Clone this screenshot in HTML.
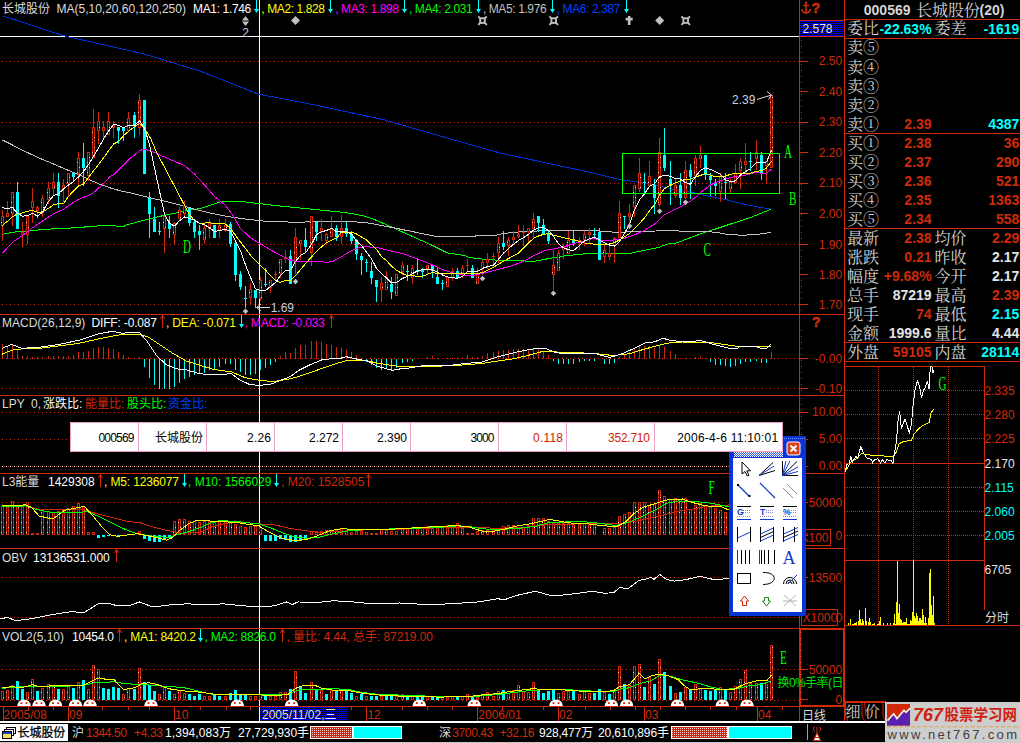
<!DOCTYPE html>
<html lang="zh"><head><meta charset="utf-8"><title>长城股份 000569</title>
<style>html,body{margin:0;padding:0;background:#000;}body{width:1020px;height:743px;overflow:hidden;}svg{display:block;}text{white-space:pre;}</style>
</head><body>
<svg width="1020" height="743" viewBox="0 0 1020 743">
<rect x="0" y="0" width="1020" height="743" fill="#000"/>
<g shape-rendering="crispEdges">
<line x1="2" y1="61.5" x2="799" y2="61.5" stroke="#d02a0a" stroke-width="1" stroke-dasharray="1 3"/>
<line x1="2" y1="122.5" x2="799" y2="122.5" stroke="#d02a0a" stroke-width="1" stroke-dasharray="1 3"/>
<line x1="2" y1="183.5" x2="799" y2="183.5" stroke="#d02a0a" stroke-width="1" stroke-dasharray="1 3"/>
<line x1="2" y1="244.5" x2="799" y2="244.5" stroke="#d02a0a" stroke-width="1" stroke-dasharray="1 3"/>
<line x1="2" y1="304.5" x2="799" y2="304.5" stroke="#d02a0a" stroke-width="1" stroke-dasharray="1 3"/>
<line x1="2" y1="358.5" x2="799" y2="358.5" stroke="#d02a0a" stroke-width="1" stroke-dasharray="1 3"/>
<line x1="2" y1="388.5" x2="799" y2="388.5" stroke="#d02a0a" stroke-width="1" stroke-dasharray="1 3"/>
<line x1="2" y1="412.5" x2="799" y2="412.5" stroke="#d02a0a" stroke-width="1" stroke-dasharray="1 3"/>
<line x1="2" y1="439.5" x2="799" y2="439.5" stroke="#d02a0a" stroke-width="1" stroke-dasharray="1 3"/>
<line x1="2" y1="466.5" x2="799" y2="466.5" stroke="#ffffff" stroke-width="1" stroke-dasharray="1 3"/>
<line x1="4" y1="466.5" x2="799" y2="466.5" stroke="#d02a0a" stroke-width="1" stroke-dasharray="1 3"/>
<line x1="2" y1="502.5" x2="799" y2="502.5" stroke="#d02a0a" stroke-width="1" stroke-dasharray="1 3"/>
<line x1="2" y1="577.5" x2="799" y2="577.5" stroke="#d02a0a" stroke-width="1" stroke-dasharray="1 3"/>
<line x1="2" y1="617.5" x2="799" y2="617.5" stroke="#d02a0a" stroke-width="1" stroke-dasharray="1 3"/>
<line x1="2" y1="669.5" x2="799" y2="669.5" stroke="#d02a0a" stroke-width="1" stroke-dasharray="1 3"/>
<line x1="2" y1="700.5" x2="799" y2="700.5" stroke="#d02a0a" stroke-width="1" stroke-dasharray="1 3"/>
<rect x="259" y="0" width="1" height="721" fill="#fff"/>
<rect x="0" y="36" width="799" height="1" fill="#fff" />
</g>
<g shape-rendering="crispEdges" stroke-linejoin="round">
<polyline points="2.6,15.8 64.0,35.8 143.0,53.7 200.0,71.0 258.0,94.0 314.7,104.9 383.3,119.6 440.0,136.0 500.0,153.0 551.0,164.0 590.0,172.3 606.0,176.3 622.3,180.0 643.8,182.8 660.0,186.4 676.0,189.8 692.3,192.5 704.4,195.2 726.0,199.6 741.5,203.7 757.0,206.8 770.6,209.2" fill="none" stroke="#0030d8" stroke-width="1" />
<polyline points="2.0,234.5 13.5,232.1 27.0,231.2 40.4,229.7 56.5,228.7 75.4,227.8 91.5,226.4 102.3,225.6 115.7,225.6 117.0,226.4 123.8,226.4 127.2,224.4 130.0,224.0 150.2,218.6 164.6,215.3 184.5,211.2 200.0,208.5 210.8,205.2 221.5,201.5 241.7,201.5 259.0,203.6 280.0,206.0 300.0,208.0 320.0,210.0 340.0,212.0 350.0,213.3 363.5,215.8 377.0,220.5 390.4,226.5 403.8,232.6 417.3,238.6 430.8,244.7 447.0,252.8 464.4,255.5 470.0,257.6 483.5,259.2 503.6,260.6 534.6,261.2 545.4,259.2 564.2,255.9 577.7,254.5 590.4,253.4 629.7,253.4 642.2,250.8 657.7,247.7 668.0,244.0 676.4,243.0 680.0,241.8 684.2,240.0 697.7,234.9 707.0,231.8 720.0,227.5 751.8,217.0 770.6,209.4" fill="none" stroke="#00ff00" stroke-width="1" />
<polyline points="2.6,140.0 22.2,150.0 37.7,157.4 53.8,164.1 67.3,169.9 79.4,174.9 87.5,178.9 101.0,184.7 111.7,188.4 121.0,191.0 130.0,192.8 150.2,197.8 170.4,202.5 190.6,208.0 210.8,213.3 232.3,217.3 245.2,219.0 265.4,221.3 300.4,222.4 311.0,221.5 350.0,221.4 370.2,223.2 390.4,227.2 410.6,231.2 436.0,236.4 475.2,236.6 475.8,235.7 497.0,235.0 503.6,233.4 523.8,231.6 544.0,230.7 580.0,230.4 596.6,230.4 598.7,231.0 611.0,231.4 613.2,232.4 655.6,231.0 657.7,230.4 677.4,230.4 680.0,231.4 707.0,231.4 717.6,232.6 728.2,234.5 743.5,235.3 753.0,234.5 763.5,233.8 770.6,232.1" fill="none" stroke="#c0c0c0" stroke-width="1" />
</g>
<g shape-rendering="crispEdges">
<rect x="2" y="210" width="1" height="31" fill="#d02a0a"/>
<rect x="1" y="216" width="3" height="10" fill="#d02a0a"/>
<rect x="2" y="217" width="1" height="8" fill="#000"/>
<rect x="1" y="222" width="1" height="1" fill="#e6d6ee"/>
<rect x="7" y="201" width="1" height="16" fill="#d02a0a"/>
<rect x="6" y="213" width="3" height="4" fill="#d02a0a"/>
<rect x="7" y="214" width="1" height="2" fill="#000"/>
<rect x="12" y="192" width="1" height="34" fill="#d02a0a"/>
<rect x="11" y="192" width="3" height="22" fill="#d02a0a"/>
<rect x="12" y="193" width="1" height="20" fill="#000"/>
<rect x="13" y="197" width="1" height="1" fill="#e6d6ee"/><rect x="11" y="202" width="1" height="1" fill="#e6d6ee"/><rect x="13" y="207" width="1" height="1" fill="#e6d6ee"/><rect x="11" y="212" width="1" height="1" fill="#e6d6ee"/>
<rect x="17" y="182" width="1" height="47" fill="#00ffff"/>
<rect x="16" y="192" width="3" height="37" fill="#00ffff"/>
<rect x="22" y="222" width="1" height="25" fill="#d02a0a"/>
<rect x="21" y="232" width="3" height="3" fill="#d02a0a"/>
<rect x="22" y="233" width="1" height="1" fill="#000"/>
<rect x="27" y="215" width="1" height="29" fill="#d02a0a"/>
<rect x="26" y="216" width="3" height="19" fill="#d02a0a"/>
<rect x="27" y="217" width="1" height="17" fill="#000"/>
<rect x="26" y="222" width="1" height="1" fill="#e6d6ee"/><rect x="28" y="227" width="1" height="1" fill="#e6d6ee"/><rect x="26" y="232" width="1" height="1" fill="#e6d6ee"/>
<rect x="32" y="188" width="1" height="35" fill="#d02a0a"/>
<rect x="31" y="201" width="3" height="7" fill="#d02a0a"/>
<rect x="32" y="202" width="1" height="5" fill="#000"/>
<rect x="37" y="206" width="1" height="13" fill="#d02a0a"/>
<rect x="36" y="207" width="3" height="4" fill="#d02a0a"/>
<rect x="37" y="208" width="1" height="2" fill="#000"/>
<rect x="42" y="195" width="1" height="22" fill="#d02a0a"/>
<rect x="41" y="198" width="3" height="15" fill="#d02a0a"/>
<rect x="42" y="199" width="1" height="13" fill="#000"/>
<rect x="41" y="202" width="1" height="1" fill="#e6d6ee"/><rect x="43" y="207" width="1" height="1" fill="#e6d6ee"/>
<rect x="48" y="182" width="1" height="22" fill="#d02a0a"/>
<rect x="47" y="188" width="3" height="12" fill="#d02a0a"/>
<rect x="48" y="189" width="1" height="10" fill="#000"/>
<rect x="47" y="192" width="1" height="1" fill="#e6d6ee"/><rect x="49" y="197" width="1" height="1" fill="#e6d6ee"/>
<rect x="53" y="173" width="1" height="22" fill="#d02a0a"/>
<rect x="52" y="182" width="3" height="7" fill="#d02a0a"/>
<rect x="53" y="183" width="1" height="5" fill="#000"/>
<rect x="54" y="187" width="1" height="1" fill="#e6d6ee"/>
<rect x="58" y="173" width="1" height="35" fill="#00ffff"/>
<rect x="57" y="182" width="3" height="14" fill="#00ffff"/>
<rect x="63" y="179" width="1" height="23" fill="#d02a0a"/>
<rect x="62" y="185" width="3" height="4" fill="#d02a0a"/>
<rect x="63" y="186" width="1" height="2" fill="#000"/>
<rect x="64" y="187" width="1" height="1" fill="#e6d6ee"/>
<rect x="68" y="173" width="1" height="23" fill="#d02a0a"/>
<rect x="67" y="173" width="3" height="11" fill="#d02a0a"/>
<rect x="68" y="174" width="1" height="9" fill="#000"/>
<rect x="69" y="177" width="1" height="1" fill="#e6d6ee"/><rect x="67" y="182" width="1" height="1" fill="#e6d6ee"/>
<rect x="73" y="172" width="1" height="10" fill="#00ffff"/>
<rect x="72" y="173" width="3" height="4" fill="#00ffff"/>
<rect x="78" y="152" width="1" height="33" fill="#d02a0a"/>
<rect x="77" y="158" width="3" height="16" fill="#d02a0a"/>
<rect x="78" y="159" width="1" height="14" fill="#000"/>
<rect x="77" y="162" width="1" height="1" fill="#e6d6ee"/><rect x="79" y="167" width="1" height="1" fill="#e6d6ee"/><rect x="77" y="172" width="1" height="1" fill="#e6d6ee"/>
<rect x="83" y="143" width="1" height="43" fill="#00ffff"/>
<rect x="82" y="158" width="3" height="10" fill="#00ffff"/>
<rect x="88" y="152" width="1" height="29" fill="#d02a0a"/>
<rect x="87" y="152" width="3" height="24" fill="#d02a0a"/>
<rect x="88" y="153" width="1" height="22" fill="#000"/>
<rect x="89" y="157" width="1" height="1" fill="#e6d6ee"/><rect x="87" y="162" width="1" height="1" fill="#e6d6ee"/><rect x="89" y="167" width="1" height="1" fill="#e6d6ee"/><rect x="87" y="172" width="1" height="1" fill="#e6d6ee"/>
<rect x="93" y="109" width="1" height="49" fill="#d02a0a"/>
<rect x="92" y="127" width="3" height="31" fill="#d02a0a"/>
<rect x="93" y="128" width="1" height="29" fill="#000"/>
<rect x="92" y="132" width="1" height="1" fill="#e6d6ee"/><rect x="94" y="137" width="1" height="1" fill="#e6d6ee"/><rect x="92" y="142" width="1" height="1" fill="#e6d6ee"/><rect x="94" y="147" width="1" height="1" fill="#e6d6ee"/><rect x="92" y="152" width="1" height="1" fill="#e6d6ee"/>
<rect x="98" y="112" width="1" height="32" fill="#d02a0a"/>
<rect x="97" y="121" width="3" height="10" fill="#d02a0a"/>
<rect x="98" y="122" width="1" height="8" fill="#000"/>
<rect x="99" y="127" width="1" height="1" fill="#e6d6ee"/>
<rect x="103" y="121" width="1" height="18" fill="#d02a0a"/>
<rect x="102" y="127" width="3" height="4" fill="#d02a0a"/>
<rect x="103" y="128" width="1" height="2" fill="#000"/>
<rect x="108" y="112" width="1" height="23" fill="#d02a0a"/>
<rect x="107" y="121" width="3" height="14" fill="#d02a0a"/>
<rect x="108" y="122" width="1" height="12" fill="#000"/>
<rect x="109" y="127" width="1" height="1" fill="#e6d6ee"/><rect x="107" y="132" width="1" height="1" fill="#e6d6ee"/>
<rect x="113" y="121" width="1" height="17" fill="#d02a0a"/>
<rect x="112" y="125" width="3" height="3" fill="#d02a0a"/>
<rect x="113" y="126" width="1" height="1" fill="#000"/>
<rect x="118" y="127" width="1" height="17" fill="#00ffff"/>
<rect x="117" y="127" width="3" height="4" fill="#00ffff"/>
<rect x="123" y="127" width="1" height="14" fill="#00ffff"/>
<rect x="122" y="128" width="3" height="3" fill="#00ffff"/>
<rect x="128" y="112" width="1" height="19" fill="#d02a0a"/>
<rect x="127" y="118" width="3" height="13" fill="#d02a0a"/>
<rect x="128" y="119" width="1" height="11" fill="#000"/>
<rect x="127" y="122" width="1" height="1" fill="#e6d6ee"/><rect x="129" y="127" width="1" height="1" fill="#e6d6ee"/>
<rect x="134" y="112" width="1" height="26" fill="#00ffff"/>
<rect x="133" y="115" width="3" height="10" fill="#00ffff"/>
<rect x="139" y="94" width="1" height="41" fill="#d02a0a"/>
<rect x="138" y="100" width="3" height="28" fill="#d02a0a"/>
<rect x="139" y="101" width="1" height="26" fill="#000"/>
<rect x="138" y="102" width="1" height="1" fill="#e6d6ee"/><rect x="140" y="107" width="1" height="1" fill="#e6d6ee"/><rect x="138" y="112" width="1" height="1" fill="#e6d6ee"/><rect x="140" y="117" width="1" height="1" fill="#e6d6ee"/><rect x="138" y="122" width="1" height="1" fill="#e6d6ee"/>
<rect x="144" y="100" width="1" height="74" fill="#00ffff"/>
<rect x="143" y="100" width="3" height="74" fill="#00ffff"/>
<rect x="149" y="192" width="1" height="46" fill="#00ffff"/>
<rect x="148" y="198" width="3" height="16" fill="#00ffff"/>
<rect x="154" y="207" width="1" height="25" fill="#00ffff"/>
<rect x="153" y="219" width="3" height="13" fill="#00ffff"/>
<rect x="159" y="222" width="1" height="13" fill="#00ffff"/>
<rect x="158" y="231" width="3" height="1" fill="#00ffff"/>
<rect x="164" y="216" width="1" height="37" fill="#d02a0a"/>
<rect x="163" y="216" width="3" height="13" fill="#d02a0a"/>
<rect x="164" y="217" width="1" height="11" fill="#000"/>
<rect x="163" y="222" width="1" height="1" fill="#e6d6ee"/><rect x="165" y="227" width="1" height="1" fill="#e6d6ee"/>
<rect x="169" y="216" width="1" height="22" fill="#00ffff"/>
<rect x="168" y="223" width="3" height="6" fill="#00ffff"/>
<rect x="174" y="222" width="1" height="22" fill="#d02a0a"/>
<rect x="173" y="223" width="3" height="12" fill="#d02a0a"/>
<rect x="174" y="224" width="1" height="10" fill="#000"/>
<rect x="175" y="227" width="1" height="1" fill="#e6d6ee"/><rect x="173" y="232" width="1" height="1" fill="#e6d6ee"/>
<rect x="179" y="207" width="1" height="12" fill="#d02a0a"/>
<rect x="178" y="210" width="3" height="9" fill="#d02a0a"/>
<rect x="179" y="211" width="1" height="7" fill="#000"/>
<rect x="178" y="212" width="1" height="1" fill="#e6d6ee"/><rect x="180" y="217" width="1" height="1" fill="#e6d6ee"/>
<rect x="184" y="201" width="1" height="16" fill="#d02a0a"/>
<rect x="183" y="206" width="3" height="8" fill="#d02a0a"/>
<rect x="184" y="207" width="1" height="6" fill="#000"/>
<rect x="183" y="212" width="1" height="1" fill="#e6d6ee"/>
<rect x="189" y="208" width="1" height="18" fill="#00ffff"/>
<rect x="188" y="208" width="3" height="15" fill="#00ffff"/>
<rect x="194" y="219" width="1" height="19" fill="#00ffff"/>
<rect x="193" y="222" width="3" height="10" fill="#00ffff"/>
<rect x="199" y="225" width="1" height="25" fill="#00ffff"/>
<rect x="198" y="231" width="3" height="4" fill="#00ffff"/>
<rect x="204" y="223" width="1" height="21" fill="#d02a0a"/>
<rect x="203" y="228" width="3" height="12" fill="#d02a0a"/>
<rect x="204" y="229" width="1" height="10" fill="#000"/>
<rect x="203" y="232" width="1" height="1" fill="#e6d6ee"/><rect x="205" y="237" width="1" height="1" fill="#e6d6ee"/>
<rect x="209" y="219" width="1" height="19" fill="#d02a0a"/>
<rect x="208" y="223" width="3" height="6" fill="#d02a0a"/>
<rect x="209" y="224" width="1" height="4" fill="#000"/>
<rect x="210" y="227" width="1" height="1" fill="#e6d6ee"/>
<rect x="214" y="225" width="1" height="13" fill="#00ffff"/>
<rect x="213" y="225" width="3" height="13" fill="#00ffff"/>
<rect x="219" y="219" width="1" height="19" fill="#d02a0a"/>
<rect x="218" y="225" width="3" height="6" fill="#d02a0a"/>
<rect x="219" y="226" width="1" height="4" fill="#000"/>
<rect x="220" y="227" width="1" height="1" fill="#e6d6ee"/>
<rect x="225" y="219" width="1" height="13" fill="#d02a0a"/>
<rect x="224" y="225" width="3" height="6" fill="#d02a0a"/>
<rect x="225" y="226" width="1" height="4" fill="#000"/>
<rect x="226" y="227" width="1" height="1" fill="#e6d6ee"/>
<rect x="230" y="222" width="1" height="25" fill="#00ffff"/>
<rect x="229" y="224" width="3" height="20" fill="#00ffff"/>
<rect x="235" y="242" width="1" height="39" fill="#00ffff"/>
<rect x="234" y="243" width="3" height="32" fill="#00ffff"/>
<rect x="240" y="271" width="1" height="19" fill="#00ffff"/>
<rect x="239" y="274" width="3" height="13" fill="#00ffff"/>
<rect x="245" y="286" width="1" height="22" fill="#00ffff"/>
<rect x="244" y="298" width="3" height="1" fill="#00ffff"/>
<rect x="250" y="283" width="1" height="21" fill="#d02a0a"/>
<rect x="249" y="289" width="3" height="9" fill="#d02a0a"/>
<rect x="250" y="290" width="1" height="7" fill="#000"/>
<rect x="249" y="292" width="1" height="1" fill="#e6d6ee"/>
<rect x="255" y="290" width="1" height="18" fill="#00ffff"/>
<rect x="254" y="290" width="3" height="8" fill="#00ffff"/>
<rect x="260" y="277" width="1" height="24" fill="#d02a0a"/>
<rect x="259" y="280" width="3" height="19" fill="#d02a0a"/>
<rect x="260" y="281" width="1" height="17" fill="#000"/>
<rect x="259" y="282" width="1" height="1" fill="#e6d6ee"/><rect x="261" y="287" width="1" height="1" fill="#e6d6ee"/><rect x="259" y="292" width="1" height="1" fill="#e6d6ee"/><rect x="261" y="297" width="1" height="1" fill="#e6d6ee"/>
<rect x="265" y="268" width="1" height="19" fill="#00ffff"/>
<rect x="264" y="284" width="3" height="1" fill="#00ffff"/>
<rect x="270" y="280" width="1" height="13" fill="#d02a0a"/>
<rect x="269" y="280" width="3" height="8" fill="#d02a0a"/>
<rect x="270" y="281" width="1" height="6" fill="#000"/>
<rect x="269" y="282" width="1" height="1" fill="#e6d6ee"/>
<rect x="275" y="271" width="1" height="10" fill="#d02a0a"/>
<rect x="274" y="274" width="3" height="1" fill="#d02a0a"/>
<rect x="280" y="259" width="1" height="19" fill="#d02a0a"/>
<rect x="279" y="259" width="3" height="15" fill="#d02a0a"/>
<rect x="280" y="260" width="1" height="13" fill="#000"/>
<rect x="279" y="262" width="1" height="1" fill="#e6d6ee"/><rect x="281" y="267" width="1" height="1" fill="#e6d6ee"/><rect x="279" y="272" width="1" height="1" fill="#e6d6ee"/>
<rect x="285" y="250" width="1" height="13" fill="#d02a0a"/>
<rect x="284" y="257" width="3" height="2" fill="#d02a0a"/>
<rect x="290" y="250" width="1" height="34" fill="#00ffff"/>
<rect x="289" y="256" width="3" height="28" fill="#00ffff"/>
<rect x="295" y="228" width="1" height="46" fill="#d02a0a"/>
<rect x="294" y="237" width="3" height="24" fill="#d02a0a"/>
<rect x="295" y="238" width="1" height="22" fill="#000"/>
<rect x="294" y="242" width="1" height="1" fill="#e6d6ee"/><rect x="296" y="247" width="1" height="1" fill="#e6d6ee"/><rect x="294" y="252" width="1" height="1" fill="#e6d6ee"/><rect x="296" y="257" width="1" height="1" fill="#e6d6ee"/>
<rect x="300" y="240" width="1" height="20" fill="#d02a0a"/>
<rect x="299" y="240" width="3" height="4" fill="#d02a0a"/>
<rect x="300" y="241" width="1" height="2" fill="#000"/>
<rect x="299" y="242" width="1" height="1" fill="#e6d6ee"/>
<rect x="305" y="228" width="1" height="25" fill="#00ffff"/>
<rect x="304" y="240" width="3" height="7" fill="#00ffff"/>
<rect x="311" y="216" width="1" height="50" fill="#d02a0a"/>
<rect x="310" y="216" width="3" height="37" fill="#d02a0a"/>
<rect x="311" y="217" width="1" height="35" fill="#000"/>
<rect x="310" y="222" width="1" height="1" fill="#e6d6ee"/><rect x="312" y="227" width="1" height="1" fill="#e6d6ee"/><rect x="310" y="232" width="1" height="1" fill="#e6d6ee"/><rect x="312" y="237" width="1" height="1" fill="#e6d6ee"/><rect x="310" y="242" width="1" height="1" fill="#e6d6ee"/><rect x="312" y="247" width="1" height="1" fill="#e6d6ee"/>
<rect x="316" y="222" width="1" height="19" fill="#00ffff"/>
<rect x="315" y="222" width="3" height="10" fill="#00ffff"/>
<rect x="321" y="219" width="1" height="22" fill="#d02a0a"/>
<rect x="320" y="228" width="3" height="4" fill="#d02a0a"/>
<rect x="321" y="229" width="1" height="2" fill="#000"/>
<rect x="326" y="233" width="1" height="11" fill="#d02a0a"/>
<rect x="325" y="234" width="3" height="7" fill="#d02a0a"/>
<rect x="326" y="235" width="1" height="5" fill="#000"/>
<rect x="327" y="237" width="1" height="1" fill="#e6d6ee"/>
<rect x="331" y="216" width="1" height="21" fill="#d02a0a"/>
<rect x="330" y="228" width="3" height="9" fill="#d02a0a"/>
<rect x="331" y="229" width="1" height="7" fill="#000"/>
<rect x="330" y="232" width="1" height="1" fill="#e6d6ee"/>
<rect x="336" y="225" width="1" height="16" fill="#00ffff"/>
<rect x="335" y="228" width="3" height="9" fill="#00ffff"/>
<rect x="341" y="215" width="1" height="29" fill="#d02a0a"/>
<rect x="340" y="228" width="3" height="9" fill="#d02a0a"/>
<rect x="341" y="229" width="1" height="7" fill="#000"/>
<rect x="340" y="232" width="1" height="1" fill="#e6d6ee"/>
<rect x="346" y="222" width="1" height="15" fill="#00ffff"/>
<rect x="345" y="228" width="3" height="6" fill="#00ffff"/>
<rect x="351" y="231" width="1" height="13" fill="#00ffff"/>
<rect x="350" y="234" width="3" height="7" fill="#00ffff"/>
<rect x="356" y="239" width="1" height="21" fill="#00ffff"/>
<rect x="355" y="240" width="3" height="14" fill="#00ffff"/>
<rect x="361" y="253" width="1" height="22" fill="#00ffff"/>
<rect x="360" y="256" width="3" height="4" fill="#00ffff"/>
<rect x="366" y="259" width="1" height="13" fill="#00ffff"/>
<rect x="365" y="262" width="3" height="1" fill="#00ffff"/>
<rect x="371" y="262" width="1" height="22" fill="#00ffff"/>
<rect x="370" y="271" width="3" height="7" fill="#00ffff"/>
<rect x="376" y="280" width="1" height="22" fill="#00ffff"/>
<rect x="375" y="280" width="3" height="7" fill="#00ffff"/>
<rect x="381" y="277" width="1" height="25" fill="#d02a0a"/>
<rect x="380" y="283" width="3" height="7" fill="#d02a0a"/>
<rect x="381" y="284" width="1" height="5" fill="#000"/>
<rect x="382" y="287" width="1" height="1" fill="#e6d6ee"/>
<rect x="386" y="271" width="1" height="19" fill="#d02a0a"/>
<rect x="385" y="277" width="3" height="13" fill="#d02a0a"/>
<rect x="386" y="278" width="1" height="11" fill="#000"/>
<rect x="385" y="282" width="1" height="1" fill="#e6d6ee"/><rect x="387" y="287" width="1" height="1" fill="#e6d6ee"/>
<rect x="391" y="277" width="1" height="22" fill="#00ffff"/>
<rect x="390" y="284" width="3" height="8" fill="#00ffff"/>
<rect x="396" y="274" width="1" height="22" fill="#d02a0a"/>
<rect x="395" y="274" width="3" height="22" fill="#d02a0a"/>
<rect x="396" y="275" width="1" height="20" fill="#000"/>
<rect x="397" y="277" width="1" height="1" fill="#e6d6ee"/><rect x="395" y="282" width="1" height="1" fill="#e6d6ee"/><rect x="397" y="287" width="1" height="1" fill="#e6d6ee"/><rect x="395" y="292" width="1" height="1" fill="#e6d6ee"/>
<rect x="402" y="262" width="1" height="13" fill="#d02a0a"/>
<rect x="401" y="265" width="3" height="7" fill="#d02a0a"/>
<rect x="402" y="266" width="1" height="5" fill="#000"/>
<rect x="403" y="267" width="1" height="1" fill="#e6d6ee"/>
<rect x="407" y="265" width="1" height="16" fill="#00ffff"/>
<rect x="406" y="271" width="3" height="1" fill="#00ffff"/>
<rect x="412" y="265" width="1" height="19" fill="#d02a0a"/>
<rect x="411" y="268" width="3" height="10" fill="#d02a0a"/>
<rect x="412" y="269" width="1" height="8" fill="#000"/>
<rect x="411" y="272" width="1" height="1" fill="#e6d6ee"/>
<rect x="417" y="259" width="1" height="16" fill="#00ffff"/>
<rect x="416" y="270" width="3" height="2" fill="#00ffff"/>
<rect x="422" y="268" width="1" height="10" fill="#00ffff"/>
<rect x="421" y="270" width="3" height="2" fill="#00ffff"/>
<rect x="427" y="265" width="1" height="10" fill="#d02a0a"/>
<rect x="426" y="265" width="3" height="4" fill="#d02a0a"/>
<rect x="427" y="266" width="1" height="2" fill="#000"/>
<rect x="428" y="267" width="1" height="1" fill="#e6d6ee"/>
<rect x="432" y="265" width="1" height="13" fill="#00ffff"/>
<rect x="431" y="265" width="3" height="6" fill="#00ffff"/>
<rect x="437" y="268" width="1" height="16" fill="#00ffff"/>
<rect x="436" y="277" width="3" height="7" fill="#00ffff"/>
<rect x="442" y="280" width="1" height="10" fill="#00ffff"/>
<rect x="441" y="283" width="3" height="1" fill="#00ffff"/>
<rect x="447" y="277" width="1" height="10" fill="#d02a0a"/>
<rect x="446" y="277" width="3" height="10" fill="#d02a0a"/>
<rect x="447" y="278" width="1" height="8" fill="#000"/>
<rect x="446" y="282" width="1" height="1" fill="#e6d6ee"/>
<rect x="452" y="268" width="1" height="13" fill="#d02a0a"/>
<rect x="451" y="271" width="3" height="7" fill="#d02a0a"/>
<rect x="452" y="272" width="1" height="5" fill="#000"/>
<rect x="457" y="268" width="1" height="10" fill="#00ffff"/>
<rect x="456" y="271" width="3" height="7" fill="#00ffff"/>
<rect x="462" y="265" width="1" height="13" fill="#d02a0a"/>
<rect x="461" y="268" width="3" height="6" fill="#d02a0a"/>
<rect x="462" y="269" width="1" height="4" fill="#000"/>
<rect x="461" y="272" width="1" height="1" fill="#e6d6ee"/>
<rect x="467" y="259" width="1" height="12" fill="#d02a0a"/>
<rect x="466" y="265" width="3" height="1" fill="#d02a0a"/>
<rect x="472" y="265" width="1" height="13" fill="#00ffff"/>
<rect x="471" y="268" width="3" height="10" fill="#00ffff"/>
<rect x="477" y="268" width="1" height="16" fill="#d02a0a"/>
<rect x="476" y="274" width="3" height="10" fill="#d02a0a"/>
<rect x="477" y="275" width="1" height="8" fill="#000"/>
<rect x="478" y="277" width="1" height="1" fill="#e6d6ee"/><rect x="476" y="282" width="1" height="1" fill="#e6d6ee"/>
<rect x="482" y="260" width="1" height="15" fill="#d02a0a"/>
<rect x="481" y="262" width="3" height="7" fill="#d02a0a"/>
<rect x="482" y="263" width="1" height="5" fill="#000"/>
<rect x="483" y="267" width="1" height="1" fill="#e6d6ee"/>
<rect x="487" y="253" width="1" height="16" fill="#d02a0a"/>
<rect x="486" y="259" width="3" height="4" fill="#d02a0a"/>
<rect x="487" y="260" width="1" height="2" fill="#000"/>
<rect x="493" y="253" width="1" height="12" fill="#d02a0a"/>
<rect x="492" y="256" width="3" height="1" fill="#d02a0a"/>
<rect x="498" y="237" width="1" height="26" fill="#d02a0a"/>
<rect x="497" y="243" width="3" height="10" fill="#d02a0a"/>
<rect x="498" y="244" width="1" height="8" fill="#000"/>
<rect x="499" y="247" width="1" height="1" fill="#e6d6ee"/>
<rect x="503" y="231" width="1" height="19" fill="#00ffff"/>
<rect x="502" y="243" width="3" height="4" fill="#00ffff"/>
<rect x="508" y="237" width="1" height="19" fill="#d02a0a"/>
<rect x="507" y="240" width="3" height="6" fill="#d02a0a"/>
<rect x="508" y="241" width="1" height="4" fill="#000"/>
<rect x="507" y="242" width="1" height="1" fill="#e6d6ee"/>
<rect x="513" y="231" width="1" height="13" fill="#d02a0a"/>
<rect x="512" y="237" width="3" height="3" fill="#d02a0a"/>
<rect x="513" y="238" width="1" height="1" fill="#000"/>
<rect x="518" y="225" width="1" height="13" fill="#d02a0a"/>
<rect x="517" y="234" width="3" height="3" fill="#d02a0a"/>
<rect x="518" y="235" width="1" height="1" fill="#000"/>
<rect x="523" y="225" width="1" height="21" fill="#d02a0a"/>
<rect x="522" y="232" width="3" height="1" fill="#d02a0a"/>
<rect x="528" y="228" width="1" height="16" fill="#d02a0a"/>
<rect x="527" y="228" width="3" height="4" fill="#d02a0a"/>
<rect x="528" y="229" width="1" height="2" fill="#000"/>
<rect x="533" y="213" width="1" height="25" fill="#d02a0a"/>
<rect x="532" y="219" width="3" height="10" fill="#d02a0a"/>
<rect x="533" y="220" width="1" height="8" fill="#000"/>
<rect x="532" y="222" width="1" height="1" fill="#e6d6ee"/><rect x="534" y="227" width="1" height="1" fill="#e6d6ee"/>
<rect x="538" y="216" width="1" height="16" fill="#00ffff"/>
<rect x="537" y="216" width="3" height="7" fill="#00ffff"/>
<rect x="543" y="219" width="1" height="15" fill="#00ffff"/>
<rect x="542" y="225" width="3" height="9" fill="#00ffff"/>
<rect x="548" y="231" width="1" height="13" fill="#00ffff"/>
<rect x="547" y="234" width="3" height="7" fill="#00ffff"/>
<rect x="553" y="250" width="1" height="40" fill="#d02a0a"/>
<rect x="552" y="265" width="3" height="10" fill="#d02a0a"/>
<rect x="553" y="266" width="1" height="8" fill="#000"/>
<rect x="554" y="267" width="1" height="1" fill="#e6d6ee"/><rect x="552" y="272" width="1" height="1" fill="#e6d6ee"/>
<rect x="558" y="250" width="1" height="21" fill="#d02a0a"/>
<rect x="557" y="253" width="3" height="18" fill="#d02a0a"/>
<rect x="558" y="254" width="1" height="16" fill="#000"/>
<rect x="559" y="257" width="1" height="1" fill="#e6d6ee"/><rect x="557" y="262" width="1" height="1" fill="#e6d6ee"/><rect x="559" y="267" width="1" height="1" fill="#e6d6ee"/>
<rect x="563" y="243" width="1" height="16" fill="#d02a0a"/>
<rect x="562" y="247" width="3" height="3" fill="#d02a0a"/>
<rect x="563" y="248" width="1" height="1" fill="#000"/>
<rect x="568" y="231" width="1" height="23" fill="#d02a0a"/>
<rect x="567" y="240" width="3" height="14" fill="#d02a0a"/>
<rect x="568" y="241" width="1" height="12" fill="#000"/>
<rect x="567" y="242" width="1" height="1" fill="#e6d6ee"/><rect x="569" y="247" width="1" height="1" fill="#e6d6ee"/><rect x="567" y="252" width="1" height="1" fill="#e6d6ee"/>
<rect x="573" y="231" width="1" height="15" fill="#00ffff"/>
<rect x="572" y="240" width="3" height="4" fill="#00ffff"/>
<rect x="579" y="237" width="1" height="13" fill="#d02a0a"/>
<rect x="578" y="240" width="3" height="3" fill="#d02a0a"/>
<rect x="579" y="241" width="1" height="1" fill="#000"/>
<rect x="584" y="231" width="1" height="15" fill="#d02a0a"/>
<rect x="583" y="234" width="3" height="6" fill="#d02a0a"/>
<rect x="584" y="235" width="1" height="4" fill="#000"/>
<rect x="585" y="237" width="1" height="1" fill="#e6d6ee"/>
<rect x="589" y="228" width="1" height="16" fill="#d02a0a"/>
<rect x="588" y="232" width="3" height="3" fill="#d02a0a"/>
<rect x="589" y="233" width="1" height="1" fill="#000"/>
<rect x="594" y="228" width="1" height="10" fill="#00ffff"/>
<rect x="593" y="234" width="3" height="1" fill="#00ffff"/>
<rect x="599" y="228" width="1" height="32" fill="#00ffff"/>
<rect x="598" y="232" width="3" height="28" fill="#00ffff"/>
<rect x="604" y="244" width="1" height="19" fill="#d02a0a"/>
<rect x="603" y="250" width="3" height="7" fill="#d02a0a"/>
<rect x="604" y="251" width="1" height="5" fill="#000"/>
<rect x="603" y="252" width="1" height="1" fill="#e6d6ee"/>
<rect x="609" y="246" width="1" height="14" fill="#d02a0a"/>
<rect x="608" y="253" width="3" height="4" fill="#d02a0a"/>
<rect x="609" y="254" width="1" height="2" fill="#000"/>
<rect x="614" y="237" width="1" height="26" fill="#d02a0a"/>
<rect x="613" y="238" width="3" height="8" fill="#d02a0a"/>
<rect x="614" y="239" width="1" height="6" fill="#000"/>
<rect x="613" y="242" width="1" height="1" fill="#e6d6ee"/>
<rect x="619" y="201" width="1" height="37" fill="#d02a0a"/>
<rect x="618" y="213" width="3" height="25" fill="#d02a0a"/>
<rect x="619" y="214" width="1" height="23" fill="#000"/>
<rect x="620" y="217" width="1" height="1" fill="#e6d6ee"/><rect x="618" y="222" width="1" height="1" fill="#e6d6ee"/><rect x="620" y="227" width="1" height="1" fill="#e6d6ee"/><rect x="618" y="232" width="1" height="1" fill="#e6d6ee"/>
<rect x="624" y="216" width="1" height="13" fill="#00ffff"/>
<rect x="623" y="216" width="3" height="1" fill="#00ffff"/>
<rect x="629" y="204" width="1" height="19" fill="#d02a0a"/>
<rect x="628" y="213" width="3" height="4" fill="#d02a0a"/>
<rect x="629" y="214" width="1" height="2" fill="#000"/>
<rect x="634" y="185" width="1" height="32" fill="#d02a0a"/>
<rect x="633" y="185" width="3" height="22" fill="#d02a0a"/>
<rect x="634" y="186" width="1" height="20" fill="#000"/>
<rect x="635" y="187" width="1" height="1" fill="#e6d6ee"/><rect x="633" y="192" width="1" height="1" fill="#e6d6ee"/><rect x="635" y="197" width="1" height="1" fill="#e6d6ee"/><rect x="633" y="202" width="1" height="1" fill="#e6d6ee"/>
<rect x="639" y="158" width="1" height="34" fill="#d02a0a"/>
<rect x="638" y="173" width="3" height="16" fill="#d02a0a"/>
<rect x="639" y="174" width="1" height="14" fill="#000"/>
<rect x="640" y="177" width="1" height="1" fill="#e6d6ee"/><rect x="638" y="182" width="1" height="1" fill="#e6d6ee"/><rect x="640" y="187" width="1" height="1" fill="#e6d6ee"/>
<rect x="644" y="173" width="1" height="22" fill="#00ffff"/>
<rect x="643" y="182" width="3" height="1" fill="#00ffff"/>
<rect x="649" y="161" width="1" height="25" fill="#d02a0a"/>
<rect x="648" y="176" width="3" height="10" fill="#d02a0a"/>
<rect x="649" y="177" width="1" height="8" fill="#000"/>
<rect x="648" y="182" width="1" height="1" fill="#e6d6ee"/>
<rect x="654" y="179" width="1" height="35" fill="#00ffff"/>
<rect x="653" y="185" width="3" height="13" fill="#00ffff"/>
<rect x="659" y="138" width="1" height="69" fill="#d02a0a"/>
<rect x="658" y="152" width="3" height="53" fill="#d02a0a"/>
<rect x="659" y="153" width="1" height="51" fill="#000"/>
<rect x="660" y="157" width="1" height="1" fill="#e6d6ee"/><rect x="658" y="162" width="1" height="1" fill="#e6d6ee"/><rect x="660" y="167" width="1" height="1" fill="#e6d6ee"/><rect x="658" y="172" width="1" height="1" fill="#e6d6ee"/><rect x="660" y="177" width="1" height="1" fill="#e6d6ee"/><rect x="658" y="182" width="1" height="1" fill="#e6d6ee"/><rect x="660" y="187" width="1" height="1" fill="#e6d6ee"/><rect x="658" y="192" width="1" height="1" fill="#e6d6ee"/><rect x="660" y="197" width="1" height="1" fill="#e6d6ee"/><rect x="658" y="202" width="1" height="1" fill="#e6d6ee"/>
<rect x="664" y="128" width="1" height="43" fill="#00ffff"/>
<rect x="663" y="155" width="3" height="13" fill="#00ffff"/>
<rect x="670" y="161" width="1" height="44" fill="#00ffff"/>
<rect x="669" y="179" width="3" height="7" fill="#00ffff"/>
<rect x="675" y="179" width="1" height="19" fill="#d02a0a"/>
<rect x="674" y="185" width="3" height="11" fill="#d02a0a"/>
<rect x="675" y="186" width="1" height="9" fill="#000"/>
<rect x="676" y="187" width="1" height="1" fill="#e6d6ee"/><rect x="674" y="192" width="1" height="1" fill="#e6d6ee"/>
<rect x="680" y="173" width="1" height="32" fill="#00ffff"/>
<rect x="679" y="185" width="3" height="13" fill="#00ffff"/>
<rect x="685" y="161" width="1" height="38" fill="#d02a0a"/>
<rect x="684" y="170" width="3" height="28" fill="#d02a0a"/>
<rect x="685" y="171" width="1" height="26" fill="#000"/>
<rect x="684" y="172" width="1" height="1" fill="#e6d6ee"/><rect x="686" y="177" width="1" height="1" fill="#e6d6ee"/><rect x="684" y="182" width="1" height="1" fill="#e6d6ee"/><rect x="686" y="187" width="1" height="1" fill="#e6d6ee"/><rect x="684" y="192" width="1" height="1" fill="#e6d6ee"/>
<rect x="690" y="164" width="1" height="35" fill="#00ffff"/>
<rect x="689" y="170" width="3" height="7" fill="#00ffff"/>
<rect x="695" y="155" width="1" height="31" fill="#d02a0a"/>
<rect x="694" y="158" width="3" height="18" fill="#d02a0a"/>
<rect x="695" y="159" width="1" height="16" fill="#000"/>
<rect x="694" y="162" width="1" height="1" fill="#e6d6ee"/><rect x="696" y="167" width="1" height="1" fill="#e6d6ee"/><rect x="694" y="172" width="1" height="1" fill="#e6d6ee"/>
<rect x="700" y="146" width="1" height="22" fill="#d02a0a"/>
<rect x="699" y="155" width="3" height="4" fill="#d02a0a"/>
<rect x="700" y="156" width="1" height="2" fill="#000"/>
<rect x="701" y="157" width="1" height="1" fill="#e6d6ee"/>
<rect x="705" y="155" width="1" height="25" fill="#00ffff"/>
<rect x="704" y="155" width="3" height="20" fill="#00ffff"/>
<rect x="710" y="173" width="1" height="23" fill="#00ffff"/>
<rect x="709" y="176" width="3" height="4" fill="#00ffff"/>
<rect x="715" y="179" width="1" height="17" fill="#00ffff"/>
<rect x="714" y="182" width="3" height="4" fill="#00ffff"/>
<rect x="720" y="173" width="1" height="29" fill="#d02a0a"/>
<rect x="719" y="176" width="3" height="16" fill="#d02a0a"/>
<rect x="720" y="177" width="1" height="14" fill="#000"/>
<rect x="719" y="182" width="1" height="1" fill="#e6d6ee"/><rect x="721" y="187" width="1" height="1" fill="#e6d6ee"/>
<rect x="725" y="173" width="1" height="26" fill="#00ffff"/>
<rect x="724" y="182" width="3" height="1" fill="#00ffff"/>
<rect x="730" y="179" width="1" height="14" fill="#d02a0a"/>
<rect x="729" y="182" width="3" height="7" fill="#d02a0a"/>
<rect x="730" y="183" width="1" height="5" fill="#000"/>
<rect x="731" y="187" width="1" height="1" fill="#e6d6ee"/>
<rect x="735" y="164" width="1" height="20" fill="#d02a0a"/>
<rect x="734" y="173" width="3" height="10" fill="#d02a0a"/>
<rect x="735" y="174" width="1" height="8" fill="#000"/>
<rect x="736" y="177" width="1" height="1" fill="#e6d6ee"/>
<rect x="740" y="158" width="1" height="31" fill="#d02a0a"/>
<rect x="739" y="161" width="3" height="10" fill="#d02a0a"/>
<rect x="740" y="162" width="1" height="8" fill="#000"/>
<rect x="741" y="167" width="1" height="1" fill="#e6d6ee"/>
<rect x="745" y="143" width="1" height="30" fill="#d02a0a"/>
<rect x="744" y="161" width="3" height="4" fill="#d02a0a"/>
<rect x="745" y="162" width="1" height="2" fill="#000"/>
<rect x="750" y="152" width="1" height="19" fill="#00ffff"/>
<rect x="749" y="161" width="3" height="1" fill="#00ffff"/>
<rect x="756" y="140" width="1" height="30" fill="#d02a0a"/>
<rect x="755" y="152" width="3" height="7" fill="#d02a0a"/>
<rect x="756" y="153" width="1" height="5" fill="#000"/>
<rect x="757" y="157" width="1" height="1" fill="#e6d6ee"/>
<rect x="761" y="152" width="1" height="28" fill="#00ffff"/>
<rect x="760" y="155" width="3" height="18" fill="#00ffff"/>
<rect x="766" y="161" width="1" height="22" fill="#d02a0a"/>
<rect x="765" y="161" width="3" height="5" fill="#d02a0a"/>
<rect x="766" y="162" width="1" height="3" fill="#000"/>
<rect x="771" y="95" width="1" height="73" fill="#d02a0a"/>
<rect x="770" y="95" width="3" height="73" fill="#d02a0a"/>
<rect x="771" y="96" width="1" height="71" fill="#000"/>
<rect x="772" y="97" width="1" height="1" fill="#e6d6ee"/><rect x="770" y="102" width="1" height="1" fill="#e6d6ee"/><rect x="772" y="107" width="1" height="1" fill="#e6d6ee"/><rect x="770" y="112" width="1" height="1" fill="#e6d6ee"/><rect x="772" y="117" width="1" height="1" fill="#e6d6ee"/><rect x="770" y="122" width="1" height="1" fill="#e6d6ee"/><rect x="772" y="127" width="1" height="1" fill="#e6d6ee"/><rect x="770" y="132" width="1" height="1" fill="#e6d6ee"/><rect x="772" y="137" width="1" height="1" fill="#e6d6ee"/><rect x="770" y="142" width="1" height="1" fill="#e6d6ee"/><rect x="772" y="147" width="1" height="1" fill="#e6d6ee"/><rect x="770" y="152" width="1" height="1" fill="#e6d6ee"/><rect x="772" y="157" width="1" height="1" fill="#e6d6ee"/><rect x="770" y="162" width="1" height="1" fill="#e6d6ee"/>
</g>
<g shape-rendering="crispEdges" stroke-linejoin="round">
<polyline points="2.6,252.9 5.4,250.0 13.5,241.5 22.5,235.5 32.6,227.8 42.5,221.0 53.4,213.9 63.5,209.2 70.0,204.5 78.5,199.5 86.1,196.4 93.4,192.8 102.3,184.7 110.4,176.2 114.4,174.2 121.0,167.5 130.0,158.3 134.6,155.0 139.6,150.5 144.4,149.3 150.8,151.0 157.5,153.6 161.0,155.4 174.5,161.4 184.5,165.5 194.6,174.2 204.6,185.0 214.5,196.4 225.3,205.2 232.3,214.6 240.5,228.5 250.6,237.9 259.7,243.5 270.8,250.0 280.5,255.4 290.5,260.0 295.5,261.4 305.6,262.0 319.2,261.4 327.3,262.4 332.7,261.4 341.6,256.7 350.0,251.4 358.0,248.0 364.8,246.7 377.0,247.4 390.4,250.8 403.8,254.0 417.3,258.8 430.8,264.2 444.2,270.3 457.7,274.3 470.0,276.0 482.5,273.4 493.5,270.7 503.5,268.0 513.3,265.3 523.6,261.2 533.5,255.9 543.5,251.1 548.5,249.4 553.4,249.0 563.5,247.0 573.5,243.7 584.4,241.0 589.5,239.4 594.5,238.3 599.5,240.0 609.5,240.4 619.6,239.4 624.6,238.3 635.0,234.7 644.5,230.2 654.6,224.1 664.6,214.7 675.6,209.3 685.6,203.9 690.5,201.2 695.5,197.2 700.6,192.5 705.5,188.9 710.6,185.0 715.6,182.4 720.4,180.9 725.4,179.4 730.4,177.3 735.4,176.8 740.4,175.8 745.4,175.2 750.5,173.7 756.5,172.1 761.5,173.4 766.5,173.4 771.5,169.0" fill="none" stroke="#ff00ff" stroke-width="1" />
<polyline points="2.0,225.6 7.4,221.3 12.4,216.9 17.5,213.9 22.5,213.0 27.6,211.2 32.6,210.3 37.4,212.2 42.5,211.9 48.2,208.5 53.4,204.9 58.4,203.6 63.5,203.6 68.5,196.4 73.5,191.0 78.5,186.0 83.4,184.3 88.4,177.6 93.5,171.0 103.6,157.7 113.6,144.0 118.5,141.5 123.6,135.5 128.5,131.4 134.6,126.7 139.6,123.4 144.4,128.0 150.8,138.8 156.0,151.0 164.6,167.5 174.5,186.3 184.5,205.2 189.5,214.6 194.6,220.7 199.6,223.4 209.4,222.7 214.5,223.8 225.3,224.0 230.4,228.5 240.5,242.0 250.6,255.4 259.7,264.8 265.6,270.2 275.7,281.0 280.5,282.3 285.6,280.5 290.5,280.5 295.5,275.6 305.6,263.5 316.5,251.3 326.5,242.6 336.6,237.9 341.6,232.5 351.5,232.2 356.5,234.0 366.4,240.0 376.5,249.4 381.5,256.8 386.3,260.2 391.5,266.2 396.6,270.3 402.5,273.6 407.6,275.7 412.4,275.7 417.6,276.3 422.5,276.3 427.5,274.3 432.5,272.3 437.5,273.6 447.6,273.6 457.4,273.6 472.5,274.0 482.5,272.7 493.5,267.3 503.5,261.2 513.3,255.9 518.5,253.2 528.5,243.0 533.5,238.4 538.5,236.0 543.5,234.3 548.5,233.6 553.4,235.0 563.5,237.7 573.5,239.7 584.4,243.0 589.5,243.5 599.5,245.0 609.5,244.0 614.5,242.5 619.6,240.0 624.6,236.8 629.6,233.5 634.5,228.8 639.5,223.4 644.5,218.0 649.5,210.7 654.6,204.6 659.6,195.2 664.6,188.5 670.5,185.0 675.6,182.8 680.4,181.0 685.6,179.3 690.5,179.3 695.5,177.0 700.6,175.3 705.5,173.6 710.6,175.3 715.6,176.6 720.4,176.3 725.4,176.3 730.4,174.2 735.4,173.7 740.4,173.4 745.4,173.4 750.5,173.2 756.5,171.1 761.5,170.9 766.5,168.0 771.5,161.2" fill="none" stroke="#ffff00" stroke-width="1" />
<polyline points="2.0,207.6 7.4,208.5 12.4,207.6 17.5,213.3 22.5,216.2 27.6,215.7 32.6,213.3 37.4,216.2 42.5,212.2 48.2,201.8 53.4,195.8 58.4,193.7 63.5,189.0 68.5,185.0 73.5,181.6 78.5,176.9 83.4,171.5 88.4,164.8 93.5,156.3 98.5,148.0 103.6,138.8 108.6,131.0 113.6,124.3 118.5,125.4 123.6,127.8 128.5,125.1 134.6,125.4 139.6,121.0 144.4,128.0 149.4,144.2 157.0,179.6 164.6,214.6 169.6,223.4 174.5,226.0 179.5,220.7 184.5,217.0 189.5,218.6 194.6,220.0 199.6,223.4 204.6,224.7 209.4,228.0 214.5,231.4 219.5,230.5 225.3,229.4 230.4,231.0 235.5,240.6 240.5,250.7 245.5,264.8 250.6,277.6 255.6,289.0 260.7,290.6 265.6,290.4 270.8,286.3 275.7,282.3 280.5,275.6 285.6,270.2 290.5,270.0 295.5,261.4 300.6,255.4 305.6,252.7 311.4,244.6 316.5,234.5 321.5,231.8 326.5,230.5 331.6,228.2 336.6,231.8 341.6,231.4 346.5,231.8 351.5,233.8 356.5,241.3 361.4,245.4 366.4,252.0 371.5,258.8 376.5,268.3 381.5,273.6 386.3,277.7 391.5,283.0 396.6,282.4 402.5,278.4 407.6,276.3 412.4,273.6 417.6,271.0 422.5,269.6 427.5,269.6 432.5,270.0 437.5,272.3 442.5,275.0 447.6,277.0 452.6,277.7 457.4,278.4 462.5,276.3 467.5,271.6 472.5,271.4 477.5,271.4 482.5,268.6 487.5,266.6 493.5,265.3 498.5,259.2 503.5,253.2 508.5,248.5 513.3,244.4 518.5,240.4 523.6,237.7 528.5,234.3 533.5,230.3 538.5,227.6 543.5,227.6 548.5,230.3 553.4,236.3 558.4,243.7 563.5,247.8 568.5,249.8 573.5,250.5 579.4,245.8 584.4,241.0 589.5,238.9 594.5,237.3 599.5,240.0 604.6,243.0 609.5,245.0 614.5,246.1 619.6,241.5 624.6,233.2 629.6,224.1 634.5,210.0 639.5,199.9 644.5,193.8 649.5,186.4 654.6,183.7 659.6,176.6 664.6,175.3 670.5,176.3 675.6,178.8 680.4,179.0 685.6,182.4 690.5,184.4 695.5,176.3 700.6,170.3 705.5,167.6 710.6,169.6 715.6,171.6 720.4,174.2 725.4,179.9 730.4,181.5 735.4,180.9 740.4,175.2 745.4,171.6 750.5,168.5 756.5,162.3 761.5,162.3 766.5,162.0 769.4,155.5 771.5,150.4" fill="none" stroke="#fff" stroke-width="1" />
<rect x="622.5" y="153.5" width="157" height="40" fill="none" stroke="#00ff00" stroke-width="1"/>
</g>
<path d="M242.7 311.2L245.5 308.4L248.3 311.2L245.5 314.0Z" fill="#c0c0c0"/>
<path d="M292.7 281.6L295.5 278.8L298.3 281.6L295.5 284.40000000000003Z" fill="#c0c0c0"/>
<path d="M479.7 278.5L482.5 275.7L485.3 278.5L482.5 281.3Z" fill="#c0c0c0"/>
<path d="M550.6 293.3L553.4 290.5L556.1999999999999 293.3L553.4 296.1Z" fill="#c0c0c0"/>
<path d="M626.8000000000001 226.1L629.6 223.29999999999998L632.4 226.1L629.6 228.9Z" fill="#c0c0c0"/>
<path d="M656.8000000000001 211.3L659.6 208.5L662.4 211.3L659.6 214.10000000000002Z" fill="#c0c0c0"/>
<path d="M682.8000000000001 202.3L685.6 199.5L688.4 202.3L685.6 205.10000000000002Z" fill="#c0c0c0"/>
<path d="M245.5 16L249 20.5H242ZM245.5 26L249 21.5H242Z" fill="#c0c0c0"/>
<text x="242.3" y="36.5" fill="#c8d0e8" font-size="12" font-family='"Liberation Sans","Noto Sans CJK SC",sans-serif' text-anchor="start" font-weight="normal" >2</text>
<path d="M291.0 20.6L295.5 16.1L300.0 20.6L295.5 25.1Z" fill="#c0c0c0"/>
<g stroke="#c0c0c0" stroke-width="1.9" fill="none"><rect x="480.2" y="18.3" width="4.6" height="4.6"/><path d="M478.2 16.3l2 2M486.8 16.3l-2 2M478.2 24.900000000000002l2 -2M486.8 24.900000000000002l-2 -2"/></g>
<g stroke="#c0c0c0" stroke-width="1.9" fill="none"><rect x="551.4000000000001" y="18.3" width="4.6" height="4.6"/><path d="M549.4000000000001 16.3l2 2M558.0 16.3l-2 2M549.4000000000001 24.900000000000002l2 -2M558.0 24.900000000000002l-2 -2"/></g>
<path d="M629.2 16.1V25.1M625.7 19.1H632.7" stroke="#c0c0c0" stroke-width="2.6" fill="none"/>
<path d="M655.2 20.6L659.7 16.1L664.2 20.6L659.7 25.1Z" fill="#c0c0c0"/>
<g stroke="#c0c0c0" stroke-width="1.9" fill="none"><rect x="683.4000000000001" y="18.3" width="4.6" height="4.6"/><path d="M681.4000000000001 16.3l2 2M690.0 16.3l-2 2M681.4000000000001 24.900000000000002l2 -2M690.0 24.900000000000002l-2 -2"/></g>
<text x="270.7" y="312" fill="#c8d0e8" font-size="12" font-family='"Liberation Sans","Noto Sans CJK SC",sans-serif' text-anchor="start" font-weight="normal" >1.69</text>
<path d="M270 307.5H257M261 304L256.5 307.5L261 311" stroke="#d8d8d8" stroke-width="1" fill="none"/>
<text x="732" y="104" fill="#c8d0e8" font-size="12" font-family='"Liberation Sans","Noto Sans CJK SC",sans-serif' text-anchor="start" font-weight="normal" >2.39</text>
<path d="M757 99.5L771.5 95M767 91.5L771.5 95L768.5 99.5" stroke="#d8d8d8" stroke-width="1" fill="none"/>
<text transform="translate(784,158) scale(0.58,1)" fill="#00ff00" font-size="19" font-family='"Liberation Serif",serif'>A</text>
<text transform="translate(789,205) scale(0.58,1)" fill="#00ff00" font-size="19" font-family='"Liberation Serif",serif'>B</text>
<text transform="translate(703.5,256) scale(0.58,1)" fill="#00ff00" font-size="19" font-family='"Liberation Serif",serif'>C</text>
<text transform="translate(183,253) scale(0.58,1)" fill="#00ff00" font-size="19" font-family='"Liberation Serif",serif'>D</text>
<text transform="translate(780,664.2) scale(0.58,1)" fill="#00ff00" font-size="19" font-family='"Liberation Serif",serif'>E</text>
<text transform="translate(708.5,493.5) scale(0.58,1)" fill="#00ff00" font-size="19" font-family='"Liberation Serif",serif'>F</text>
<text transform="translate(938.5,389.8) scale(0.58,1)" fill="#00ff00" font-size="19" font-family='"Liberation Serif",serif'>G</text>
<g shape-rendering="crispEdges">
<rect x="2" y="344" width="1" height="15" fill="#d02a0a"/>
<rect x="7" y="347" width="1" height="12" fill="#d02a0a"/>
<rect x="12" y="345" width="1" height="14" fill="#d02a0a"/>
<rect x="17" y="350" width="1" height="9" fill="#d02a0a"/>
<rect x="22" y="356" width="1" height="3" fill="#d02a0a"/>
<rect x="27" y="356" width="1" height="3" fill="#d02a0a"/>
<rect x="32" y="357" width="1" height="2" fill="#d02a0a"/>
<rect x="37" y="357" width="1" height="2" fill="#d02a0a"/>
<rect x="42" y="357" width="1" height="2" fill="#d02a0a"/>
<rect x="48" y="356" width="1" height="3" fill="#d02a0a"/>
<rect x="53" y="356" width="1" height="3" fill="#d02a0a"/>
<rect x="58" y="356" width="1" height="3" fill="#d02a0a"/>
<rect x="63" y="356" width="1" height="3" fill="#d02a0a"/>
<rect x="68" y="356" width="1" height="3" fill="#d02a0a"/>
<rect x="73" y="355" width="1" height="4" fill="#d02a0a"/>
<rect x="78" y="354" width="1" height="5" fill="#d02a0a"/>
<rect x="78" y="352" width="1" height="7" fill="#d02a0a"/>
<rect x="83" y="352" width="1" height="7" fill="#d02a0a"/>
<rect x="88" y="351" width="1" height="8" fill="#d02a0a"/>
<rect x="93" y="348" width="1" height="11" fill="#d02a0a"/>
<rect x="98" y="347" width="1" height="12" fill="#d02a0a"/>
<rect x="103" y="347" width="1" height="12" fill="#d02a0a"/>
<rect x="108" y="348" width="1" height="11" fill="#d02a0a"/>
<rect x="113" y="349" width="1" height="10" fill="#d02a0a"/>
<rect x="118" y="352" width="1" height="7" fill="#d02a0a"/>
<rect x="123" y="355" width="1" height="4" fill="#d02a0a"/>
<rect x="128" y="357" width="1" height="2" fill="#d02a0a"/>
<rect x="134" y="358" width="1" height="1" fill="#d02a0a"/>
<rect x="139" y="358" width="1" height="1" fill="#d02a0a"/>
<rect x="139" y="357" width="1" height="2" fill="#d02a0a"/>
<rect x="144" y="359" width="1" height="8" fill="#00ffff"/>
<rect x="149" y="359" width="1" height="19" fill="#00ffff"/>
<rect x="154" y="359" width="1" height="26" fill="#00ffff"/>
<rect x="159" y="359" width="1" height="30" fill="#00ffff"/>
<rect x="164" y="359" width="1" height="30" fill="#00ffff"/>
<rect x="169" y="359" width="1" height="30" fill="#00ffff"/>
<rect x="174" y="359" width="1" height="28" fill="#00ffff"/>
<rect x="179" y="359" width="1" height="24" fill="#00ffff"/>
<rect x="184" y="359" width="1" height="20" fill="#00ffff"/>
<rect x="189" y="359" width="1" height="18" fill="#00ffff"/>
<rect x="194" y="359" width="1" height="16" fill="#00ffff"/>
<rect x="199" y="359" width="1" height="14" fill="#00ffff"/>
<rect x="204" y="359" width="1" height="14" fill="#00ffff"/>
<rect x="209" y="359" width="1" height="11" fill="#00ffff"/>
<rect x="214" y="359" width="1" height="10" fill="#00ffff"/>
<rect x="219" y="359" width="1" height="8" fill="#00ffff"/>
<rect x="225" y="359" width="1" height="5" fill="#00ffff"/>
<rect x="230" y="359" width="1" height="5" fill="#00ffff"/>
<rect x="235" y="359" width="1" height="11" fill="#00ffff"/>
<rect x="240" y="359" width="1" height="13" fill="#00ffff"/>
<rect x="245" y="359" width="1" height="16" fill="#00ffff"/>
<rect x="250" y="359" width="1" height="16" fill="#00ffff"/>
<rect x="255" y="359" width="1" height="15" fill="#00ffff"/>
<rect x="260" y="359" width="1" height="11" fill="#00ffff"/>
<rect x="265" y="359" width="1" height="9" fill="#00ffff"/>
<rect x="270" y="359" width="1" height="6" fill="#00ffff"/>
<rect x="275" y="359" width="1" height="3" fill="#00ffff"/>
<rect x="280" y="356" width="1" height="3" fill="#d02a0a"/>
<rect x="285" y="352" width="1" height="7" fill="#d02a0a"/>
<rect x="290" y="353" width="1" height="6" fill="#d02a0a"/>
<rect x="295" y="348" width="1" height="11" fill="#d02a0a"/>
<rect x="300" y="345" width="1" height="14" fill="#d02a0a"/>
<rect x="305" y="345" width="1" height="14" fill="#d02a0a"/>
<rect x="311" y="341" width="1" height="18" fill="#d02a0a"/>
<rect x="316" y="341" width="1" height="18" fill="#d02a0a"/>
<rect x="321" y="342" width="1" height="17" fill="#d02a0a"/>
<rect x="326" y="344" width="1" height="15" fill="#d02a0a"/>
<rect x="331" y="345" width="1" height="14" fill="#d02a0a"/>
<rect x="336" y="347" width="1" height="12" fill="#d02a0a"/>
<rect x="341" y="348" width="1" height="11" fill="#d02a0a"/>
<rect x="346" y="350" width="1" height="9" fill="#d02a0a"/>
<rect x="351" y="352" width="1" height="7" fill="#d02a0a"/>
<rect x="356" y="355" width="1" height="4" fill="#d02a0a"/>
<rect x="361" y="358" width="1" height="1" fill="#d02a0a"/>
<rect x="366" y="359" width="1" height="3" fill="#00ffff"/>
<rect x="371" y="359" width="1" height="6" fill="#00ffff"/>
<rect x="376" y="359" width="1" height="9" fill="#00ffff"/>
<rect x="381" y="359" width="1" height="11" fill="#00ffff"/>
<rect x="386" y="359" width="1" height="10" fill="#00ffff"/>
<rect x="391" y="359" width="1" height="11" fill="#00ffff"/>
<rect x="396" y="359" width="1" height="9" fill="#00ffff"/>
<rect x="402" y="359" width="1" height="4" fill="#00ffff"/>
<rect x="407" y="359" width="1" height="3" fill="#00ffff"/>
<rect x="412" y="359" width="1" height="2" fill="#00ffff"/>
<rect x="422" y="358" width="1" height="1" fill="#d02a0a"/>
<rect x="427" y="357" width="1" height="2" fill="#d02a0a"/>
<rect x="432" y="356" width="1" height="3" fill="#d02a0a"/>
<rect x="437" y="358" width="1" height="1" fill="#d02a0a"/>
<rect x="442" y="358" width="1" height="1" fill="#d02a0a"/>
<rect x="447" y="358" width="1" height="1" fill="#d02a0a"/>
<rect x="452" y="358" width="1" height="1" fill="#d02a0a"/>
<rect x="457" y="358" width="1" height="1" fill="#d02a0a"/>
<rect x="462" y="357" width="1" height="2" fill="#d02a0a"/>
<rect x="467" y="355" width="1" height="4" fill="#d02a0a"/>
<rect x="472" y="357" width="1" height="2" fill="#d02a0a"/>
<rect x="477" y="357" width="1" height="2" fill="#d02a0a"/>
<rect x="482" y="356" width="1" height="3" fill="#d02a0a"/>
<rect x="487" y="353" width="1" height="6" fill="#d02a0a"/>
<rect x="493" y="352" width="1" height="7" fill="#d02a0a"/>
<rect x="498" y="351" width="1" height="8" fill="#d02a0a"/>
<rect x="503" y="350" width="1" height="9" fill="#d02a0a"/>
<rect x="508" y="350" width="1" height="9" fill="#d02a0a"/>
<rect x="513" y="349" width="1" height="10" fill="#d02a0a"/>
<rect x="518" y="349" width="1" height="10" fill="#d02a0a"/>
<rect x="523" y="349" width="1" height="10" fill="#d02a0a"/>
<rect x="528" y="349" width="1" height="10" fill="#d02a0a"/>
<rect x="533" y="349" width="1" height="10" fill="#d02a0a"/>
<rect x="538" y="350" width="1" height="9" fill="#d02a0a"/>
<rect x="543" y="352" width="1" height="7" fill="#d02a0a"/>
<rect x="548" y="355" width="1" height="4" fill="#d02a0a"/>
<rect x="553" y="359" width="1" height="2" fill="#00ffff"/>
<rect x="558" y="359" width="1" height="5" fill="#00ffff"/>
<rect x="563" y="359" width="1" height="5" fill="#00ffff"/>
<rect x="568" y="359" width="1" height="5" fill="#00ffff"/>
<rect x="573" y="359" width="1" height="5" fill="#00ffff"/>
<rect x="579" y="359" width="1" height="3" fill="#00ffff"/>
<rect x="584" y="359" width="1" height="2" fill="#00ffff"/>
<rect x="589" y="359" width="1" height="2" fill="#00ffff"/>
<rect x="594" y="359" width="1" height="2" fill="#00ffff"/>
<rect x="604" y="359" width="1" height="5" fill="#00ffff"/>
<rect x="609" y="359" width="1" height="5" fill="#00ffff"/>
<rect x="614" y="359" width="1" height="4" fill="#00ffff"/>
<rect x="619" y="357" width="1" height="2" fill="#d02a0a"/>
<rect x="624" y="354" width="1" height="5" fill="#d02a0a"/>
<rect x="629" y="352" width="1" height="7" fill="#d02a0a"/>
<rect x="634" y="349" width="1" height="10" fill="#d02a0a"/>
<rect x="639" y="346" width="1" height="13" fill="#d02a0a"/>
<rect x="644" y="346" width="1" height="13" fill="#d02a0a"/>
<rect x="649" y="346" width="1" height="13" fill="#d02a0a"/>
<rect x="654" y="348" width="1" height="11" fill="#d02a0a"/>
<rect x="659" y="345" width="1" height="14" fill="#d02a0a"/>
<rect x="664" y="347" width="1" height="12" fill="#d02a0a"/>
<rect x="670" y="351" width="1" height="8" fill="#d02a0a"/>
<rect x="675" y="354" width="1" height="5" fill="#d02a0a"/>
<rect x="680" y="358" width="1" height="1" fill="#d02a0a"/>
<rect x="685" y="358" width="1" height="1" fill="#d02a0a"/>
<rect x="690" y="358" width="1" height="1" fill="#d02a0a"/>
<rect x="695" y="357" width="1" height="2" fill="#d02a0a"/>
<rect x="700" y="356" width="1" height="3" fill="#d02a0a"/>
<rect x="705" y="358" width="1" height="1" fill="#d02a0a"/>
<rect x="710" y="359" width="1" height="3" fill="#00ffff"/>
<rect x="715" y="359" width="1" height="6" fill="#00ffff"/>
<rect x="720" y="359" width="1" height="6" fill="#00ffff"/>
<rect x="725" y="359" width="1" height="7" fill="#00ffff"/>
<rect x="730" y="359" width="1" height="8" fill="#00ffff"/>
<rect x="735" y="359" width="1" height="7" fill="#00ffff"/>
<rect x="740" y="359" width="1" height="5" fill="#00ffff"/>
<rect x="745" y="359" width="1" height="3" fill="#00ffff"/>
<rect x="750" y="359" width="1" height="3" fill="#00ffff"/>
<rect x="756" y="359" width="1" height="2" fill="#00ffff"/>
<rect x="761" y="359" width="1" height="4" fill="#00ffff"/>
<rect x="766" y="359" width="1" height="4" fill="#00ffff"/>
<rect x="771" y="352" width="1" height="7" fill="#d02a0a"/>
<polyline points="2.0,354.2 11.8,350.2 21.6,348.9 39.2,348.3 58.8,345.9 78.4,343.4 98.0,339.1 117.6,335.1 139.2,334.0 149.0,337.5 160.8,345.3 172.5,353.2 186.3,361.0 200.0,365.3 213.7,369.5 231.4,371.8 245.1,377.7 258.8,380.2 272.5,381.6 286.3,379.6 298.0,376.7 309.8,372.8 321.6,368.5 333.3,364.5 345.1,361.0 356.9,360.0 366.7,360.6 376.5,363.0 388.2,364.9 400.0,366.5 419.6,366.9 458.8,365.3 482.4,363.4 498.0,361.0 511.8,359.1 525.5,356.1 541.2,351.8 552.9,351.8 570.6,352.8 596.1,353.2 600.0,354.2 613.7,355.5 629.4,353.8 645.1,348.9 658.8,345.3 668.6,343.0 682.4,342.0 709.8,342.4 727.5,344.9 741.2,346.9 764.7,346.9 770.6,346.3" fill="none" stroke="#ffff00" stroke-width="1" />
<polyline points="2.0,348.3 11.8,344.4 21.6,348.3 39.2,347.3 58.8,344.4 78.4,340.4 98.0,334.0 112.7,331.2 121.6,333.2 139.2,332.2 147.1,341.4 156.9,356.1 166.7,364.9 176.5,368.9 186.3,369.8 200.0,373.8 213.7,374.7 231.4,373.8 239.2,379.6 249.0,384.2 258.8,385.5 270.6,384.2 282.4,379.6 290.2,376.7 298.0,370.8 309.8,364.9 321.6,360.0 333.3,358.5 341.2,358.1 346.1,356.7 356.9,359.1 366.7,361.0 376.5,365.9 388.2,369.3 392.2,370.4 400.0,368.9 409.8,367.9 425.5,365.3 451.0,365.3 464.7,363.6 482.4,362.0 498.0,356.7 511.8,353.2 525.5,350.2 537.3,348.3 545.1,348.3 554.9,352.2 562.7,353.6 596.1,353.6 600.0,355.1 609.8,357.5 623.5,353.2 635.3,347.9 645.1,343.0 654.9,341.8 662.7,338.1 668.6,340.0 678.4,341.4 694.1,341.4 700.0,340.4 713.7,344.4 729.4,348.3 737.3,348.3 739.2,346.9 756.9,346.9 760.8,348.3 766.7,348.3 770.6,344.4" fill="none" stroke="#fff" stroke-width="1" />
</g>
<g shape-rendering="crispEdges">
<rect x="1" y="506" width="3" height="29" fill="#d02a0a"/>
<rect x="2" y="507" width="1" height="27" fill="#000"/>
<rect x="1" y="512" width="1" height="1" fill="#e6d6ee"/><rect x="3" y="517" width="1" height="1" fill="#e6d6ee"/><rect x="1" y="522" width="1" height="1" fill="#e6d6ee"/><rect x="3" y="527" width="1" height="1" fill="#e6d6ee"/><rect x="1" y="532" width="1" height="1" fill="#e6d6ee"/>
<rect x="6" y="507" width="3" height="28" fill="#d02a0a"/>
<rect x="7" y="508" width="1" height="26" fill="#000"/>
<rect x="6" y="512" width="1" height="1" fill="#e6d6ee"/><rect x="8" y="517" width="1" height="1" fill="#e6d6ee"/><rect x="6" y="522" width="1" height="1" fill="#e6d6ee"/><rect x="8" y="527" width="1" height="1" fill="#e6d6ee"/><rect x="6" y="532" width="1" height="1" fill="#e6d6ee"/>
<rect x="11" y="501" width="3" height="34" fill="#d02a0a"/>
<rect x="12" y="502" width="1" height="32" fill="#000"/>
<rect x="13" y="507" width="1" height="1" fill="#e6d6ee"/><rect x="11" y="512" width="1" height="1" fill="#e6d6ee"/><rect x="13" y="517" width="1" height="1" fill="#e6d6ee"/><rect x="11" y="522" width="1" height="1" fill="#e6d6ee"/><rect x="13" y="527" width="1" height="1" fill="#e6d6ee"/><rect x="11" y="532" width="1" height="1" fill="#e6d6ee"/>
<rect x="16" y="505" width="3" height="30" fill="#d02a0a"/>
<rect x="17" y="506" width="1" height="28" fill="#000"/>
<rect x="18" y="507" width="1" height="1" fill="#e6d6ee"/><rect x="16" y="512" width="1" height="1" fill="#e6d6ee"/><rect x="18" y="517" width="1" height="1" fill="#e6d6ee"/><rect x="16" y="522" width="1" height="1" fill="#e6d6ee"/><rect x="18" y="527" width="1" height="1" fill="#e6d6ee"/><rect x="16" y="532" width="1" height="1" fill="#e6d6ee"/>
<rect x="21" y="506" width="3" height="29" fill="#d02a0a"/>
<rect x="22" y="507" width="1" height="27" fill="#000"/>
<rect x="21" y="512" width="1" height="1" fill="#e6d6ee"/><rect x="23" y="517" width="1" height="1" fill="#e6d6ee"/><rect x="21" y="522" width="1" height="1" fill="#e6d6ee"/><rect x="23" y="527" width="1" height="1" fill="#e6d6ee"/><rect x="21" y="532" width="1" height="1" fill="#e6d6ee"/>
<rect x="26" y="502" width="3" height="33" fill="#d02a0a"/>
<rect x="27" y="503" width="1" height="31" fill="#000"/>
<rect x="28" y="507" width="1" height="1" fill="#e6d6ee"/><rect x="26" y="512" width="1" height="1" fill="#e6d6ee"/><rect x="28" y="517" width="1" height="1" fill="#e6d6ee"/><rect x="26" y="522" width="1" height="1" fill="#e6d6ee"/><rect x="28" y="527" width="1" height="1" fill="#e6d6ee"/><rect x="26" y="532" width="1" height="1" fill="#e6d6ee"/>
<rect x="31" y="533" width="3" height="2" fill="#d02a0a"/>
<rect x="36" y="533" width="3" height="2" fill="#d02a0a"/>
<rect x="41" y="510" width="3" height="25" fill="#d02a0a"/>
<rect x="42" y="511" width="1" height="23" fill="#000"/>
<rect x="41" y="512" width="1" height="1" fill="#e6d6ee"/><rect x="43" y="517" width="1" height="1" fill="#e6d6ee"/><rect x="41" y="522" width="1" height="1" fill="#e6d6ee"/><rect x="43" y="527" width="1" height="1" fill="#e6d6ee"/><rect x="41" y="532" width="1" height="1" fill="#e6d6ee"/>
<rect x="47" y="511" width="3" height="24" fill="#d02a0a"/>
<rect x="48" y="512" width="1" height="22" fill="#000"/>
<rect x="49" y="517" width="1" height="1" fill="#e6d6ee"/><rect x="47" y="522" width="1" height="1" fill="#e6d6ee"/><rect x="49" y="527" width="1" height="1" fill="#e6d6ee"/><rect x="47" y="532" width="1" height="1" fill="#e6d6ee"/>
<rect x="52" y="512" width="3" height="23" fill="#d02a0a"/>
<rect x="53" y="513" width="1" height="21" fill="#000"/>
<rect x="54" y="517" width="1" height="1" fill="#e6d6ee"/><rect x="52" y="522" width="1" height="1" fill="#e6d6ee"/><rect x="54" y="527" width="1" height="1" fill="#e6d6ee"/><rect x="52" y="532" width="1" height="1" fill="#e6d6ee"/>
<rect x="57" y="511" width="3" height="24" fill="#d02a0a"/>
<rect x="58" y="512" width="1" height="22" fill="#000"/>
<rect x="59" y="517" width="1" height="1" fill="#e6d6ee"/><rect x="57" y="522" width="1" height="1" fill="#e6d6ee"/><rect x="59" y="527" width="1" height="1" fill="#e6d6ee"/><rect x="57" y="532" width="1" height="1" fill="#e6d6ee"/>
<rect x="62" y="510" width="3" height="25" fill="#d02a0a"/>
<rect x="63" y="511" width="1" height="23" fill="#000"/>
<rect x="62" y="512" width="1" height="1" fill="#e6d6ee"/><rect x="64" y="517" width="1" height="1" fill="#e6d6ee"/><rect x="62" y="522" width="1" height="1" fill="#e6d6ee"/><rect x="64" y="527" width="1" height="1" fill="#e6d6ee"/><rect x="62" y="532" width="1" height="1" fill="#e6d6ee"/>
<rect x="67" y="508" width="3" height="27" fill="#d02a0a"/>
<rect x="68" y="509" width="1" height="25" fill="#000"/>
<rect x="67" y="512" width="1" height="1" fill="#e6d6ee"/><rect x="69" y="517" width="1" height="1" fill="#e6d6ee"/><rect x="67" y="522" width="1" height="1" fill="#e6d6ee"/><rect x="69" y="527" width="1" height="1" fill="#e6d6ee"/><rect x="67" y="532" width="1" height="1" fill="#e6d6ee"/>
<rect x="72" y="508" width="3" height="27" fill="#d02a0a"/>
<rect x="73" y="509" width="1" height="25" fill="#000"/>
<rect x="72" y="512" width="1" height="1" fill="#e6d6ee"/><rect x="74" y="517" width="1" height="1" fill="#e6d6ee"/><rect x="72" y="522" width="1" height="1" fill="#e6d6ee"/><rect x="74" y="527" width="1" height="1" fill="#e6d6ee"/><rect x="72" y="532" width="1" height="1" fill="#e6d6ee"/>
<rect x="72" y="506" width="3" height="29" fill="#d02a0a"/>
<rect x="73" y="507" width="1" height="27" fill="#000"/>
<rect x="72" y="512" width="1" height="1" fill="#e6d6ee"/><rect x="74" y="517" width="1" height="1" fill="#e6d6ee"/><rect x="72" y="522" width="1" height="1" fill="#e6d6ee"/><rect x="74" y="527" width="1" height="1" fill="#e6d6ee"/><rect x="72" y="532" width="1" height="1" fill="#e6d6ee"/>
<rect x="77" y="503" width="3" height="32" fill="#d02a0a"/>
<rect x="78" y="504" width="1" height="30" fill="#000"/>
<rect x="79" y="507" width="1" height="1" fill="#e6d6ee"/><rect x="77" y="512" width="1" height="1" fill="#e6d6ee"/><rect x="79" y="517" width="1" height="1" fill="#e6d6ee"/><rect x="77" y="522" width="1" height="1" fill="#e6d6ee"/><rect x="79" y="527" width="1" height="1" fill="#e6d6ee"/><rect x="77" y="532" width="1" height="1" fill="#e6d6ee"/>
<rect x="82" y="506" width="3" height="29" fill="#d02a0a"/>
<rect x="83" y="507" width="1" height="27" fill="#000"/>
<rect x="82" y="512" width="1" height="1" fill="#e6d6ee"/><rect x="84" y="517" width="1" height="1" fill="#e6d6ee"/><rect x="82" y="522" width="1" height="1" fill="#e6d6ee"/><rect x="84" y="527" width="1" height="1" fill="#e6d6ee"/><rect x="82" y="532" width="1" height="1" fill="#e6d6ee"/>
<rect x="87" y="532" width="3" height="3" fill="#d02a0a"/>
<rect x="88" y="533" width="1" height="1" fill="#000"/>
<rect x="92" y="532" width="3" height="3" fill="#d02a0a"/>
<rect x="93" y="533" width="1" height="1" fill="#000"/>
<rect x="97" y="535" width="3" height="3" fill="#00ffff"/>
<rect x="102" y="535" width="3" height="2" fill="#00ffff"/>
<rect x="107" y="535" width="3" height="1" fill="#00ffff"/>
<rect x="112" y="535" width="3" height="1" fill="#00ffff"/>
<rect x="117" y="535" width="3" height="1" fill="#00ffff"/>
<rect x="122" y="535" width="3" height="0" fill="#00ffff"/>
<rect x="127" y="535" width="3" height="0" fill="#00ffff"/>
<rect x="133" y="535" width="3" height="0" fill="#00ffff"/>
<rect x="138" y="531" width="3" height="4" fill="#d02a0a"/>
<rect x="139" y="532" width="1" height="2" fill="#000"/>
<rect x="143" y="535" width="3" height="4" fill="#00ffff"/>
<rect x="148" y="535" width="3" height="6" fill="#00ffff"/>
<rect x="153" y="535" width="3" height="7" fill="#00ffff"/>
<rect x="158" y="535" width="3" height="7" fill="#00ffff"/>
<rect x="163" y="535" width="3" height="5" fill="#00ffff"/>
<rect x="168" y="535" width="3" height="3" fill="#00ffff"/>
<rect x="173" y="521" width="3" height="14" fill="#d02a0a"/>
<rect x="174" y="522" width="1" height="12" fill="#000"/>
<rect x="175" y="527" width="1" height="1" fill="#e6d6ee"/><rect x="173" y="532" width="1" height="1" fill="#e6d6ee"/>
<rect x="178" y="519" width="3" height="16" fill="#d02a0a"/>
<rect x="179" y="520" width="1" height="14" fill="#000"/>
<rect x="178" y="522" width="1" height="1" fill="#e6d6ee"/><rect x="180" y="527" width="1" height="1" fill="#e6d6ee"/><rect x="178" y="532" width="1" height="1" fill="#e6d6ee"/>
<rect x="183" y="519" width="3" height="16" fill="#d02a0a"/>
<rect x="184" y="520" width="1" height="14" fill="#000"/>
<rect x="183" y="522" width="1" height="1" fill="#e6d6ee"/><rect x="185" y="527" width="1" height="1" fill="#e6d6ee"/><rect x="183" y="532" width="1" height="1" fill="#e6d6ee"/>
<rect x="188" y="521" width="3" height="14" fill="#d02a0a"/>
<rect x="189" y="522" width="1" height="12" fill="#000"/>
<rect x="190" y="527" width="1" height="1" fill="#e6d6ee"/><rect x="188" y="532" width="1" height="1" fill="#e6d6ee"/>
<rect x="193" y="521" width="3" height="14" fill="#d02a0a"/>
<rect x="194" y="522" width="1" height="12" fill="#000"/>
<rect x="195" y="527" width="1" height="1" fill="#e6d6ee"/><rect x="193" y="532" width="1" height="1" fill="#e6d6ee"/>
<rect x="198" y="522" width="3" height="13" fill="#d02a0a"/>
<rect x="199" y="523" width="1" height="11" fill="#000"/>
<rect x="200" y="527" width="1" height="1" fill="#e6d6ee"/><rect x="198" y="532" width="1" height="1" fill="#e6d6ee"/>
<rect x="203" y="521" width="3" height="14" fill="#d02a0a"/>
<rect x="204" y="522" width="1" height="12" fill="#000"/>
<rect x="205" y="527" width="1" height="1" fill="#e6d6ee"/><rect x="203" y="532" width="1" height="1" fill="#e6d6ee"/>
<rect x="208" y="521" width="3" height="14" fill="#d02a0a"/>
<rect x="209" y="522" width="1" height="12" fill="#000"/>
<rect x="210" y="527" width="1" height="1" fill="#e6d6ee"/><rect x="208" y="532" width="1" height="1" fill="#e6d6ee"/>
<rect x="213" y="521" width="3" height="14" fill="#d02a0a"/>
<rect x="214" y="522" width="1" height="12" fill="#000"/>
<rect x="215" y="527" width="1" height="1" fill="#e6d6ee"/><rect x="213" y="532" width="1" height="1" fill="#e6d6ee"/>
<rect x="218" y="521" width="3" height="14" fill="#d02a0a"/>
<rect x="219" y="522" width="1" height="12" fill="#000"/>
<rect x="220" y="527" width="1" height="1" fill="#e6d6ee"/><rect x="218" y="532" width="1" height="1" fill="#e6d6ee"/>
<rect x="224" y="521" width="3" height="14" fill="#d02a0a"/>
<rect x="225" y="522" width="1" height="12" fill="#000"/>
<rect x="226" y="527" width="1" height="1" fill="#e6d6ee"/><rect x="224" y="532" width="1" height="1" fill="#e6d6ee"/>
<rect x="229" y="523" width="3" height="12" fill="#d02a0a"/>
<rect x="230" y="524" width="1" height="10" fill="#000"/>
<rect x="231" y="527" width="1" height="1" fill="#e6d6ee"/><rect x="229" y="532" width="1" height="1" fill="#e6d6ee"/>
<rect x="234" y="524" width="3" height="11" fill="#d02a0a"/>
<rect x="235" y="525" width="1" height="9" fill="#000"/>
<rect x="236" y="527" width="1" height="1" fill="#e6d6ee"/><rect x="234" y="532" width="1" height="1" fill="#e6d6ee"/>
<rect x="239" y="526" width="3" height="9" fill="#d02a0a"/>
<rect x="240" y="527" width="1" height="7" fill="#000"/>
<rect x="239" y="532" width="1" height="1" fill="#e6d6ee"/>
<rect x="244" y="527" width="3" height="8" fill="#d02a0a"/>
<rect x="245" y="528" width="1" height="6" fill="#000"/>
<rect x="244" y="532" width="1" height="1" fill="#e6d6ee"/>
<rect x="249" y="526" width="3" height="9" fill="#d02a0a"/>
<rect x="250" y="527" width="1" height="7" fill="#000"/>
<rect x="249" y="532" width="1" height="1" fill="#e6d6ee"/>
<rect x="254" y="526" width="3" height="9" fill="#d02a0a"/>
<rect x="255" y="527" width="1" height="7" fill="#000"/>
<rect x="254" y="532" width="1" height="1" fill="#e6d6ee"/>
<rect x="259" y="527" width="3" height="8" fill="#d02a0a"/>
<rect x="260" y="528" width="1" height="6" fill="#000"/>
<rect x="259" y="532" width="1" height="1" fill="#e6d6ee"/>
<rect x="264" y="535" width="3" height="6" fill="#00ffff"/>
<rect x="269" y="535" width="3" height="6" fill="#00ffff"/>
<rect x="274" y="535" width="3" height="6" fill="#00ffff"/>
<rect x="279" y="535" width="3" height="4" fill="#00ffff"/>
<rect x="284" y="535" width="3" height="5" fill="#00ffff"/>
<rect x="289" y="535" width="3" height="7" fill="#00ffff"/>
<rect x="294" y="535" width="3" height="7" fill="#00ffff"/>
<rect x="299" y="535" width="3" height="6" fill="#00ffff"/>
<rect x="304" y="535" width="3" height="5" fill="#00ffff"/>
<rect x="310" y="531" width="3" height="4" fill="#d02a0a"/>
<rect x="311" y="532" width="1" height="2" fill="#000"/>
<rect x="315" y="532" width="3" height="3" fill="#d02a0a"/>
<rect x="316" y="533" width="1" height="1" fill="#000"/>
<rect x="320" y="531" width="3" height="4" fill="#d02a0a"/>
<rect x="321" y="532" width="1" height="2" fill="#000"/>
<rect x="325" y="530" width="3" height="5" fill="#d02a0a"/>
<rect x="326" y="531" width="1" height="3" fill="#000"/>
<rect x="325" y="532" width="1" height="1" fill="#e6d6ee"/>
<rect x="330" y="530" width="3" height="5" fill="#d02a0a"/>
<rect x="331" y="531" width="1" height="3" fill="#000"/>
<rect x="330" y="532" width="1" height="1" fill="#e6d6ee"/>
<rect x="335" y="530" width="3" height="5" fill="#d02a0a"/>
<rect x="336" y="531" width="1" height="3" fill="#000"/>
<rect x="335" y="532" width="1" height="1" fill="#e6d6ee"/>
<rect x="340" y="528" width="3" height="7" fill="#d02a0a"/>
<rect x="341" y="529" width="1" height="5" fill="#000"/>
<rect x="340" y="532" width="1" height="1" fill="#e6d6ee"/>
<rect x="345" y="531" width="3" height="4" fill="#d02a0a"/>
<rect x="346" y="532" width="1" height="2" fill="#000"/>
<rect x="350" y="532" width="3" height="3" fill="#d02a0a"/>
<rect x="351" y="533" width="1" height="1" fill="#000"/>
<rect x="355" y="531" width="3" height="4" fill="#d02a0a"/>
<rect x="356" y="532" width="1" height="2" fill="#000"/>
<rect x="360" y="531" width="3" height="4" fill="#d02a0a"/>
<rect x="361" y="532" width="1" height="2" fill="#000"/>
<rect x="365" y="532" width="3" height="3" fill="#d02a0a"/>
<rect x="366" y="533" width="1" height="1" fill="#000"/>
<rect x="370" y="533" width="3" height="2" fill="#d02a0a"/>
<rect x="375" y="533" width="3" height="2" fill="#d02a0a"/>
<rect x="380" y="529" width="3" height="6" fill="#d02a0a"/>
<rect x="381" y="530" width="1" height="4" fill="#000"/>
<rect x="380" y="532" width="1" height="1" fill="#e6d6ee"/>
<rect x="385" y="530" width="3" height="5" fill="#d02a0a"/>
<rect x="386" y="531" width="1" height="3" fill="#000"/>
<rect x="385" y="532" width="1" height="1" fill="#e6d6ee"/>
<rect x="390" y="531" width="3" height="4" fill="#d02a0a"/>
<rect x="391" y="532" width="1" height="2" fill="#000"/>
<rect x="395" y="531" width="3" height="4" fill="#d02a0a"/>
<rect x="396" y="532" width="1" height="2" fill="#000"/>
<rect x="401" y="528" width="3" height="7" fill="#d02a0a"/>
<rect x="402" y="529" width="1" height="5" fill="#000"/>
<rect x="401" y="532" width="1" height="1" fill="#e6d6ee"/>
<rect x="406" y="528" width="3" height="7" fill="#d02a0a"/>
<rect x="407" y="529" width="1" height="5" fill="#000"/>
<rect x="406" y="532" width="1" height="1" fill="#e6d6ee"/>
<rect x="411" y="527" width="3" height="8" fill="#d02a0a"/>
<rect x="412" y="528" width="1" height="6" fill="#000"/>
<rect x="411" y="532" width="1" height="1" fill="#e6d6ee"/>
<rect x="416" y="527" width="3" height="8" fill="#d02a0a"/>
<rect x="417" y="528" width="1" height="6" fill="#000"/>
<rect x="416" y="532" width="1" height="1" fill="#e6d6ee"/>
<rect x="421" y="527" width="3" height="8" fill="#d02a0a"/>
<rect x="422" y="528" width="1" height="6" fill="#000"/>
<rect x="421" y="532" width="1" height="1" fill="#e6d6ee"/>
<rect x="426" y="526" width="3" height="9" fill="#d02a0a"/>
<rect x="427" y="527" width="1" height="7" fill="#000"/>
<rect x="426" y="532" width="1" height="1" fill="#e6d6ee"/>
<rect x="431" y="526" width="3" height="9" fill="#d02a0a"/>
<rect x="432" y="527" width="1" height="7" fill="#000"/>
<rect x="431" y="532" width="1" height="1" fill="#e6d6ee"/>
<rect x="436" y="526" width="3" height="9" fill="#d02a0a"/>
<rect x="437" y="527" width="1" height="7" fill="#000"/>
<rect x="436" y="532" width="1" height="1" fill="#e6d6ee"/>
<rect x="441" y="526" width="3" height="9" fill="#d02a0a"/>
<rect x="442" y="527" width="1" height="7" fill="#000"/>
<rect x="441" y="532" width="1" height="1" fill="#e6d6ee"/>
<rect x="446" y="525" width="3" height="10" fill="#d02a0a"/>
<rect x="447" y="526" width="1" height="8" fill="#000"/>
<rect x="448" y="527" width="1" height="1" fill="#e6d6ee"/><rect x="446" y="532" width="1" height="1" fill="#e6d6ee"/>
<rect x="451" y="525" width="3" height="10" fill="#d02a0a"/>
<rect x="452" y="526" width="1" height="8" fill="#000"/>
<rect x="453" y="527" width="1" height="1" fill="#e6d6ee"/><rect x="451" y="532" width="1" height="1" fill="#e6d6ee"/>
<rect x="456" y="523" width="3" height="12" fill="#d02a0a"/>
<rect x="457" y="524" width="1" height="10" fill="#000"/>
<rect x="458" y="527" width="1" height="1" fill="#e6d6ee"/><rect x="456" y="532" width="1" height="1" fill="#e6d6ee"/>
<rect x="461" y="528" width="3" height="7" fill="#d02a0a"/>
<rect x="462" y="529" width="1" height="5" fill="#000"/>
<rect x="461" y="532" width="1" height="1" fill="#e6d6ee"/>
<rect x="466" y="533" width="3" height="2" fill="#d02a0a"/>
<rect x="471" y="533" width="3" height="2" fill="#d02a0a"/>
<rect x="476" y="531" width="3" height="4" fill="#d02a0a"/>
<rect x="477" y="532" width="1" height="2" fill="#000"/>
<rect x="481" y="530" width="3" height="5" fill="#d02a0a"/>
<rect x="482" y="531" width="1" height="3" fill="#000"/>
<rect x="481" y="532" width="1" height="1" fill="#e6d6ee"/>
<rect x="486" y="530" width="3" height="5" fill="#d02a0a"/>
<rect x="487" y="531" width="1" height="3" fill="#000"/>
<rect x="486" y="532" width="1" height="1" fill="#e6d6ee"/>
<rect x="492" y="530" width="3" height="5" fill="#d02a0a"/>
<rect x="493" y="531" width="1" height="3" fill="#000"/>
<rect x="492" y="532" width="1" height="1" fill="#e6d6ee"/>
<rect x="497" y="528" width="3" height="7" fill="#d02a0a"/>
<rect x="498" y="529" width="1" height="5" fill="#000"/>
<rect x="497" y="532" width="1" height="1" fill="#e6d6ee"/>
<rect x="502" y="526" width="3" height="9" fill="#d02a0a"/>
<rect x="503" y="527" width="1" height="7" fill="#000"/>
<rect x="502" y="532" width="1" height="1" fill="#e6d6ee"/>
<rect x="507" y="525" width="3" height="10" fill="#d02a0a"/>
<rect x="508" y="526" width="1" height="8" fill="#000"/>
<rect x="509" y="527" width="1" height="1" fill="#e6d6ee"/><rect x="507" y="532" width="1" height="1" fill="#e6d6ee"/>
<rect x="512" y="525" width="3" height="10" fill="#d02a0a"/>
<rect x="513" y="526" width="1" height="8" fill="#000"/>
<rect x="514" y="527" width="1" height="1" fill="#e6d6ee"/><rect x="512" y="532" width="1" height="1" fill="#e6d6ee"/>
<rect x="517" y="527" width="3" height="8" fill="#d02a0a"/>
<rect x="518" y="528" width="1" height="6" fill="#000"/>
<rect x="517" y="532" width="1" height="1" fill="#e6d6ee"/>
<rect x="522" y="527" width="3" height="8" fill="#d02a0a"/>
<rect x="523" y="528" width="1" height="6" fill="#000"/>
<rect x="522" y="532" width="1" height="1" fill="#e6d6ee"/>
<rect x="527" y="525" width="3" height="10" fill="#d02a0a"/>
<rect x="528" y="526" width="1" height="8" fill="#000"/>
<rect x="529" y="527" width="1" height="1" fill="#e6d6ee"/><rect x="527" y="532" width="1" height="1" fill="#e6d6ee"/>
<rect x="532" y="518" width="3" height="17" fill="#d02a0a"/>
<rect x="533" y="519" width="1" height="15" fill="#000"/>
<rect x="532" y="522" width="1" height="1" fill="#e6d6ee"/><rect x="534" y="527" width="1" height="1" fill="#e6d6ee"/><rect x="532" y="532" width="1" height="1" fill="#e6d6ee"/>
<rect x="537" y="518" width="3" height="17" fill="#d02a0a"/>
<rect x="538" y="519" width="1" height="15" fill="#000"/>
<rect x="537" y="522" width="1" height="1" fill="#e6d6ee"/><rect x="539" y="527" width="1" height="1" fill="#e6d6ee"/><rect x="537" y="532" width="1" height="1" fill="#e6d6ee"/>
<rect x="542" y="518" width="3" height="17" fill="#d02a0a"/>
<rect x="543" y="519" width="1" height="15" fill="#000"/>
<rect x="542" y="522" width="1" height="1" fill="#e6d6ee"/><rect x="544" y="527" width="1" height="1" fill="#e6d6ee"/><rect x="542" y="532" width="1" height="1" fill="#e6d6ee"/>
<rect x="547" y="521" width="3" height="14" fill="#d02a0a"/>
<rect x="548" y="522" width="1" height="12" fill="#000"/>
<rect x="549" y="527" width="1" height="1" fill="#e6d6ee"/><rect x="547" y="532" width="1" height="1" fill="#e6d6ee"/>
<rect x="552" y="523" width="3" height="12" fill="#d02a0a"/>
<rect x="553" y="524" width="1" height="10" fill="#000"/>
<rect x="554" y="527" width="1" height="1" fill="#e6d6ee"/><rect x="552" y="532" width="1" height="1" fill="#e6d6ee"/>
<rect x="557" y="523" width="3" height="12" fill="#d02a0a"/>
<rect x="558" y="524" width="1" height="10" fill="#000"/>
<rect x="559" y="527" width="1" height="1" fill="#e6d6ee"/><rect x="557" y="532" width="1" height="1" fill="#e6d6ee"/>
<rect x="562" y="523" width="3" height="12" fill="#d02a0a"/>
<rect x="563" y="524" width="1" height="10" fill="#000"/>
<rect x="564" y="527" width="1" height="1" fill="#e6d6ee"/><rect x="562" y="532" width="1" height="1" fill="#e6d6ee"/>
<rect x="567" y="523" width="3" height="12" fill="#d02a0a"/>
<rect x="568" y="524" width="1" height="10" fill="#000"/>
<rect x="569" y="527" width="1" height="1" fill="#e6d6ee"/><rect x="567" y="532" width="1" height="1" fill="#e6d6ee"/>
<rect x="572" y="524" width="3" height="11" fill="#d02a0a"/>
<rect x="573" y="525" width="1" height="9" fill="#000"/>
<rect x="574" y="527" width="1" height="1" fill="#e6d6ee"/><rect x="572" y="532" width="1" height="1" fill="#e6d6ee"/>
<rect x="578" y="524" width="3" height="11" fill="#d02a0a"/>
<rect x="579" y="525" width="1" height="9" fill="#000"/>
<rect x="580" y="527" width="1" height="1" fill="#e6d6ee"/><rect x="578" y="532" width="1" height="1" fill="#e6d6ee"/>
<rect x="583" y="523" width="3" height="12" fill="#d02a0a"/>
<rect x="584" y="524" width="1" height="10" fill="#000"/>
<rect x="585" y="527" width="1" height="1" fill="#e6d6ee"/><rect x="583" y="532" width="1" height="1" fill="#e6d6ee"/>
<rect x="588" y="524" width="3" height="11" fill="#d02a0a"/>
<rect x="589" y="525" width="1" height="9" fill="#000"/>
<rect x="590" y="527" width="1" height="1" fill="#e6d6ee"/><rect x="588" y="532" width="1" height="1" fill="#e6d6ee"/>
<rect x="593" y="524" width="3" height="11" fill="#d02a0a"/>
<rect x="594" y="525" width="1" height="9" fill="#000"/>
<rect x="595" y="527" width="1" height="1" fill="#e6d6ee"/><rect x="593" y="532" width="1" height="1" fill="#e6d6ee"/>
<rect x="603" y="528" width="3" height="7" fill="#d02a0a"/>
<rect x="604" y="529" width="1" height="5" fill="#000"/>
<rect x="603" y="532" width="1" height="1" fill="#e6d6ee"/>
<rect x="608" y="528" width="3" height="7" fill="#d02a0a"/>
<rect x="609" y="529" width="1" height="5" fill="#000"/>
<rect x="608" y="532" width="1" height="1" fill="#e6d6ee"/>
<rect x="613" y="527" width="3" height="8" fill="#d02a0a"/>
<rect x="614" y="528" width="1" height="6" fill="#000"/>
<rect x="613" y="532" width="1" height="1" fill="#e6d6ee"/>
<rect x="618" y="516" width="3" height="19" fill="#d02a0a"/>
<rect x="619" y="517" width="1" height="17" fill="#000"/>
<rect x="618" y="522" width="1" height="1" fill="#e6d6ee"/><rect x="620" y="527" width="1" height="1" fill="#e6d6ee"/><rect x="618" y="532" width="1" height="1" fill="#e6d6ee"/>
<rect x="623" y="514" width="3" height="21" fill="#d02a0a"/>
<rect x="624" y="515" width="1" height="19" fill="#000"/>
<rect x="625" y="517" width="1" height="1" fill="#e6d6ee"/><rect x="623" y="522" width="1" height="1" fill="#e6d6ee"/><rect x="625" y="527" width="1" height="1" fill="#e6d6ee"/><rect x="623" y="532" width="1" height="1" fill="#e6d6ee"/>
<rect x="628" y="512" width="3" height="23" fill="#d02a0a"/>
<rect x="629" y="513" width="1" height="21" fill="#000"/>
<rect x="630" y="517" width="1" height="1" fill="#e6d6ee"/><rect x="628" y="522" width="1" height="1" fill="#e6d6ee"/><rect x="630" y="527" width="1" height="1" fill="#e6d6ee"/><rect x="628" y="532" width="1" height="1" fill="#e6d6ee"/>
<rect x="633" y="502" width="3" height="33" fill="#d02a0a"/>
<rect x="634" y="503" width="1" height="31" fill="#000"/>
<rect x="635" y="507" width="1" height="1" fill="#e6d6ee"/><rect x="633" y="512" width="1" height="1" fill="#e6d6ee"/><rect x="635" y="517" width="1" height="1" fill="#e6d6ee"/><rect x="633" y="522" width="1" height="1" fill="#e6d6ee"/><rect x="635" y="527" width="1" height="1" fill="#e6d6ee"/><rect x="633" y="532" width="1" height="1" fill="#e6d6ee"/>
<rect x="638" y="502" width="3" height="33" fill="#d02a0a"/>
<rect x="639" y="503" width="1" height="31" fill="#000"/>
<rect x="640" y="507" width="1" height="1" fill="#e6d6ee"/><rect x="638" y="512" width="1" height="1" fill="#e6d6ee"/><rect x="640" y="517" width="1" height="1" fill="#e6d6ee"/><rect x="638" y="522" width="1" height="1" fill="#e6d6ee"/><rect x="640" y="527" width="1" height="1" fill="#e6d6ee"/><rect x="638" y="532" width="1" height="1" fill="#e6d6ee"/>
<rect x="643" y="502" width="3" height="33" fill="#d02a0a"/>
<rect x="644" y="503" width="1" height="31" fill="#000"/>
<rect x="645" y="507" width="1" height="1" fill="#e6d6ee"/><rect x="643" y="512" width="1" height="1" fill="#e6d6ee"/><rect x="645" y="517" width="1" height="1" fill="#e6d6ee"/><rect x="643" y="522" width="1" height="1" fill="#e6d6ee"/><rect x="645" y="527" width="1" height="1" fill="#e6d6ee"/><rect x="643" y="532" width="1" height="1" fill="#e6d6ee"/>
<rect x="648" y="505" width="3" height="30" fill="#d02a0a"/>
<rect x="649" y="506" width="1" height="28" fill="#000"/>
<rect x="650" y="507" width="1" height="1" fill="#e6d6ee"/><rect x="648" y="512" width="1" height="1" fill="#e6d6ee"/><rect x="650" y="517" width="1" height="1" fill="#e6d6ee"/><rect x="648" y="522" width="1" height="1" fill="#e6d6ee"/><rect x="650" y="527" width="1" height="1" fill="#e6d6ee"/><rect x="648" y="532" width="1" height="1" fill="#e6d6ee"/>
<rect x="653" y="504" width="3" height="31" fill="#d02a0a"/>
<rect x="654" y="505" width="1" height="29" fill="#000"/>
<rect x="655" y="507" width="1" height="1" fill="#e6d6ee"/><rect x="653" y="512" width="1" height="1" fill="#e6d6ee"/><rect x="655" y="517" width="1" height="1" fill="#e6d6ee"/><rect x="653" y="522" width="1" height="1" fill="#e6d6ee"/><rect x="655" y="527" width="1" height="1" fill="#e6d6ee"/><rect x="653" y="532" width="1" height="1" fill="#e6d6ee"/>
<rect x="658" y="490" width="3" height="45" fill="#d02a0a"/>
<rect x="659" y="491" width="1" height="43" fill="#000"/>
<rect x="658" y="492" width="1" height="1" fill="#e6d6ee"/><rect x="660" y="497" width="1" height="1" fill="#e6d6ee"/><rect x="658" y="502" width="1" height="1" fill="#e6d6ee"/><rect x="660" y="507" width="1" height="1" fill="#e6d6ee"/><rect x="658" y="512" width="1" height="1" fill="#e6d6ee"/><rect x="660" y="517" width="1" height="1" fill="#e6d6ee"/><rect x="658" y="522" width="1" height="1" fill="#e6d6ee"/><rect x="660" y="527" width="1" height="1" fill="#e6d6ee"/><rect x="658" y="532" width="1" height="1" fill="#e6d6ee"/>
<rect x="663" y="496" width="3" height="39" fill="#d02a0a"/>
<rect x="664" y="497" width="1" height="37" fill="#000"/>
<rect x="663" y="502" width="1" height="1" fill="#e6d6ee"/><rect x="665" y="507" width="1" height="1" fill="#e6d6ee"/><rect x="663" y="512" width="1" height="1" fill="#e6d6ee"/><rect x="665" y="517" width="1" height="1" fill="#e6d6ee"/><rect x="663" y="522" width="1" height="1" fill="#e6d6ee"/><rect x="665" y="527" width="1" height="1" fill="#e6d6ee"/><rect x="663" y="532" width="1" height="1" fill="#e6d6ee"/>
<rect x="669" y="499" width="3" height="36" fill="#d02a0a"/>
<rect x="670" y="500" width="1" height="34" fill="#000"/>
<rect x="669" y="502" width="1" height="1" fill="#e6d6ee"/><rect x="671" y="507" width="1" height="1" fill="#e6d6ee"/><rect x="669" y="512" width="1" height="1" fill="#e6d6ee"/><rect x="671" y="517" width="1" height="1" fill="#e6d6ee"/><rect x="669" y="522" width="1" height="1" fill="#e6d6ee"/><rect x="671" y="527" width="1" height="1" fill="#e6d6ee"/><rect x="669" y="532" width="1" height="1" fill="#e6d6ee"/>
<rect x="674" y="498" width="3" height="37" fill="#d02a0a"/>
<rect x="675" y="499" width="1" height="35" fill="#000"/>
<rect x="674" y="502" width="1" height="1" fill="#e6d6ee"/><rect x="676" y="507" width="1" height="1" fill="#e6d6ee"/><rect x="674" y="512" width="1" height="1" fill="#e6d6ee"/><rect x="676" y="517" width="1" height="1" fill="#e6d6ee"/><rect x="674" y="522" width="1" height="1" fill="#e6d6ee"/><rect x="676" y="527" width="1" height="1" fill="#e6d6ee"/><rect x="674" y="532" width="1" height="1" fill="#e6d6ee"/>
<rect x="679" y="499" width="3" height="36" fill="#d02a0a"/>
<rect x="680" y="500" width="1" height="34" fill="#000"/>
<rect x="679" y="502" width="1" height="1" fill="#e6d6ee"/><rect x="681" y="507" width="1" height="1" fill="#e6d6ee"/><rect x="679" y="512" width="1" height="1" fill="#e6d6ee"/><rect x="681" y="517" width="1" height="1" fill="#e6d6ee"/><rect x="679" y="522" width="1" height="1" fill="#e6d6ee"/><rect x="681" y="527" width="1" height="1" fill="#e6d6ee"/><rect x="679" y="532" width="1" height="1" fill="#e6d6ee"/>
<rect x="684" y="498" width="3" height="37" fill="#d02a0a"/>
<rect x="685" y="499" width="1" height="35" fill="#000"/>
<rect x="684" y="502" width="1" height="1" fill="#e6d6ee"/><rect x="686" y="507" width="1" height="1" fill="#e6d6ee"/><rect x="684" y="512" width="1" height="1" fill="#e6d6ee"/><rect x="686" y="517" width="1" height="1" fill="#e6d6ee"/><rect x="684" y="522" width="1" height="1" fill="#e6d6ee"/><rect x="686" y="527" width="1" height="1" fill="#e6d6ee"/><rect x="684" y="532" width="1" height="1" fill="#e6d6ee"/>
<rect x="689" y="509" width="3" height="26" fill="#d02a0a"/>
<rect x="690" y="510" width="1" height="24" fill="#000"/>
<rect x="689" y="512" width="1" height="1" fill="#e6d6ee"/><rect x="691" y="517" width="1" height="1" fill="#e6d6ee"/><rect x="689" y="522" width="1" height="1" fill="#e6d6ee"/><rect x="691" y="527" width="1" height="1" fill="#e6d6ee"/><rect x="689" y="532" width="1" height="1" fill="#e6d6ee"/>
<rect x="694" y="505" width="3" height="30" fill="#d02a0a"/>
<rect x="695" y="506" width="1" height="28" fill="#000"/>
<rect x="696" y="507" width="1" height="1" fill="#e6d6ee"/><rect x="694" y="512" width="1" height="1" fill="#e6d6ee"/><rect x="696" y="517" width="1" height="1" fill="#e6d6ee"/><rect x="694" y="522" width="1" height="1" fill="#e6d6ee"/><rect x="696" y="527" width="1" height="1" fill="#e6d6ee"/><rect x="694" y="532" width="1" height="1" fill="#e6d6ee"/>
<rect x="699" y="503" width="3" height="32" fill="#d02a0a"/>
<rect x="700" y="504" width="1" height="30" fill="#000"/>
<rect x="701" y="507" width="1" height="1" fill="#e6d6ee"/><rect x="699" y="512" width="1" height="1" fill="#e6d6ee"/><rect x="701" y="517" width="1" height="1" fill="#e6d6ee"/><rect x="699" y="522" width="1" height="1" fill="#e6d6ee"/><rect x="701" y="527" width="1" height="1" fill="#e6d6ee"/><rect x="699" y="532" width="1" height="1" fill="#e6d6ee"/>
<rect x="704" y="506" width="3" height="29" fill="#d02a0a"/>
<rect x="705" y="507" width="1" height="27" fill="#000"/>
<rect x="704" y="512" width="1" height="1" fill="#e6d6ee"/><rect x="706" y="517" width="1" height="1" fill="#e6d6ee"/><rect x="704" y="522" width="1" height="1" fill="#e6d6ee"/><rect x="706" y="527" width="1" height="1" fill="#e6d6ee"/><rect x="704" y="532" width="1" height="1" fill="#e6d6ee"/>
<rect x="709" y="507" width="3" height="28" fill="#d02a0a"/>
<rect x="710" y="508" width="1" height="26" fill="#000"/>
<rect x="709" y="512" width="1" height="1" fill="#e6d6ee"/><rect x="711" y="517" width="1" height="1" fill="#e6d6ee"/><rect x="709" y="522" width="1" height="1" fill="#e6d6ee"/><rect x="711" y="527" width="1" height="1" fill="#e6d6ee"/><rect x="709" y="532" width="1" height="1" fill="#e6d6ee"/>
<rect x="714" y="508" width="3" height="27" fill="#d02a0a"/>
<rect x="715" y="509" width="1" height="25" fill="#000"/>
<rect x="714" y="512" width="1" height="1" fill="#e6d6ee"/><rect x="716" y="517" width="1" height="1" fill="#e6d6ee"/><rect x="714" y="522" width="1" height="1" fill="#e6d6ee"/><rect x="716" y="527" width="1" height="1" fill="#e6d6ee"/><rect x="714" y="532" width="1" height="1" fill="#e6d6ee"/>
<rect x="719" y="510" width="3" height="25" fill="#d02a0a"/>
<rect x="720" y="511" width="1" height="23" fill="#000"/>
<rect x="719" y="512" width="1" height="1" fill="#e6d6ee"/><rect x="721" y="517" width="1" height="1" fill="#e6d6ee"/><rect x="719" y="522" width="1" height="1" fill="#e6d6ee"/><rect x="721" y="527" width="1" height="1" fill="#e6d6ee"/><rect x="719" y="532" width="1" height="1" fill="#e6d6ee"/>
<rect x="724" y="512" width="3" height="23" fill="#d02a0a"/>
<rect x="725" y="513" width="1" height="21" fill="#000"/>
<rect x="726" y="517" width="1" height="1" fill="#e6d6ee"/><rect x="724" y="522" width="1" height="1" fill="#e6d6ee"/><rect x="726" y="527" width="1" height="1" fill="#e6d6ee"/><rect x="724" y="532" width="1" height="1" fill="#e6d6ee"/>
<polyline points="2.0,506.3 25.5,505.9 39.2,509.2 82.4,509.2 98.0,514.1 113.7,518.0 127.5,521.4 141.2,522.9 152.9,526.9 168.6,530.8 180.4,533.1 200.0,532.7 211.8,526.9 223.5,523.9 235.3,521.6 258.8,523.9 274.5,524.9 290.2,528.4 305.9,530.8 321.6,532.4 341.2,531.2 366.7,529.8 400.0,529.2 439.2,527.8 468.6,527.5 498.0,528.2 525.5,527.3 545.1,524.9 576.5,523.9 600.0,523.9 619.6,523.9 639.2,520.6 658.8,516.1 678.4,511.2 692.2,509.2 705.9,506.3 729.4,504.9" fill="none" stroke="#d02a0a" stroke-width="1" />
<polyline points="2.0,506.9 25.5,505.9 39.2,510.2 51.0,512.2 82.4,512.2 86.3,511.2 98.0,516.1 109.8,522.0 121.6,527.8 133.3,532.7 149.0,535.7 168.6,537.6 176.5,534.7 188.2,531.8 200.0,527.8 209.8,523.3 219.6,520.6 235.3,521.4 258.8,523.9 270.6,527.8 282.4,532.7 294.1,536.7 305.9,538.2 317.6,537.6 333.3,533.7 349.0,530.8 368.6,529.4 400.0,528.8 439.2,527.3 456.9,525.9 468.6,526.5 482.4,528.8 498.0,529.8 513.7,528.4 525.5,527.8 537.3,525.9 549.0,522.5 564.7,522.0 580.4,521.4 600.0,523.3 615.7,525.5 629.4,522.0 643.1,516.1 656.9,509.2 666.7,503.3 678.4,501.0 690.2,501.4 705.9,502.4 721.6,505.3 729.4,506.9" fill="none" stroke="#00ff00" stroke-width="1" />
<polyline points="2.0,505.9 25.5,504.9 31.4,507.3 39.2,516.1 52.9,519.0 64.7,510.2 84.3,506.3 92.2,515.1 102.0,526.9 109.8,534.7 117.6,536.3 137.3,533.7 152.9,536.7 166.7,540.2 172.5,537.6 180.4,529.8 188.2,523.9 196.1,520.6 200.0,520.6 219.6,521.4 239.2,522.9 258.8,525.9 268.6,531.8 282.4,538.6 294.1,540.6 305.9,539.6 317.6,535.7 329.4,530.8 341.2,528.8 356.9,529.4 376.5,529.8 400.0,528.8 419.6,527.5 439.2,526.5 456.9,525.5 468.6,526.9 482.4,531.2 494.1,531.2 505.9,528.8 517.6,525.9 529.4,523.9 541.2,521.4 549.0,519.4 556.9,520.6 568.6,522.9 584.3,523.5 600.0,525.3 615.7,526.9 625.5,522.0 633.3,514.1 643.1,507.3 658.8,502.4 668.6,499.4 682.4,499.0 692.2,502.4 705.9,505.9 721.6,506.9 729.4,510.2" fill="none" stroke="#ffff00" stroke-width="1" />
</g>
<g shape-rendering="crispEdges">
<polyline points="0.0,618.7 7.8,617.5 15.7,620.7 31.4,618.7 51.0,614.8 70.6,611.7 84.3,612.5 98.0,603.8 109.8,603.8 117.6,605.8 129.4,605.8 139.2,601.9 152.9,607.0 172.5,604.6 188.2,603.8 203.9,605.0 223.5,603.8 243.1,605.8 258.8,607.0 274.5,605.8 286.3,601.9 292.2,604.6 298.0,601.9 313.7,603.0 333.3,600.7 352.9,601.9 372.5,603.8 400.0,603.0 427.5,604.6 451.0,603.8 478.4,601.9 498.0,598.7 503.9,599.9 517.6,595.2 535.3,591.3 552.9,596.0 572.5,594.0 592.2,591.3 603.9,593.2 613.7,592.8 619.6,587.4 627.5,588.9 639.2,580.3 645.1,579.5 651.0,577.2 654.1,579.5 659.6,574.4 666.7,579.5 674.5,581.1 686.3,579.5 700.0,576.4 713.7,579.5 729.4,578.7" fill="none" stroke="#fff" stroke-width="1" />
</g>
<g shape-rendering="crispEdges">
<rect x="1" y="691" width="3" height="9" fill="#d02a0a"/>
<rect x="2" y="692" width="1" height="7" fill="#000"/>
<rect x="3" y="697" width="1" height="1" fill="#e6d6ee"/>
<rect x="6" y="690" width="3" height="10" fill="#d02a0a"/>
<rect x="7" y="691" width="1" height="8" fill="#000"/>
<rect x="6" y="692" width="1" height="1" fill="#e6d6ee"/><rect x="8" y="697" width="1" height="1" fill="#e6d6ee"/>
<rect x="11" y="685" width="3" height="15" fill="#d02a0a"/>
<rect x="12" y="686" width="1" height="13" fill="#000"/>
<rect x="13" y="687" width="1" height="1" fill="#e6d6ee"/><rect x="11" y="692" width="1" height="1" fill="#e6d6ee"/><rect x="13" y="697" width="1" height="1" fill="#e6d6ee"/>
<rect x="16" y="681" width="3" height="19" fill="#00ffff"/>
<rect x="21" y="689" width="3" height="11" fill="#00ffff"/>
<rect x="26" y="692" width="3" height="8" fill="#d02a0a"/>
<rect x="27" y="693" width="1" height="6" fill="#000"/>
<rect x="28" y="697" width="1" height="1" fill="#e6d6ee"/>
<rect x="31" y="679" width="3" height="21" fill="#d02a0a"/>
<rect x="32" y="680" width="1" height="19" fill="#000"/>
<rect x="31" y="682" width="1" height="1" fill="#e6d6ee"/><rect x="33" y="687" width="1" height="1" fill="#e6d6ee"/><rect x="31" y="692" width="1" height="1" fill="#e6d6ee"/><rect x="33" y="697" width="1" height="1" fill="#e6d6ee"/>
<rect x="36" y="691" width="3" height="9" fill="#00ffff"/>
<rect x="41" y="688" width="3" height="12" fill="#d02a0a"/>
<rect x="42" y="689" width="1" height="10" fill="#000"/>
<rect x="41" y="692" width="1" height="1" fill="#e6d6ee"/><rect x="43" y="697" width="1" height="1" fill="#e6d6ee"/>
<rect x="47" y="684" width="3" height="16" fill="#d02a0a"/>
<rect x="48" y="685" width="1" height="14" fill="#000"/>
<rect x="49" y="687" width="1" height="1" fill="#e6d6ee"/><rect x="47" y="692" width="1" height="1" fill="#e6d6ee"/><rect x="49" y="697" width="1" height="1" fill="#e6d6ee"/>
<rect x="52" y="685" width="3" height="15" fill="#d02a0a"/>
<rect x="53" y="686" width="1" height="13" fill="#000"/>
<rect x="54" y="687" width="1" height="1" fill="#e6d6ee"/><rect x="52" y="692" width="1" height="1" fill="#e6d6ee"/><rect x="54" y="697" width="1" height="1" fill="#e6d6ee"/>
<rect x="57" y="689" width="3" height="11" fill="#00ffff"/>
<rect x="62" y="689" width="3" height="11" fill="#d02a0a"/>
<rect x="63" y="690" width="1" height="9" fill="#000"/>
<rect x="62" y="692" width="1" height="1" fill="#e6d6ee"/><rect x="64" y="697" width="1" height="1" fill="#e6d6ee"/>
<rect x="67" y="686" width="3" height="14" fill="#d02a0a"/>
<rect x="68" y="687" width="1" height="12" fill="#000"/>
<rect x="67" y="692" width="1" height="1" fill="#e6d6ee"/><rect x="69" y="697" width="1" height="1" fill="#e6d6ee"/>
<rect x="72" y="688" width="3" height="12" fill="#00ffff"/>
<rect x="77" y="682" width="3" height="18" fill="#d02a0a"/>
<rect x="78" y="683" width="1" height="16" fill="#000"/>
<rect x="79" y="687" width="1" height="1" fill="#e6d6ee"/><rect x="77" y="692" width="1" height="1" fill="#e6d6ee"/><rect x="79" y="697" width="1" height="1" fill="#e6d6ee"/>
<rect x="82" y="680" width="3" height="20" fill="#00ffff"/>
<rect x="87" y="689" width="3" height="11" fill="#d02a0a"/>
<rect x="88" y="690" width="1" height="9" fill="#000"/>
<rect x="87" y="692" width="1" height="1" fill="#e6d6ee"/><rect x="89" y="697" width="1" height="1" fill="#e6d6ee"/>
<rect x="92" y="665" width="3" height="35" fill="#d02a0a"/>
<rect x="93" y="666" width="1" height="33" fill="#000"/>
<rect x="94" y="667" width="1" height="1" fill="#e6d6ee"/><rect x="92" y="672" width="1" height="1" fill="#e6d6ee"/><rect x="94" y="677" width="1" height="1" fill="#e6d6ee"/><rect x="92" y="682" width="1" height="1" fill="#e6d6ee"/><rect x="94" y="687" width="1" height="1" fill="#e6d6ee"/><rect x="92" y="692" width="1" height="1" fill="#e6d6ee"/><rect x="94" y="697" width="1" height="1" fill="#e6d6ee"/>
<rect x="97" y="669" width="3" height="31" fill="#d02a0a"/>
<rect x="98" y="670" width="1" height="29" fill="#000"/>
<rect x="97" y="672" width="1" height="1" fill="#e6d6ee"/><rect x="99" y="677" width="1" height="1" fill="#e6d6ee"/><rect x="97" y="682" width="1" height="1" fill="#e6d6ee"/><rect x="99" y="687" width="1" height="1" fill="#e6d6ee"/><rect x="97" y="692" width="1" height="1" fill="#e6d6ee"/><rect x="99" y="697" width="1" height="1" fill="#e6d6ee"/>
<rect x="102" y="688" width="3" height="12" fill="#00ffff"/>
<rect x="107" y="689" width="3" height="11" fill="#00ffff"/>
<rect x="112" y="687" width="3" height="13" fill="#00ffff"/>
<rect x="117" y="688" width="3" height="12" fill="#00ffff"/>
<rect x="122" y="694" width="3" height="6" fill="#d02a0a"/>
<rect x="123" y="695" width="1" height="4" fill="#000"/>
<rect x="124" y="697" width="1" height="1" fill="#e6d6ee"/>
<rect x="127" y="688" width="3" height="12" fill="#d02a0a"/>
<rect x="128" y="689" width="1" height="10" fill="#000"/>
<rect x="127" y="692" width="1" height="1" fill="#e6d6ee"/><rect x="129" y="697" width="1" height="1" fill="#e6d6ee"/>
<rect x="133" y="689" width="3" height="11" fill="#00ffff"/>
<rect x="138" y="668" width="3" height="32" fill="#d02a0a"/>
<rect x="139" y="669" width="1" height="30" fill="#000"/>
<rect x="138" y="672" width="1" height="1" fill="#e6d6ee"/><rect x="140" y="677" width="1" height="1" fill="#e6d6ee"/><rect x="138" y="682" width="1" height="1" fill="#e6d6ee"/><rect x="140" y="687" width="1" height="1" fill="#e6d6ee"/><rect x="138" y="692" width="1" height="1" fill="#e6d6ee"/><rect x="140" y="697" width="1" height="1" fill="#e6d6ee"/>
<rect x="143" y="682" width="3" height="18" fill="#00ffff"/>
<rect x="148" y="685" width="3" height="15" fill="#00ffff"/>
<rect x="153" y="691" width="3" height="9" fill="#00ffff"/>
<rect x="158" y="694" width="3" height="6" fill="#d02a0a"/>
<rect x="159" y="695" width="1" height="4" fill="#000"/>
<rect x="160" y="697" width="1" height="1" fill="#e6d6ee"/>
<rect x="163" y="686" width="3" height="14" fill="#d02a0a"/>
<rect x="164" y="687" width="1" height="12" fill="#000"/>
<rect x="163" y="692" width="1" height="1" fill="#e6d6ee"/><rect x="165" y="697" width="1" height="1" fill="#e6d6ee"/>
<rect x="168" y="691" width="3" height="9" fill="#00ffff"/>
<rect x="173" y="694" width="3" height="6" fill="#d02a0a"/>
<rect x="174" y="695" width="1" height="4" fill="#000"/>
<rect x="175" y="697" width="1" height="1" fill="#e6d6ee"/>
<rect x="178" y="690" width="3" height="10" fill="#d02a0a"/>
<rect x="179" y="691" width="1" height="8" fill="#000"/>
<rect x="178" y="692" width="1" height="1" fill="#e6d6ee"/><rect x="180" y="697" width="1" height="1" fill="#e6d6ee"/>
<rect x="183" y="693" width="3" height="7" fill="#d02a0a"/>
<rect x="184" y="694" width="1" height="5" fill="#000"/>
<rect x="185" y="697" width="1" height="1" fill="#e6d6ee"/>
<rect x="188" y="694" width="3" height="6" fill="#00ffff"/>
<rect x="193" y="696" width="3" height="4" fill="#00ffff"/>
<rect x="198" y="694" width="3" height="6" fill="#00ffff"/>
<rect x="203" y="696" width="3" height="4" fill="#d02a0a"/>
<rect x="204" y="697" width="1" height="2" fill="#000"/>
<rect x="208" y="696" width="3" height="4" fill="#d02a0a"/>
<rect x="209" y="697" width="1" height="2" fill="#000"/>
<rect x="213" y="694" width="3" height="6" fill="#00ffff"/>
<rect x="218" y="696" width="3" height="4" fill="#00ffff"/>
<rect x="224" y="696" width="3" height="4" fill="#d02a0a"/>
<rect x="225" y="697" width="1" height="2" fill="#000"/>
<rect x="229" y="693" width="3" height="7" fill="#00ffff"/>
<rect x="234" y="690" width="3" height="10" fill="#00ffff"/>
<rect x="239" y="694" width="3" height="6" fill="#00ffff"/>
<rect x="244" y="694" width="3" height="6" fill="#00ffff"/>
<rect x="249" y="696" width="3" height="4" fill="#d02a0a"/>
<rect x="250" y="697" width="1" height="2" fill="#000"/>
<rect x="254" y="696" width="3" height="4" fill="#d02a0a"/>
<rect x="255" y="697" width="1" height="2" fill="#000"/>
<rect x="259" y="694" width="3" height="6" fill="#d02a0a"/>
<rect x="260" y="695" width="1" height="4" fill="#000"/>
<rect x="261" y="697" width="1" height="1" fill="#e6d6ee"/>
<rect x="264" y="694" width="3" height="6" fill="#00ffff"/>
<rect x="269" y="696" width="3" height="4" fill="#d02a0a"/>
<rect x="270" y="697" width="1" height="2" fill="#000"/>
<rect x="274" y="696" width="3" height="4" fill="#d02a0a"/>
<rect x="275" y="697" width="1" height="2" fill="#000"/>
<rect x="279" y="692" width="3" height="8" fill="#d02a0a"/>
<rect x="280" y="693" width="1" height="6" fill="#000"/>
<rect x="281" y="697" width="1" height="1" fill="#e6d6ee"/>
<rect x="284" y="692" width="3" height="8" fill="#d02a0a"/>
<rect x="285" y="693" width="1" height="6" fill="#000"/>
<rect x="286" y="697" width="1" height="1" fill="#e6d6ee"/>
<rect x="289" y="689" width="3" height="11" fill="#00ffff"/>
<rect x="294" y="671" width="3" height="29" fill="#d02a0a"/>
<rect x="295" y="672" width="1" height="27" fill="#000"/>
<rect x="296" y="677" width="1" height="1" fill="#e6d6ee"/><rect x="294" y="682" width="1" height="1" fill="#e6d6ee"/><rect x="296" y="687" width="1" height="1" fill="#e6d6ee"/><rect x="294" y="692" width="1" height="1" fill="#e6d6ee"/><rect x="296" y="697" width="1" height="1" fill="#e6d6ee"/>
<rect x="299" y="687" width="3" height="13" fill="#00ffff"/>
<rect x="304" y="693" width="3" height="7" fill="#00ffff"/>
<rect x="310" y="682" width="3" height="18" fill="#d02a0a"/>
<rect x="311" y="683" width="1" height="16" fill="#000"/>
<rect x="312" y="687" width="1" height="1" fill="#e6d6ee"/><rect x="310" y="692" width="1" height="1" fill="#e6d6ee"/><rect x="312" y="697" width="1" height="1" fill="#e6d6ee"/>
<rect x="315" y="690" width="3" height="10" fill="#00ffff"/>
<rect x="320" y="690" width="3" height="10" fill="#d02a0a"/>
<rect x="321" y="691" width="1" height="8" fill="#000"/>
<rect x="320" y="692" width="1" height="1" fill="#e6d6ee"/><rect x="322" y="697" width="1" height="1" fill="#e6d6ee"/>
<rect x="325" y="694" width="3" height="6" fill="#00ffff"/>
<rect x="330" y="690" width="3" height="10" fill="#d02a0a"/>
<rect x="331" y="691" width="1" height="8" fill="#000"/>
<rect x="330" y="692" width="1" height="1" fill="#e6d6ee"/><rect x="332" y="697" width="1" height="1" fill="#e6d6ee"/>
<rect x="335" y="691" width="3" height="9" fill="#00ffff"/>
<rect x="340" y="690" width="3" height="10" fill="#d02a0a"/>
<rect x="341" y="691" width="1" height="8" fill="#000"/>
<rect x="340" y="692" width="1" height="1" fill="#e6d6ee"/><rect x="342" y="697" width="1" height="1" fill="#e6d6ee"/>
<rect x="345" y="691" width="3" height="9" fill="#00ffff"/>
<rect x="350" y="693" width="3" height="7" fill="#00ffff"/>
<rect x="355" y="696" width="3" height="4" fill="#d02a0a"/>
<rect x="356" y="697" width="1" height="2" fill="#000"/>
<rect x="360" y="694" width="3" height="6" fill="#00ffff"/>
<rect x="365" y="696" width="3" height="4" fill="#d02a0a"/>
<rect x="366" y="697" width="1" height="2" fill="#000"/>
<rect x="370" y="696" width="3" height="4" fill="#00ffff"/>
<rect x="375" y="696" width="3" height="4" fill="#00ffff"/>
<rect x="380" y="696" width="3" height="4" fill="#d02a0a"/>
<rect x="381" y="697" width="1" height="2" fill="#000"/>
<rect x="385" y="696" width="3" height="4" fill="#00ffff"/>
<rect x="390" y="696" width="3" height="4" fill="#00ffff"/>
<rect x="395" y="696" width="3" height="4" fill="#d02a0a"/>
<rect x="396" y="697" width="1" height="2" fill="#000"/>
<rect x="401" y="694" width="3" height="6" fill="#d02a0a"/>
<rect x="402" y="695" width="1" height="4" fill="#000"/>
<rect x="403" y="697" width="1" height="1" fill="#e6d6ee"/>
<rect x="406" y="696" width="3" height="4" fill="#00ffff"/>
<rect x="411" y="696" width="3" height="4" fill="#d02a0a"/>
<rect x="412" y="697" width="1" height="2" fill="#000"/>
<rect x="416" y="696" width="3" height="4" fill="#00ffff"/>
<rect x="421" y="696" width="3" height="4" fill="#00ffff"/>
<rect x="426" y="696" width="3" height="4" fill="#d02a0a"/>
<rect x="427" y="697" width="1" height="2" fill="#000"/>
<rect x="431" y="697" width="3" height="3" fill="#00ffff"/>
<rect x="436" y="696" width="3" height="4" fill="#00ffff"/>
<rect x="441" y="697" width="3" height="3" fill="#d02a0a"/>
<rect x="442" y="698" width="1" height="1" fill="#000"/>
<rect x="446" y="697" width="3" height="3" fill="#d02a0a"/>
<rect x="447" y="698" width="1" height="1" fill="#000"/>
<rect x="451" y="696" width="3" height="4" fill="#d02a0a"/>
<rect x="452" y="697" width="1" height="2" fill="#000"/>
<rect x="456" y="696" width="3" height="4" fill="#00ffff"/>
<rect x="461" y="696" width="3" height="4" fill="#d02a0a"/>
<rect x="462" y="697" width="1" height="2" fill="#000"/>
<rect x="466" y="694" width="3" height="6" fill="#d02a0a"/>
<rect x="467" y="695" width="1" height="4" fill="#000"/>
<rect x="468" y="697" width="1" height="1" fill="#e6d6ee"/>
<rect x="471" y="696" width="3" height="4" fill="#00ffff"/>
<rect x="476" y="697" width="3" height="3" fill="#d02a0a"/>
<rect x="477" y="698" width="1" height="1" fill="#000"/>
<rect x="481" y="695" width="3" height="5" fill="#d02a0a"/>
<rect x="482" y="696" width="1" height="3" fill="#000"/>
<rect x="483" y="697" width="1" height="1" fill="#e6d6ee"/>
<rect x="486" y="692" width="3" height="8" fill="#d02a0a"/>
<rect x="487" y="693" width="1" height="6" fill="#000"/>
<rect x="488" y="697" width="1" height="1" fill="#e6d6ee"/>
<rect x="492" y="696" width="3" height="4" fill="#d02a0a"/>
<rect x="493" y="697" width="1" height="2" fill="#000"/>
<rect x="497" y="691" width="3" height="9" fill="#d02a0a"/>
<rect x="498" y="692" width="1" height="7" fill="#000"/>
<rect x="499" y="697" width="1" height="1" fill="#e6d6ee"/>
<rect x="502" y="690" width="3" height="10" fill="#00ffff"/>
<rect x="507" y="693" width="3" height="7" fill="#d02a0a"/>
<rect x="508" y="694" width="1" height="5" fill="#000"/>
<rect x="509" y="697" width="1" height="1" fill="#e6d6ee"/>
<rect x="512" y="690" width="3" height="10" fill="#d02a0a"/>
<rect x="513" y="691" width="1" height="8" fill="#000"/>
<rect x="512" y="692" width="1" height="1" fill="#e6d6ee"/><rect x="514" y="697" width="1" height="1" fill="#e6d6ee"/>
<rect x="517" y="685" width="3" height="15" fill="#d02a0a"/>
<rect x="518" y="686" width="1" height="13" fill="#000"/>
<rect x="519" y="687" width="1" height="1" fill="#e6d6ee"/><rect x="517" y="692" width="1" height="1" fill="#e6d6ee"/><rect x="519" y="697" width="1" height="1" fill="#e6d6ee"/>
<rect x="522" y="691" width="3" height="9" fill="#d02a0a"/>
<rect x="523" y="692" width="1" height="7" fill="#000"/>
<rect x="524" y="697" width="1" height="1" fill="#e6d6ee"/>
<rect x="527" y="692" width="3" height="8" fill="#d02a0a"/>
<rect x="528" y="693" width="1" height="6" fill="#000"/>
<rect x="529" y="697" width="1" height="1" fill="#e6d6ee"/>
<rect x="532" y="682" width="3" height="18" fill="#d02a0a"/>
<rect x="533" y="683" width="1" height="16" fill="#000"/>
<rect x="534" y="687" width="1" height="1" fill="#e6d6ee"/><rect x="532" y="692" width="1" height="1" fill="#e6d6ee"/><rect x="534" y="697" width="1" height="1" fill="#e6d6ee"/>
<rect x="537" y="689" width="3" height="11" fill="#00ffff"/>
<rect x="542" y="693" width="3" height="7" fill="#00ffff"/>
<rect x="547" y="691" width="3" height="9" fill="#00ffff"/>
<rect x="552" y="689" width="3" height="11" fill="#00ffff"/>
<rect x="557" y="693" width="3" height="7" fill="#d02a0a"/>
<rect x="558" y="694" width="1" height="5" fill="#000"/>
<rect x="559" y="697" width="1" height="1" fill="#e6d6ee"/>
<rect x="562" y="691" width="3" height="9" fill="#d02a0a"/>
<rect x="563" y="692" width="1" height="7" fill="#000"/>
<rect x="564" y="697" width="1" height="1" fill="#e6d6ee"/>
<rect x="567" y="691" width="3" height="9" fill="#d02a0a"/>
<rect x="568" y="692" width="1" height="7" fill="#000"/>
<rect x="569" y="697" width="1" height="1" fill="#e6d6ee"/>
<rect x="572" y="691" width="3" height="9" fill="#00ffff"/>
<rect x="578" y="694" width="3" height="6" fill="#d02a0a"/>
<rect x="579" y="695" width="1" height="4" fill="#000"/>
<rect x="580" y="697" width="1" height="1" fill="#e6d6ee"/>
<rect x="583" y="691" width="3" height="9" fill="#d02a0a"/>
<rect x="584" y="692" width="1" height="7" fill="#000"/>
<rect x="585" y="697" width="1" height="1" fill="#e6d6ee"/>
<rect x="588" y="693" width="3" height="7" fill="#d02a0a"/>
<rect x="589" y="694" width="1" height="5" fill="#000"/>
<rect x="590" y="697" width="1" height="1" fill="#e6d6ee"/>
<rect x="593" y="693" width="3" height="7" fill="#00ffff"/>
<rect x="598" y="689" width="3" height="11" fill="#00ffff"/>
<rect x="603" y="692" width="3" height="8" fill="#d02a0a"/>
<rect x="604" y="693" width="1" height="6" fill="#000"/>
<rect x="605" y="697" width="1" height="1" fill="#e6d6ee"/>
<rect x="608" y="694" width="3" height="6" fill="#00ffff"/>
<rect x="613" y="690" width="3" height="10" fill="#d02a0a"/>
<rect x="614" y="691" width="1" height="8" fill="#000"/>
<rect x="613" y="692" width="1" height="1" fill="#e6d6ee"/><rect x="615" y="697" width="1" height="1" fill="#e6d6ee"/>
<rect x="618" y="666" width="3" height="34" fill="#d02a0a"/>
<rect x="619" y="667" width="1" height="32" fill="#000"/>
<rect x="618" y="672" width="1" height="1" fill="#e6d6ee"/><rect x="620" y="677" width="1" height="1" fill="#e6d6ee"/><rect x="618" y="682" width="1" height="1" fill="#e6d6ee"/><rect x="620" y="687" width="1" height="1" fill="#e6d6ee"/><rect x="618" y="692" width="1" height="1" fill="#e6d6ee"/><rect x="620" y="697" width="1" height="1" fill="#e6d6ee"/>
<rect x="623" y="684" width="3" height="16" fill="#00ffff"/>
<rect x="628" y="685" width="3" height="15" fill="#d02a0a"/>
<rect x="629" y="686" width="1" height="13" fill="#000"/>
<rect x="630" y="687" width="1" height="1" fill="#e6d6ee"/><rect x="628" y="692" width="1" height="1" fill="#e6d6ee"/><rect x="630" y="697" width="1" height="1" fill="#e6d6ee"/>
<rect x="633" y="666" width="3" height="34" fill="#d02a0a"/>
<rect x="634" y="667" width="1" height="32" fill="#000"/>
<rect x="633" y="672" width="1" height="1" fill="#e6d6ee"/><rect x="635" y="677" width="1" height="1" fill="#e6d6ee"/><rect x="633" y="682" width="1" height="1" fill="#e6d6ee"/><rect x="635" y="687" width="1" height="1" fill="#e6d6ee"/><rect x="633" y="692" width="1" height="1" fill="#e6d6ee"/><rect x="635" y="697" width="1" height="1" fill="#e6d6ee"/>
<rect x="638" y="664" width="3" height="36" fill="#d02a0a"/>
<rect x="639" y="665" width="1" height="34" fill="#000"/>
<rect x="640" y="667" width="1" height="1" fill="#e6d6ee"/><rect x="638" y="672" width="1" height="1" fill="#e6d6ee"/><rect x="640" y="677" width="1" height="1" fill="#e6d6ee"/><rect x="638" y="682" width="1" height="1" fill="#e6d6ee"/><rect x="640" y="687" width="1" height="1" fill="#e6d6ee"/><rect x="638" y="692" width="1" height="1" fill="#e6d6ee"/><rect x="640" y="697" width="1" height="1" fill="#e6d6ee"/>
<rect x="643" y="687" width="3" height="13" fill="#00ffff"/>
<rect x="648" y="677" width="3" height="23" fill="#d02a0a"/>
<rect x="649" y="678" width="1" height="21" fill="#000"/>
<rect x="648" y="682" width="1" height="1" fill="#e6d6ee"/><rect x="650" y="687" width="1" height="1" fill="#e6d6ee"/><rect x="648" y="692" width="1" height="1" fill="#e6d6ee"/><rect x="650" y="697" width="1" height="1" fill="#e6d6ee"/>
<rect x="653" y="684" width="3" height="16" fill="#00ffff"/>
<rect x="658" y="659" width="3" height="41" fill="#d02a0a"/>
<rect x="659" y="660" width="1" height="39" fill="#000"/>
<rect x="658" y="662" width="1" height="1" fill="#e6d6ee"/><rect x="660" y="667" width="1" height="1" fill="#e6d6ee"/><rect x="658" y="672" width="1" height="1" fill="#e6d6ee"/><rect x="660" y="677" width="1" height="1" fill="#e6d6ee"/><rect x="658" y="682" width="1" height="1" fill="#e6d6ee"/><rect x="660" y="687" width="1" height="1" fill="#e6d6ee"/><rect x="658" y="692" width="1" height="1" fill="#e6d6ee"/><rect x="660" y="697" width="1" height="1" fill="#e6d6ee"/>
<rect x="663" y="672" width="3" height="28" fill="#00ffff"/>
<rect x="669" y="686" width="3" height="14" fill="#00ffff"/>
<rect x="674" y="693" width="3" height="7" fill="#d02a0a"/>
<rect x="675" y="694" width="1" height="5" fill="#000"/>
<rect x="676" y="697" width="1" height="1" fill="#e6d6ee"/>
<rect x="679" y="692" width="3" height="8" fill="#00ffff"/>
<rect x="684" y="687" width="3" height="13" fill="#d02a0a"/>
<rect x="685" y="688" width="1" height="11" fill="#000"/>
<rect x="684" y="692" width="1" height="1" fill="#e6d6ee"/><rect x="686" y="697" width="1" height="1" fill="#e6d6ee"/>
<rect x="689" y="689" width="3" height="11" fill="#00ffff"/>
<rect x="694" y="684" width="3" height="16" fill="#d02a0a"/>
<rect x="695" y="685" width="1" height="14" fill="#000"/>
<rect x="696" y="687" width="1" height="1" fill="#e6d6ee"/><rect x="694" y="692" width="1" height="1" fill="#e6d6ee"/><rect x="696" y="697" width="1" height="1" fill="#e6d6ee"/>
<rect x="699" y="688" width="3" height="12" fill="#d02a0a"/>
<rect x="700" y="689" width="1" height="10" fill="#000"/>
<rect x="699" y="692" width="1" height="1" fill="#e6d6ee"/><rect x="701" y="697" width="1" height="1" fill="#e6d6ee"/>
<rect x="704" y="690" width="3" height="10" fill="#00ffff"/>
<rect x="709" y="691" width="3" height="9" fill="#00ffff"/>
<rect x="714" y="689" width="3" height="11" fill="#00ffff"/>
<rect x="719" y="687" width="3" height="13" fill="#d02a0a"/>
<rect x="720" y="688" width="1" height="11" fill="#000"/>
<rect x="719" y="692" width="1" height="1" fill="#e6d6ee"/><rect x="721" y="697" width="1" height="1" fill="#e6d6ee"/>
<rect x="724" y="690" width="3" height="10" fill="#00ffff"/>
<rect x="729" y="692" width="3" height="8" fill="#d02a0a"/>
<rect x="730" y="693" width="1" height="6" fill="#000"/>
<rect x="731" y="697" width="1" height="1" fill="#e6d6ee"/>
<rect x="734" y="686" width="3" height="14" fill="#d02a0a"/>
<rect x="735" y="687" width="1" height="12" fill="#000"/>
<rect x="734" y="692" width="1" height="1" fill="#e6d6ee"/><rect x="736" y="697" width="1" height="1" fill="#e6d6ee"/>
<rect x="739" y="679" width="3" height="21" fill="#d02a0a"/>
<rect x="740" y="680" width="1" height="19" fill="#000"/>
<rect x="739" y="682" width="1" height="1" fill="#e6d6ee"/><rect x="741" y="687" width="1" height="1" fill="#e6d6ee"/><rect x="739" y="692" width="1" height="1" fill="#e6d6ee"/><rect x="741" y="697" width="1" height="1" fill="#e6d6ee"/>
<rect x="744" y="670" width="3" height="30" fill="#d02a0a"/>
<rect x="745" y="671" width="1" height="28" fill="#000"/>
<rect x="744" y="672" width="1" height="1" fill="#e6d6ee"/><rect x="746" y="677" width="1" height="1" fill="#e6d6ee"/><rect x="744" y="682" width="1" height="1" fill="#e6d6ee"/><rect x="746" y="687" width="1" height="1" fill="#e6d6ee"/><rect x="744" y="692" width="1" height="1" fill="#e6d6ee"/><rect x="746" y="697" width="1" height="1" fill="#e6d6ee"/>
<rect x="749" y="683" width="3" height="17" fill="#d02a0a"/>
<rect x="750" y="684" width="1" height="15" fill="#000"/>
<rect x="751" y="687" width="1" height="1" fill="#e6d6ee"/><rect x="749" y="692" width="1" height="1" fill="#e6d6ee"/><rect x="751" y="697" width="1" height="1" fill="#e6d6ee"/>
<rect x="755" y="683" width="3" height="17" fill="#d02a0a"/>
<rect x="756" y="684" width="1" height="15" fill="#000"/>
<rect x="757" y="687" width="1" height="1" fill="#e6d6ee"/><rect x="755" y="692" width="1" height="1" fill="#e6d6ee"/><rect x="757" y="697" width="1" height="1" fill="#e6d6ee"/>
<rect x="760" y="683" width="3" height="17" fill="#00ffff"/>
<rect x="765" y="684" width="3" height="16" fill="#d02a0a"/>
<rect x="766" y="685" width="1" height="14" fill="#000"/>
<rect x="767" y="687" width="1" height="1" fill="#e6d6ee"/><rect x="765" y="692" width="1" height="1" fill="#e6d6ee"/><rect x="767" y="697" width="1" height="1" fill="#e6d6ee"/>
<rect x="770" y="645" width="3" height="55" fill="#d02a0a"/>
<rect x="771" y="646" width="1" height="53" fill="#000"/>
<rect x="772" y="647" width="1" height="1" fill="#e6d6ee"/><rect x="770" y="652" width="1" height="1" fill="#e6d6ee"/><rect x="772" y="657" width="1" height="1" fill="#e6d6ee"/><rect x="770" y="662" width="1" height="1" fill="#e6d6ee"/><rect x="772" y="667" width="1" height="1" fill="#e6d6ee"/><rect x="770" y="672" width="1" height="1" fill="#e6d6ee"/><rect x="772" y="677" width="1" height="1" fill="#e6d6ee"/><rect x="770" y="682" width="1" height="1" fill="#e6d6ee"/><rect x="772" y="687" width="1" height="1" fill="#e6d6ee"/><rect x="770" y="692" width="1" height="1" fill="#e6d6ee"/><rect x="772" y="697" width="1" height="1" fill="#e6d6ee"/>
<polyline points="2.0,688.3 23.5,686.7 58.8,686.3 82.4,685.7 94.1,682.8 113.7,681.8 125.5,683.8 141.2,684.4 156.9,685.7 172.5,686.7 184.3,687.7 200.0,691.6 211.8,694.2 239.2,694.5 286.3,694.5 294.1,691.6 302.0,689.6 317.6,689.3 333.3,688.7 349.0,689.6 360.8,692.2 376.5,694.2 400.0,695.1 439.2,696.5 478.4,696.1 498.0,694.5 513.7,692.6 529.4,690.6 545.1,689.6 564.7,689.6 584.3,690.6 600.0,691.6 613.7,691.6 619.6,689.3 629.4,687.7 639.2,683.8 651.0,680.8 660.8,674.9 668.6,675.9 682.4,679.8 698.0,683.2 709.8,686.7 721.6,689.3 737.3,688.7 749.0,685.7 760.8,684.7 771.6,680.8" fill="none" stroke="#00ff00" stroke-width="1" />
<polyline points="2.0,687.7 11.8,686.7 21.6,687.7 32.4,684.7 39.2,686.7 52.9,685.7 68.6,685.7 82.4,685.7 92.2,680.8 99.0,677.9 105.9,679.3 113.7,679.3 123.5,689.6 135.3,687.7 141.2,683.8 149.0,682.8 156.9,684.4 168.6,688.7 180.4,690.6 200.0,692.2 219.6,694.9 239.2,694.9 258.8,694.9 278.4,695.5 288.2,694.2 294.1,689.6 300.0,686.3 309.8,685.1 315.7,685.7 321.6,688.3 333.3,690.2 349.0,690.6 360.8,693.0 376.5,694.9 400.0,696.1 439.2,697.1 468.6,696.5 482.4,694.9 498.0,693.6 509.8,691.6 521.6,690.0 533.3,688.7 545.1,689.6 556.9,689.3 572.5,690.6 588.2,691.6 600.0,692.0 613.7,690.6 619.6,686.7 629.4,684.7 639.2,673.4 645.1,678.9 651.0,675.9 658.8,674.0 668.6,675.9 678.4,679.8 684.3,685.7 690.2,689.6 702.0,688.7 717.6,689.1 733.3,689.6 745.1,683.8 756.9,680.8 766.7,680.8 771.6,674.9" fill="none" stroke="#ffff00" stroke-width="1" />
</g>
<g shape-rendering="crispEdges">
<rect x="0" y="314" width="844" height="1" fill="#d02a0a" />
<rect x="0" y="395" width="844" height="1" fill="#d02a0a" />
<rect x="0" y="473" width="844" height="1" fill="#d02a0a" />
<rect x="0" y="548" width="844" height="1" fill="#d02a0a" />
<rect x="0" y="628" width="844" height="1" fill="#d02a0a" />
<rect x="0" y="706" width="844" height="1" fill="#d02a0a" />
<rect x="799" y="0" width="1" height="721" fill="#d02a0a"/>
<rect x="844" y="0" width="1" height="721" fill="#d02a0a"/>
<rect x="799" y="20" width="45" height="1" fill="#d02a0a" />
<rect x="799" y="36" width="45" height="1" fill="#d02a0a" />
<rect x="800.5" y="629.5" width="43" height="76" fill="none" stroke="#d02a0a"/>
<rect x="800" y="61" width="8" height="1" fill="#d02a0a" />
<rect x="800" y="91" width="8" height="1" fill="#d02a0a" />
<rect x="800" y="122" width="8" height="1" fill="#d02a0a" />
<rect x="800" y="152" width="8" height="1" fill="#d02a0a" />
<rect x="800" y="183" width="8" height="1" fill="#d02a0a" />
<rect x="800" y="213" width="8" height="1" fill="#d02a0a" />
<rect x="800" y="244" width="8" height="1" fill="#d02a0a" />
<rect x="800" y="274" width="8" height="1" fill="#d02a0a" />
<rect x="800" y="304" width="8" height="1" fill="#d02a0a" />
<rect x="800" y="358" width="8" height="1" fill="#d02a0a" />
<rect x="800" y="388" width="8" height="1" fill="#d02a0a" />
<rect x="800" y="412" width="8" height="1" fill="#d02a0a" />
<rect x="800" y="439" width="8" height="1" fill="#d02a0a" />
<rect x="800" y="466" width="8" height="1" fill="#d02a0a" />
<rect x="800" y="502" width="8" height="1" fill="#d02a0a" />
<rect x="800" y="535" width="8" height="1" fill="#d02a0a" />
<rect x="800" y="577" width="8" height="1" fill="#d02a0a" />
<rect x="800" y="669" width="8" height="1" fill="#d02a0a" />
<rect x="800" y="699" width="8" height="1" fill="#d02a0a" />
<line x1="801.5" y1="40" x2="801.5" y2="312" stroke="#d02a0a" stroke-width="1" stroke-dasharray="1 5"/>
<line x1="801.5" y1="330" x2="801.5" y2="394" stroke="#d02a0a" stroke-width="1" stroke-dasharray="1 5"/>
<line x1="801.5" y1="398" x2="801.5" y2="472" stroke="#d02a0a" stroke-width="1" stroke-dasharray="1 5"/>
<line x1="801.5" y1="476" x2="801.5" y2="547" stroke="#d02a0a" stroke-width="1" stroke-dasharray="1 5"/>
<line x1="801.5" y1="551" x2="801.5" y2="627" stroke="#d02a0a" stroke-width="1" stroke-dasharray="1 5"/>
<line x1="801.5" y1="632" x2="801.5" y2="704" stroke="#d02a0a" stroke-width="1" stroke-dasharray="1 5"/>
<rect x="3" y="706" width="1" height="15" fill="#d02a0a"/>
<rect x="68" y="706" width="1" height="15" fill="#d02a0a"/>
<rect x="174" y="706" width="1" height="15" fill="#d02a0a"/>
<rect x="366" y="706" width="1" height="15" fill="#d02a0a"/>
<rect x="477" y="706" width="1" height="15" fill="#d02a0a"/>
<rect x="558" y="706" width="1" height="15" fill="#d02a0a"/>
<rect x="644" y="706" width="1" height="15" fill="#d02a0a"/>
<rect x="757" y="706" width="1" height="15" fill="#d02a0a"/>
<rect x="28" y="706" width="1" height="4" fill="#d02a0a"/>
<rect x="53" y="706" width="1" height="4" fill="#d02a0a"/>
<rect x="102" y="706" width="1" height="4" fill="#d02a0a"/>
<rect x="128" y="706" width="1" height="4" fill="#d02a0a"/>
<rect x="149" y="706" width="1" height="4" fill="#d02a0a"/>
<rect x="200" y="706" width="1" height="4" fill="#d02a0a"/>
<rect x="226" y="706" width="1" height="4" fill="#d02a0a"/>
<rect x="250" y="706" width="1" height="4" fill="#d02a0a"/>
<rect x="351" y="706" width="1" height="4" fill="#d02a0a"/>
<rect x="402" y="706" width="1" height="4" fill="#d02a0a"/>
<rect x="427" y="706" width="1" height="4" fill="#d02a0a"/>
<rect x="452" y="706" width="1" height="4" fill="#d02a0a"/>
<rect x="502" y="706" width="1" height="4" fill="#d02a0a"/>
<rect x="543" y="706" width="1" height="4" fill="#d02a0a"/>
<rect x="585" y="706" width="1" height="4" fill="#d02a0a"/>
<rect x="610" y="706" width="1" height="4" fill="#d02a0a"/>
<rect x="635" y="706" width="1" height="4" fill="#d02a0a"/>
<rect x="660" y="706" width="1" height="4" fill="#d02a0a"/>
<rect x="685" y="706" width="1" height="4" fill="#d02a0a"/>
<rect x="710" y="706" width="1" height="4" fill="#d02a0a"/>
<rect x="736" y="706" width="1" height="4" fill="#d02a0a"/>
<rect x="782" y="706" width="1" height="4" fill="#d02a0a"/>
</g>
<path d="M17.2 706A6.8 6.6 0 0 1 30.8 706Z" fill="#fff"/>
<rect x="20.6" y="702.2" width="1.8" height="1.8" fill="#d02a0a"/><rect x="25.6" y="702.2" width="1.8" height="1.8" fill="#d02a0a"/>
<path d="M32.2 706A6.8 6.6 0 0 1 45.8 706Z" fill="#fff"/>
<rect x="35.6" y="702.2" width="1.8" height="1.8" fill="#d02a0a"/><rect x="40.6" y="702.2" width="1.8" height="1.8" fill="#d02a0a"/>
<path d="M48.7 706A6.8 6.6 0 0 1 62.3 706Z" fill="#fff"/>
<rect x="52.1" y="702.2" width="1.8" height="1.8" fill="#d02a0a"/><rect x="57.1" y="702.2" width="1.8" height="1.8" fill="#d02a0a"/>
<path d="M68.7 706A6.8 6.6 0 0 1 82.3 706Z" fill="#fff"/>
<rect x="72.1" y="702.2" width="1.8" height="1.8" fill="#d02a0a"/><rect x="77.1" y="702.2" width="1.8" height="1.8" fill="#d02a0a"/>
<path d="M83.2 706A6.8 6.6 0 0 1 96.8 706Z" fill="#fff"/>
<rect x="86.6" y="702.2" width="1.8" height="1.8" fill="#d02a0a"/><rect x="91.6" y="702.2" width="1.8" height="1.8" fill="#d02a0a"/>
<path d="M144.2 706A6.8 6.6 0 0 1 157.8 706Z" fill="#fff"/>
<rect x="147.6" y="702.2" width="1.8" height="1.8" fill="#d02a0a"/><rect x="152.6" y="702.2" width="1.8" height="1.8" fill="#d02a0a"/>
<path d="M230.5 706A6.8 6.6 0 0 1 244.10000000000002 706Z" fill="#fff"/>
<rect x="233.9" y="702.2" width="1.8" height="1.8" fill="#d02a0a"/><rect x="238.9" y="702.2" width="1.8" height="1.8" fill="#d02a0a"/>
<path d="M284.8 706A6.8 6.6 0 0 1 298.40000000000003 706Z" fill="#fff"/>
<rect x="288.20000000000005" y="702.2" width="1.8" height="1.8" fill="#d02a0a"/><rect x="293.20000000000005" y="702.2" width="1.8" height="1.8" fill="#d02a0a"/>
<path d="M412.5 706A6.8 6.6 0 0 1 426.1 706Z" fill="#fff"/>
<rect x="415.90000000000003" y="702.2" width="1.8" height="1.8" fill="#d02a0a"/><rect x="420.90000000000003" y="702.2" width="1.8" height="1.8" fill="#d02a0a"/>
<path d="M467.4 706A6.8 6.6 0 0 1 481.0 706Z" fill="#fff"/>
<rect x="470.8" y="702.2" width="1.8" height="1.8" fill="#d02a0a"/><rect x="475.8" y="702.2" width="1.8" height="1.8" fill="#d02a0a"/>
<path d="M549.2 706A6.8 6.6 0 0 1 562.8 706Z" fill="#fff"/>
<rect x="552.6" y="702.2" width="1.8" height="1.8" fill="#d02a0a"/><rect x="557.6" y="702.2" width="1.8" height="1.8" fill="#d02a0a"/>
<path d="M604.6 706A6.8 6.6 0 0 1 618.1999999999999 706Z" fill="#fff"/>
<rect x="608.0" y="702.2" width="1.8" height="1.8" fill="#d02a0a"/><rect x="613.0" y="702.2" width="1.8" height="1.8" fill="#d02a0a"/>
<path d="M619.8000000000001 706A6.8 6.6 0 0 1 633.4 706Z" fill="#fff"/>
<rect x="623.2" y="702.2" width="1.8" height="1.8" fill="#d02a0a"/><rect x="628.2" y="702.2" width="1.8" height="1.8" fill="#d02a0a"/>
<path d="M670.7 706A6.8 6.6 0 0 1 684.3 706Z" fill="#fff"/>
<rect x="674.1" y="702.2" width="1.8" height="1.8" fill="#d02a0a"/><rect x="679.1" y="702.2" width="1.8" height="1.8" fill="#d02a0a"/>
<path d="M715.5 706A6.8 6.6 0 0 1 729.0999999999999 706Z" fill="#fff"/>
<rect x="718.9" y="702.2" width="1.8" height="1.8" fill="#d02a0a"/><rect x="723.9" y="702.2" width="1.8" height="1.8" fill="#d02a0a"/>
<path d="M740.2 706A6.8 6.6 0 0 1 753.8 706Z" fill="#fff"/>
<rect x="743.6" y="702.2" width="1.8" height="1.8" fill="#d02a0a"/><rect x="748.6" y="702.2" width="1.8" height="1.8" fill="#d02a0a"/>
<defs><pattern id="dith" width="2" height="2" patternUnits="userSpaceOnUse"><rect width="2" height="2" fill="#0000ff"/><rect width="1" height="1" fill="#000"/><rect x="1" y="1" width="1" height="1" fill="#000"/></pattern><pattern id="dithw" width="2" height="2" patternUnits="userSpaceOnUse"><rect width="2" height="2" fill="#3a5ce0"/><rect width="1" height="1" fill="#fff"/><rect x="1" y="1" width="1" height="1" fill="#dfe6ff"/></pattern><pattern id="dithl" width="2" height="2" patternUnits="userSpaceOnUse"><rect width="2" height="2" fill="#0a34d8"/><rect width="1" height="1" fill="#7090f0"/></pattern><pattern id="dithr" width="2" height="2" patternUnits="userSpaceOnUse"><rect width="2" height="2" fill="#d02408"/><rect width="1" height="1" fill="#f0d0d0"/></pattern></defs>
<rect x="800" y="21" width="44" height="15" fill="url(#dith)" shape-rendering="crispEdges"/>
<text x="802.5" y="33" fill="#e8e8e8" font-size="12" font-family='"Liberation Sans","Noto Sans CJK SC",sans-serif' text-anchor="start" font-weight="normal" >2.578</text>
<rect x="260" y="707" width="88" height="14" fill="url(#dith)" shape-rendering="crispEdges"/>
<text x="262" y="719" fill="#e0e0e8" font-size="12" font-family='"Liberation Sans","Noto Sans CJK SC",sans-serif' text-anchor="start" font-weight="normal" >2005/11/02,三</text>
<g stroke="#d02a0a" fill="none" stroke-width="1.6"><path d="M806 3V12.5M803 5.5H809M801.5 9C802.5 12 804.5 13 806 13C807.5 13 809.5 12 810.5 9"/><circle cx="806" cy="2.6" r="1.2" fill="#d02a0a" stroke="none"/></g>
<text x="811.5" y="12.5" fill="#d02a0a" font-size="14" font-family='"Liberation Sans","Noto Sans CJK SC",sans-serif' text-anchor="start" font-weight="bold" stroke="#d02a0a" stroke-width="0.5">?</text>
<text x="812" y="327" fill="#d02a0a" font-size="14" font-family='"Liberation Sans","Noto Sans CJK SC",sans-serif' text-anchor="start" font-weight="bold" stroke="#d02a0a" stroke-width="0.5">?</text>
<text x="2" y="12.5" fill="#dcdcdc" font-size="12" font-family='"Liberation Sans","Noto Sans CJK SC",sans-serif' text-anchor="start" font-weight="normal" >长城股份</text>
<text x="56.5" y="12.5" fill="#dcdcdc" font-size="12" font-family='"Liberation Sans","Noto Sans CJK SC",sans-serif' text-anchor="start" font-weight="normal" >MA(5,10,20,60,120,250)</text>
<text x="193" y="12.5" fill="#fff" font-size="12" font-family='"Liberation Sans","Noto Sans CJK SC",sans-serif' text-anchor="start" font-weight="normal" textLength="58.3" lengthAdjust="spacing">MA1: 1.746</text>
<path d="M256.5 0V11" stroke="#00ffff" stroke-width="1" fill="none" shape-rendering="crispEdges"/><path d="M254 9L256.5 13L259 9Z" fill="#00ffff"/>
<text x="261.3" y="12.5" fill="#ffff00" font-size="12" font-family='"Liberation Sans","Noto Sans CJK SC",sans-serif' text-anchor="start" font-weight="normal" textLength="63.7" lengthAdjust="spacing">, MA2: 1.828</text>
<path d="M330.5 0V11" stroke="#00ffff" stroke-width="1" fill="none" shape-rendering="crispEdges"/><path d="M328 9L330.5 13L333 9Z" fill="#00ffff"/>
<text x="335.2" y="12.5" fill="#ff00ff" font-size="12" font-family='"Liberation Sans","Noto Sans CJK SC",sans-serif' text-anchor="start" font-weight="normal" textLength="63.7" lengthAdjust="spacing">, MA3: 1.898</text>
<path d="M404.5 0V11" stroke="#00ffff" stroke-width="1" fill="none" shape-rendering="crispEdges"/><path d="M402 9L404.5 13L407 9Z" fill="#00ffff"/>
<text x="409" y="12.5" fill="#00ff00" font-size="12" font-family='"Liberation Sans","Noto Sans CJK SC",sans-serif' text-anchor="start" font-weight="normal" textLength="63.7" lengthAdjust="spacing">, MA4: 2.031</text>
<path d="M478.5 0V11" stroke="#00ffff" stroke-width="1" fill="none" shape-rendering="crispEdges"/><path d="M476 9L478.5 13L481 9Z" fill="#00ffff"/>
<text x="482.9" y="12.5" fill="#c0c0c0" font-size="12" font-family='"Liberation Sans","Noto Sans CJK SC",sans-serif' text-anchor="start" font-weight="normal" textLength="63.7" lengthAdjust="spacing">, MA5: 1.976</text>
<path d="M552.5 0V11" stroke="#00ffff" stroke-width="1" fill="none" shape-rendering="crispEdges"/><path d="M550 9L552.5 13L555 9Z" fill="#00ffff"/>
<text x="556.7" y="12.5" fill="#0040ff" font-size="12" font-family='"Liberation Sans","Noto Sans CJK SC",sans-serif' text-anchor="start" font-weight="normal" textLength="63.7" lengthAdjust="spacing">, MA6: 2.387</text>
<path d="M626.5 0V11" stroke="#00ffff" stroke-width="1" fill="none" shape-rendering="crispEdges"/><path d="M624 9L626.5 13L629 9Z" fill="#00ffff"/>
<text x="2" y="327" fill="#dcdcdc" font-size="12" font-family='"Liberation Sans","Noto Sans CJK SC",sans-serif' text-anchor="start" font-weight="normal" >MACD(26,12,9)</text>
<text x="91.5" y="327" fill="#fff" font-size="12" font-family='"Liberation Sans","Noto Sans CJK SC",sans-serif' text-anchor="start" font-weight="normal" textLength="65.5" lengthAdjust="spacing">DIFF: -0.087</text>
<path d="M162.5 316V328" stroke="#d02a0a" stroke-width="1" fill="none" shape-rendering="crispEdges"/><path d="M160.5 319L162.5 315L164.5 319" stroke="#d02a0a" stroke-width="1" fill="none"/>
<text x="166" y="327" fill="#ffff00" font-size="12" font-family='"Liberation Sans","Noto Sans CJK SC",sans-serif' text-anchor="start" font-weight="normal" textLength="70" lengthAdjust="spacing">, DEA: -0.071</text>
<path d="M241.5 315V326" stroke="#00ffff" stroke-width="1" fill="none" shape-rendering="crispEdges"/><path d="M239 324L241.5 328L244 324Z" fill="#00ffff"/>
<text x="244.5" y="327" fill="#ff00ff" font-size="12" font-family='"Liberation Sans","Noto Sans CJK SC",sans-serif' text-anchor="start" font-weight="normal" textLength="80.5" lengthAdjust="spacing">, MACD: -0.033</text>
<path d="M331.5 316V328" stroke="#d02a0a" stroke-width="1" fill="none" shape-rendering="crispEdges"/><path d="M329.5 319L331.5 315L333.5 319" stroke="#d02a0a" stroke-width="1" fill="none"/>
<text x="2" y="408" fill="#dcdcdc" font-size="12" font-family='"Liberation Sans","Noto Sans CJK SC",sans-serif' text-anchor="start" font-weight="normal" >LPY</text>
<text x="31" y="408" fill="#dcdcdc" font-size="12" font-family='"Liberation Sans","Noto Sans CJK SC",sans-serif' text-anchor="start" font-weight="normal" >0,</text>
<text x="43" y="408" fill="#fff" font-size="12" font-family='"Liberation Sans","Noto Sans CJK SC",sans-serif' text-anchor="start" font-weight="normal" >涨跌比:</text>
<text x="85" y="408" fill="#d02a0a" font-size="12" font-family='"Liberation Sans","Noto Sans CJK SC",sans-serif' text-anchor="start" font-weight="normal" >能量比:</text>
<text x="127" y="408" fill="#00ff00" font-size="12" font-family='"Liberation Sans","Noto Sans CJK SC",sans-serif' text-anchor="start" font-weight="normal" >股头比:</text>
<text x="168" y="408" fill="#0040ff" font-size="12" font-family='"Liberation Sans","Noto Sans CJK SC",sans-serif' text-anchor="start" font-weight="normal" >资金比:</text>
<text x="2" y="486" fill="#dcdcdc" font-size="12" font-family='"Liberation Sans","Noto Sans CJK SC",sans-serif' text-anchor="start" font-weight="normal" >L3能量</text>
<text x="48" y="486" fill="#fff" font-size="12" font-family='"Liberation Sans","Noto Sans CJK SC",sans-serif' text-anchor="start" font-weight="normal" >1429308</text>
<path d="M100.5 475V487" stroke="#d02a0a" stroke-width="1" fill="none" shape-rendering="crispEdges"/><path d="M98.5 478L100.5 474L102.5 478" stroke="#d02a0a" stroke-width="1" fill="none"/>
<text x="104" y="486" fill="#ffff00" font-size="12" font-family='"Liberation Sans","Noto Sans CJK SC",sans-serif' text-anchor="start" font-weight="normal" textLength="75" lengthAdjust="spacing">, M5: 1236077</text>
<path d="M184.5 474V485" stroke="#00ffff" stroke-width="1" fill="none" shape-rendering="crispEdges"/><path d="M182 483L184.5 487L187 483Z" fill="#00ffff"/>
<text x="188" y="486" fill="#00ff00" font-size="12" font-family='"Liberation Sans","Noto Sans CJK SC",sans-serif' text-anchor="start" font-weight="normal" >, M10: 1566029</text>
<path d="M276.5 474V485" stroke="#00ffff" stroke-width="1" fill="none" shape-rendering="crispEdges"/><path d="M274 483L276.5 487L279 483Z" fill="#00ffff"/>
<text x="281" y="486" fill="#d02a0a" font-size="12" font-family='"Liberation Sans","Noto Sans CJK SC",sans-serif' text-anchor="start" font-weight="normal" >, M20: 1528505</text>
<path d="M368.5 475V487" stroke="#d02a0a" stroke-width="1" fill="none" shape-rendering="crispEdges"/><path d="M366.5 478L368.5 474L370.5 478" stroke="#d02a0a" stroke-width="1" fill="none"/>
<text x="2" y="561.5" fill="#dcdcdc" font-size="12" font-family='"Liberation Sans","Noto Sans CJK SC",sans-serif' text-anchor="start" font-weight="normal" >OBV</text>
<text x="33" y="561.5" fill="#fff" font-size="12" font-family='"Liberation Sans","Noto Sans CJK SC",sans-serif' text-anchor="start" font-weight="normal" >13136531.000</text>
<path d="M116.5 550V562" stroke="#d02a0a" stroke-width="1" fill="none" shape-rendering="crispEdges"/><path d="M114.5 553L116.5 549L118.5 553" stroke="#d02a0a" stroke-width="1" fill="none"/>
<text x="2" y="641" fill="#dcdcdc" font-size="12" font-family='"Liberation Sans","Noto Sans CJK SC",sans-serif' text-anchor="start" font-weight="normal" >VOL2(5,10)</text>
<text x="72" y="641" fill="#fff" font-size="12" font-family='"Liberation Sans","Noto Sans CJK SC",sans-serif' text-anchor="start" font-weight="normal" textLength="42" lengthAdjust="spacing">10454.0</text>
<path d="M119.5 630V642" stroke="#d02a0a" stroke-width="1" fill="none" shape-rendering="crispEdges"/><path d="M117.5 633L119.5 629L121.5 633" stroke="#d02a0a" stroke-width="1" fill="none"/>
<text x="124" y="641" fill="#ffff00" font-size="12" font-family='"Liberation Sans","Noto Sans CJK SC",sans-serif' text-anchor="start" font-weight="normal" textLength="72" lengthAdjust="spacing">, MA1: 8420.2</text>
<path d="M200.5 629V640" stroke="#00ffff" stroke-width="1" fill="none" shape-rendering="crispEdges"/><path d="M198 638L200.5 642L203 638Z" fill="#00ffff"/>
<text x="204.5" y="641" fill="#00ff00" font-size="12" font-family='"Liberation Sans","Noto Sans CJK SC",sans-serif' text-anchor="start" font-weight="normal" textLength="71.5" lengthAdjust="spacing">, MA2: 8826.0</text>
<path d="M282.5 630V642" stroke="#d02a0a" stroke-width="1" fill="none" shape-rendering="crispEdges"/><path d="M280.5 633L282.5 629L284.5 633" stroke="#d02a0a" stroke-width="1" fill="none"/>
<text x="286.5" y="641" fill="#d02a0a" font-size="12" font-family='"Liberation Sans","Noto Sans CJK SC",sans-serif' text-anchor="start" font-weight="normal" textLength="146.5" lengthAdjust="spacing">, 量比: 4.44, 总手: 87219.00</text>
<text x="3.6" y="719" fill="#d02a0a" font-size="12" font-family='"Liberation Sans","Noto Sans CJK SC",sans-serif' text-anchor="start" font-weight="normal" >2005/08</text>
<text x="69" y="719" fill="#d02a0a" font-size="12" font-family='"Liberation Sans","Noto Sans CJK SC",sans-serif' text-anchor="start" font-weight="normal" >09</text>
<text x="175" y="719" fill="#d02a0a" font-size="12" font-family='"Liberation Sans","Noto Sans CJK SC",sans-serif' text-anchor="start" font-weight="normal" >10</text>
<text x="367.4" y="719" fill="#d02a0a" font-size="12" font-family='"Liberation Sans","Noto Sans CJK SC",sans-serif' text-anchor="start" font-weight="normal" >12</text>
<text x="478.3" y="719" fill="#d02a0a" font-size="12" font-family='"Liberation Sans","Noto Sans CJK SC",sans-serif' text-anchor="start" font-weight="normal" >2006/01</text>
<text x="559" y="719" fill="#d02a0a" font-size="12" font-family='"Liberation Sans","Noto Sans CJK SC",sans-serif' text-anchor="start" font-weight="normal" >02</text>
<text x="645" y="719" fill="#d02a0a" font-size="12" font-family='"Liberation Sans","Noto Sans CJK SC",sans-serif' text-anchor="start" font-weight="normal" >03</text>
<text x="758" y="719" fill="#d02a0a" font-size="12" font-family='"Liberation Sans","Noto Sans CJK SC",sans-serif' text-anchor="start" font-weight="normal" >04</text>
<text x="802" y="719.5" fill="#dcdcdc" font-size="12" font-family='"Liberation Sans","Noto Sans CJK SC",sans-serif' text-anchor="start" font-weight="normal" >日线</text>
<text x="777.5" y="687" fill="#00e000" font-size="12" font-family='"Liberation Sans","Noto Sans CJK SC",sans-serif' text-anchor="start" font-weight="normal" textLength="66" lengthAdjust="spacing">换0%手率(日</text>
<text x="842.1" y="65.4" fill="#d02a0a" font-size="12" font-family='"Liberation Sans","Noto Sans CJK SC",sans-serif' text-anchor="end" font-weight="normal" >2.50</text>
<text x="842.1" y="95.9" fill="#d02a0a" font-size="12" font-family='"Liberation Sans","Noto Sans CJK SC",sans-serif' text-anchor="end" font-weight="normal" >2.40</text>
<text x="842.1" y="126.4" fill="#d02a0a" font-size="12" font-family='"Liberation Sans","Noto Sans CJK SC",sans-serif' text-anchor="end" font-weight="normal" >2.30</text>
<text x="842.1" y="156.9" fill="#d02a0a" font-size="12" font-family='"Liberation Sans","Noto Sans CJK SC",sans-serif' text-anchor="end" font-weight="normal" >2.20</text>
<text x="842.1" y="187.4" fill="#d02a0a" font-size="12" font-family='"Liberation Sans","Noto Sans CJK SC",sans-serif' text-anchor="end" font-weight="normal" >2.10</text>
<text x="842.1" y="217.9" fill="#d02a0a" font-size="12" font-family='"Liberation Sans","Noto Sans CJK SC",sans-serif' text-anchor="end" font-weight="normal" >2.00</text>
<text x="842.1" y="248.70000000000002" fill="#d02a0a" font-size="12" font-family='"Liberation Sans","Noto Sans CJK SC",sans-serif' text-anchor="end" font-weight="normal" >1.90</text>
<text x="842.1" y="279.09999999999997" fill="#d02a0a" font-size="12" font-family='"Liberation Sans","Noto Sans CJK SC",sans-serif' text-anchor="end" font-weight="normal" >1.80</text>
<text x="842.1" y="309.2" fill="#d02a0a" font-size="12" font-family='"Liberation Sans","Noto Sans CJK SC",sans-serif' text-anchor="end" font-weight="normal" >1.70</text>
<text x="842.1" y="362.9" fill="#d02a0a" font-size="12" font-family='"Liberation Sans","Noto Sans CJK SC",sans-serif' text-anchor="end" font-weight="normal" >-0.00</text>
<text x="842.1" y="392.9" fill="#d02a0a" font-size="12" font-family='"Liberation Sans","Noto Sans CJK SC",sans-serif' text-anchor="end" font-weight="normal" >-0.10</text>
<text x="842.1" y="416.4" fill="#d02a0a" font-size="12" font-family='"Liberation Sans","Noto Sans CJK SC",sans-serif' text-anchor="end" font-weight="normal" >10.00</text>
<text x="842.1" y="443.4" fill="#d02a0a" font-size="12" font-family='"Liberation Sans","Noto Sans CJK SC",sans-serif' text-anchor="end" font-weight="normal" >5.00</text>
<text x="842.1" y="470.4" fill="#d02a0a" font-size="12" font-family='"Liberation Sans","Noto Sans CJK SC",sans-serif' text-anchor="end" font-weight="normal" >0.00</text>
<text x="842.1" y="506.9" fill="#d02a0a" font-size="12" font-family='"Liberation Sans","Noto Sans CJK SC",sans-serif' text-anchor="end" font-weight="normal" >50000</text>
<text x="842.1" y="539.9" fill="#d02a0a" font-size="12" font-family='"Liberation Sans","Noto Sans CJK SC",sans-serif' text-anchor="end" font-weight="normal" >0</text>
<text x="842.1" y="581.9" fill="#d02a0a" font-size="12" font-family='"Liberation Sans","Noto Sans CJK SC",sans-serif' text-anchor="end" font-weight="normal" >13500</text>
<text x="842.1" y="673.9" fill="#d02a0a" font-size="12" font-family='"Liberation Sans","Noto Sans CJK SC",sans-serif' text-anchor="end" font-weight="normal" >50000</text>
<text x="842.1" y="703.9" fill="#d02a0a" font-size="12" font-family='"Liberation Sans","Noto Sans CJK SC",sans-serif' text-anchor="end" font-weight="normal" >0</text>
<rect x="800.5" y="529.5" width="30" height="16" fill="none" stroke="#d02a0a" shape-rendering="crispEdges"/>
<text x="800.5" y="541.8" fill="#d02a0a" font-size="12" font-family='"Liberation Sans","Noto Sans CJK SC",sans-serif' text-anchor="start" font-weight="normal" >X100</text>
<rect x="801.5" y="609.5" width="36" height="16" fill="none" stroke="#d02a0a" shape-rendering="crispEdges"/>
<text x="802.5" y="622" fill="#d02a0a" font-size="12" font-family='"Liberation Sans","Noto Sans CJK SC",sans-serif' text-anchor="start" font-weight="normal" >X1000</text>
<text x="842.5" y="622" fill="#d02a0a" font-size="12" font-family='"Liberation Sans","Noto Sans CJK SC",sans-serif' text-anchor="end" font-weight="normal" >0</text>
<g shape-rendering="crispEdges">
<rect x="729" y="436" width="77" height="180" fill="#0a34d8"/>
<rect x="733" y="458" width="69" height="154" fill="#fff"/>
</g>
<rect x="734" y="452" width="49" height="5" fill="url(#dithw)" shape-rendering="crispEdges"/><rect x="784" y="437" width="21" height="3" fill="url(#dithl)" shape-rendering="crispEdges"/>
<rect x="787" y="442" width="13" height="13" rx="2" fill="#d8401c" stroke="#fff" stroke-width="1"/>
<path d="M790.5 445.5L796.5 451.5M796.5 445.5L790.5 451.5" stroke="#fff" stroke-width="2"/>
<path d="M742 462V474L745 471.5L747.3 476L749 475.2L746.8 470.8H750.5Z" fill="#fff" stroke="#000" stroke-width="1"/>
<path d="M759 475.5L773 462.5M759 475.5L775 470.5" stroke="#000" stroke-width="1"/><path d="M759 475.5L774 466" stroke="#1038d0" stroke-width="1"/>
<path d="M782.5 461V475.5H798M782.5 475.5L797 461.5" stroke="#000" stroke-width="1" fill="none"/><path d="M782.5 475.5L786 461M782.5 475.5L790 461M782.5 475.5L798 467M782.5 475.5L798 471.5" stroke="#1038d0" stroke-width="1"/>
<path d="M738 485L749 496" stroke="#1038d0" stroke-width="1.2"/><rect x="737" y="484" width="2" height="2" fill="#000"/><rect x="748.5" y="495" width="2" height="2" fill="#000"/>
<path d="M760 483L775 498" stroke="#1038d0" stroke-width="1.2"/>
<path d="M787 484L797 494M783 488L793 498" stroke="#909090" stroke-width="1"/>
<path d="M737 506.5H751" stroke="#000" stroke-width="1"/><path d="M737 519.5H751" stroke="#1038d0" stroke-width="1"/><path d="M737 516.5H751" stroke="#8090c0" stroke-width="1" stroke-dasharray="1 1"/><path d="M743 510.5H751M743 512.5H751" stroke="#8090c0" stroke-width="1" stroke-dasharray="1 1"/>
<text x="737" y="515" font-size="8.5" font-weight="bold" fill="#1038d0" font-family='"Liberation Sans",sans-serif'>G</text>
<path d="M760 506.5H774" stroke="#000" stroke-width="1"/><path d="M760 519.5H774" stroke="#1038d0" stroke-width="1"/><path d="M760 516.5H774" stroke="#8090c0" stroke-width="1" stroke-dasharray="1 1"/><path d="M766 510.5H774M766 512.5H774" stroke="#8090c0" stroke-width="1" stroke-dasharray="1 1"/>
<text x="760" y="515" font-size="8.5" font-weight="bold" fill="#1038d0" font-family='"Liberation Sans",sans-serif'>T</text>
<path d="M783 506.5H797" stroke="#000" stroke-width="1"/><path d="M783 519.5H797" stroke="#1038d0" stroke-width="1"/><path d="M783 516.5H797" stroke="#8090c0" stroke-width="1" stroke-dasharray="1 1"/><path d="M789 510.5H797M789 512.5H797" stroke="#8090c0" stroke-width="1" stroke-dasharray="1 1"/>
<text x="783" y="515" font-size="8.5" font-weight="bold" fill="#1038d0" font-family='"Liberation Sans",sans-serif'>%</text>
<path d="M737.5 527V542M750.5 527V542" stroke="#000" stroke-width="1"/><path d="M737.5 538L750.5 532" stroke="#1038d0" stroke-width="1"/>
<path d="M760.5 527V542M773.5 527V542" stroke="#000" stroke-width="1"/><path d="M760.5 534L773.5 528M760.5 541L773.5 535" stroke="#1038d0" stroke-width="1"/><path d="M760.5 537.5L773.5 531.5" stroke="#000" stroke-width="1"/>
<path d="M783.5 527V542M794.5 527V542" stroke="#000" stroke-width="1"/><path d="M783.5 534L798 527.5M783.5 541L798 534.5" stroke="#1038d0" stroke-width="1"/><path d="M783.5 537.5L798 531" stroke="#000" stroke-width="1"/>
<path d="M737.5 550V564" stroke="#1038d0" stroke-width="1"/><path d="M741.5 550V564M745.5 550V564M749.5 550V564" stroke="#000" stroke-width="1"/>
<path d="M759.5 550V564" stroke="#1038d0" stroke-width="1"/><path d="M761.5 550V564M764.5 550V564M768.5 550V564M774.5 550V564" stroke="#000" stroke-width="1"/>
<text x="782.5" y="564" font-size="18" fill="#1038d0" font-family='"Liberation Serif",serif'>A</text>
<rect x="737.5" y="573.5" width="13" height="10" fill="none" stroke="#000" stroke-width="1"/>
<path d="M763 572.5C778 572 778 584.5 763 584.5" fill="none" stroke="#000" stroke-width="1"/>
<path d="M783.5 584A6.5 6.5 0 0 1 796.5 584M786 584A4 4 0 0 1 794 584M788 584A2 2 0 0 1 792 584" fill="none" stroke="#000" stroke-width="1"/><path d="M788 584L797 575" stroke="#1038d0" stroke-width="1"/>
<path d="M744.5 596L740.5 601H742.5V605.5H746.5V601H748.5Z" fill="#fff" stroke="#d02000" stroke-width="1"/>
<path d="M766.5 606L762.5 601H764.5V597.5H768.5V601H770.5Z" fill="#fff" stroke="#208020" stroke-width="1"/>
<path d="M784 595L796 606M796 595L784 606M783 601H797" stroke="#a0a0a0" stroke-width="0.8"/>
<g shape-rendering="crispEdges">
<rect x="70.5" y="422.5" width="712" height="29" fill="#fff" stroke="#f0a0c8" stroke-width="1"/>
<rect x="138" y="423" width="1" height="28" fill="#f0a0c8"/>
<rect x="206" y="423" width="1" height="28" fill="#f0a0c8"/>
<rect x="274" y="423" width="1" height="28" fill="#f0a0c8"/>
<rect x="342" y="423" width="1" height="28" fill="#f0a0c8"/>
<rect x="410" y="423" width="1" height="28" fill="#f0a0c8"/>
<rect x="498" y="423" width="1" height="28" fill="#f0a0c8"/>
<rect x="566" y="423" width="1" height="28" fill="#f0a0c8"/>
<rect x="654" y="423" width="1" height="28" fill="#f0a0c8"/>
</g>
<text x="98.5" y="442" fill="#000" font-size="12" font-family='"Liberation Sans","Noto Sans CJK SC",sans-serif' text-anchor="start" font-weight="normal" textLength="36" lengthAdjust="spacing">000569</text>
<text x="155" y="442" fill="#000" font-size="12" font-family='"Liberation Sans","Noto Sans CJK SC",sans-serif' text-anchor="start" font-weight="normal" >长城股份</text>
<text x="247" y="442" fill="#000" font-size="12" font-family='"Liberation Sans","Noto Sans CJK SC",sans-serif' text-anchor="start" font-weight="normal" textLength="24" lengthAdjust="spacing">2.26</text>
<text x="309" y="442" fill="#000" font-size="12" font-family='"Liberation Sans","Noto Sans CJK SC",sans-serif' text-anchor="start" font-weight="normal" textLength="30" lengthAdjust="spacing">2.272</text>
<text x="377" y="442" fill="#000" font-size="12" font-family='"Liberation Sans","Noto Sans CJK SC",sans-serif' text-anchor="start" font-weight="normal" textLength="30" lengthAdjust="spacing">2.390</text>
<text x="470.5" y="442" fill="#000" font-size="12" font-family='"Liberation Sans","Noto Sans CJK SC",sans-serif' text-anchor="start" font-weight="normal" textLength="24" lengthAdjust="spacing">3000</text>
<text x="533" y="442" fill="#d02000" font-size="12" font-family='"Liberation Sans","Noto Sans CJK SC",sans-serif' text-anchor="start" font-weight="normal" textLength="30" lengthAdjust="spacing">0.118</text>
<text x="608" y="442" fill="#d02000" font-size="12" font-family='"Liberation Sans","Noto Sans CJK SC",sans-serif' text-anchor="start" font-weight="normal" textLength="42" lengthAdjust="spacing">352.710</text>
<text x="677.2" y="442" fill="#000" font-size="12" font-family='"Liberation Sans","Noto Sans CJK SC",sans-serif' text-anchor="start" font-weight="normal" textLength="101" lengthAdjust="spacing">2006-4-6 11:10:01</text>
<g shape-rendering="crispEdges">
<rect x="844" y="19" width="176" height="1" fill="#d02a0a" />
<rect x="844" y="38" width="176" height="1" fill="#d02a0a" />
<rect x="844" y="133" width="176" height="1" fill="#d02a0a" />
<rect x="844" y="228" width="176" height="1" fill="#d02a0a" />
<rect x="844" y="342" width="176" height="1" fill="#d02a0a" />
<rect x="844" y="361" width="176" height="1" fill="#d02a0a" />
<rect x="844" y="366" width="140" height="1" fill="#d02a0a" />
<rect x="844" y="463" width="140" height="1" fill="#d02a0a" />
<rect x="844" y="560" width="140" height="1" fill="#d02a0a" />
<rect x="844" y="625" width="176" height="1" fill="#d02a0a" />
<rect x="984" y="366" width="1" height="244" fill="#d02a0a"/>
<rect x="844" y="701" width="42" height="2" fill="#d02a0a" />
<line x1="845" y1="390.5" x2="984" y2="390.5" stroke="#d02a0a" stroke-width="1" stroke-dasharray="1 1"/>
<line x1="845" y1="414.5" x2="984" y2="414.5" stroke="#d02a0a" stroke-width="1" stroke-dasharray="1 1"/>
<line x1="845" y1="438.5" x2="984" y2="438.5" stroke="#d02a0a" stroke-width="1" stroke-dasharray="1 1"/>
<line x1="845" y1="487.5" x2="984" y2="487.5" stroke="#d02a0a" stroke-width="1" stroke-dasharray="1 1"/>
<line x1="845" y1="511.5" x2="984" y2="511.5" stroke="#d02a0a" stroke-width="1" stroke-dasharray="1 1"/>
<line x1="845" y1="535.5" x2="984" y2="535.5" stroke="#d02a0a" stroke-width="1" stroke-dasharray="1 1"/>
<line x1="878.5" y1="367" x2="878.5" y2="625" stroke="#d02a0a" stroke-width="1" stroke-dasharray="1 1"/>
<line x1="913.5" y1="367" x2="913.5" y2="625" stroke="#d02a0a" stroke-width="1" stroke-dasharray="1 1"/>
<line x1="948.5" y1="367" x2="948.5" y2="625" stroke="#d02a0a" stroke-width="1" stroke-dasharray="1 1"/>
</g>
<g shape-rendering="crispEdges">
<rect x="848" y="623" width="1" height="2" fill="#ffff00"/>
<rect x="850" y="619" width="1" height="6" fill="#ffff00"/>
<rect x="852" y="624" width="1" height="1" fill="#ffff00"/>
<rect x="853" y="624" width="1" height="1" fill="#ffff00"/>
<rect x="854" y="623" width="1" height="2" fill="#ffff00"/>
<rect x="855" y="623" width="1" height="2" fill="#ffff00"/>
<rect x="856" y="622" width="1" height="3" fill="#ffff00"/>
<rect x="858" y="621" width="1" height="4" fill="#ffff00"/>
<rect x="859" y="610" width="1" height="15" fill="#ffff00"/>
<rect x="860" y="619" width="1" height="6" fill="#ffff00"/>
<rect x="861" y="623" width="1" height="2" fill="#ffff00"/>
<rect x="862" y="619" width="1" height="6" fill="#ffff00"/>
<rect x="863" y="621" width="1" height="4" fill="#ffff00"/>
<rect x="865" y="608" width="1" height="17" fill="#ffff00"/>
<rect x="866" y="621" width="1" height="4" fill="#ffff00"/>
<rect x="868" y="622" width="1" height="3" fill="#ffff00"/>
<rect x="869" y="618" width="1" height="7" fill="#ffff00"/>
<rect x="870" y="622" width="1" height="3" fill="#ffff00"/>
<rect x="872" y="624" width="1" height="1" fill="#ffff00"/>
<rect x="873" y="624" width="1" height="1" fill="#ffff00"/>
<rect x="874" y="623" width="1" height="2" fill="#ffff00"/>
<rect x="877" y="624" width="1" height="1" fill="#ffff00"/>
<rect x="878" y="624" width="1" height="1" fill="#ffff00"/>
<rect x="879" y="621" width="1" height="4" fill="#ffff00"/>
<rect x="880" y="617" width="1" height="8" fill="#ffff00"/>
<rect x="883" y="623" width="1" height="2" fill="#ffff00"/>
<rect x="887" y="623" width="1" height="2" fill="#ffff00"/>
<rect x="890" y="623" width="1" height="2" fill="#ffff00"/>
<rect x="893" y="623" width="1" height="2" fill="#ffff00"/>
<rect x="894" y="614" width="1" height="11" fill="#ffff00"/>
<rect x="895" y="624" width="1" height="1" fill="#ffff00"/>
<rect x="896" y="602" width="1" height="23" fill="#ffff00"/>
<rect x="897" y="561" width="1" height="64" fill="#ffff00"/>
<rect x="898" y="613" width="1" height="12" fill="#ffff00"/>
<rect x="899" y="604" width="1" height="21" fill="#ffff00"/>
<rect x="900" y="619" width="1" height="6" fill="#ffff00"/>
<rect x="901" y="620" width="1" height="5" fill="#ffff00"/>
<rect x="902" y="623" width="1" height="2" fill="#ffff00"/>
<rect x="903" y="622" width="1" height="3" fill="#ffff00"/>
<rect x="904" y="622" width="1" height="3" fill="#ffff00"/>
<rect x="905" y="622" width="1" height="3" fill="#ffff00"/>
<rect x="906" y="618" width="1" height="7" fill="#ffff00"/>
<rect x="907" y="624" width="1" height="1" fill="#ffff00"/>
<rect x="908" y="624" width="1" height="1" fill="#ffff00"/>
<rect x="909" y="624" width="1" height="1" fill="#ffff00"/>
<rect x="910" y="620" width="1" height="5" fill="#ffff00"/>
<rect x="911" y="621" width="1" height="4" fill="#ffff00"/>
<rect x="912" y="612" width="1" height="13" fill="#ffff00"/>
<rect x="913" y="560" width="1" height="65" fill="#ffff00"/>
<rect x="914" y="616" width="1" height="9" fill="#ffff00"/>
<rect x="915" y="618" width="1" height="7" fill="#ffff00"/>
<rect x="916" y="613" width="1" height="12" fill="#ffff00"/>
<rect x="917" y="616" width="1" height="9" fill="#ffff00"/>
<rect x="918" y="621" width="1" height="4" fill="#ffff00"/>
<rect x="919" y="618" width="1" height="7" fill="#ffff00"/>
<rect x="920" y="618" width="1" height="7" fill="#ffff00"/>
<rect x="921" y="620" width="1" height="5" fill="#ffff00"/>
<rect x="922" y="609" width="1" height="16" fill="#ffff00"/>
<rect x="923" y="615" width="1" height="10" fill="#ffff00"/>
<rect x="924" y="623" width="1" height="2" fill="#ffff00"/>
<rect x="925" y="617" width="1" height="8" fill="#ffff00"/>
<rect x="926" y="623" width="1" height="2" fill="#ffff00"/>
<rect x="928" y="618" width="1" height="7" fill="#ffff00"/>
<rect x="929" y="573" width="1" height="52" fill="#ffff00"/>
<rect x="930" y="569" width="1" height="56" fill="#ffff00"/>
<rect x="931" y="605" width="1" height="20" fill="#ffff00"/>
<rect x="932" y="615" width="1" height="10" fill="#ffff00"/>
<rect x="933" y="596" width="1" height="29" fill="#ffff00"/>
<rect x="934" y="623" width="1" height="2" fill="#ffff00"/>
</g>
<g stroke-linejoin="round" shape-rendering="crispEdges">
<polyline points="844.9,472.1 850.6,462.3 857.6,457.9 861.2,453.5 871.8,455.3 892.9,456.5 896.5,451.8 899.1,443.8 903.5,441.5 911.5,440.3 914.1,434.1 919.4,427.9 924.7,424.4 929.1,422.6 930.9,412.9 933.5,409.4" fill="none" stroke="#ffff00" stroke-width="1" />
<polyline points="844.9,472.1 847.1,464.1 848.8,465.9 850.9,456.2 852.4,462.3 855.9,456.2 857.6,458.8 860.8,446.5 862.9,451.8 866.5,457.9 871.8,459.7 872.6,463.2 874.4,459.7 877.9,458.8 880.6,463.2 882.4,459.7 885.0,463.2 886.8,459.7 891.2,460.6 892.9,463.2 894.7,451.8 896.5,441.2 897.9,421.8 899.6,411.2 901.4,428.8 904.9,419.1 907.1,425.3 909.3,433.2 911.5,423.5 913.2,404.1 915.0,390.0 917.6,380.3 919.8,388.2 921.5,397.1 923.8,390.0 925.6,386.5 927.3,381.2 929.1,389.1 930.3,367.1 931.8,366.2 933.0,373.2 934.1,369.7" fill="none" stroke="#fff" stroke-width="1" />
</g>
<text x="984.6" y="394.9" fill="#d02a0a" font-size="12" font-family='"Liberation Sans","Noto Sans CJK SC",sans-serif' text-anchor="start" font-weight="normal" >2.335</text>
<text x="984.6" y="418.9" fill="#d02a0a" font-size="12" font-family='"Liberation Sans","Noto Sans CJK SC",sans-serif' text-anchor="start" font-weight="normal" >2.280</text>
<text x="984.6" y="442.9" fill="#d02a0a" font-size="12" font-family='"Liberation Sans","Noto Sans CJK SC",sans-serif' text-anchor="start" font-weight="normal" >2.225</text>
<text x="984.6" y="467.9" fill="#e0e4f0" font-size="12" font-family='"Liberation Sans","Noto Sans CJK SC",sans-serif' text-anchor="start" font-weight="normal" >2.170</text>
<text x="984.6" y="491.9" fill="#00ffff" font-size="12" font-family='"Liberation Sans","Noto Sans CJK SC",sans-serif' text-anchor="start" font-weight="normal" >2.115</text>
<text x="984.6" y="515.9" fill="#00ffff" font-size="12" font-family='"Liberation Sans","Noto Sans CJK SC",sans-serif' text-anchor="start" font-weight="normal" >2.060</text>
<text x="984.6" y="539.9" fill="#00ffff" font-size="12" font-family='"Liberation Sans","Noto Sans CJK SC",sans-serif' text-anchor="start" font-weight="normal" >2.005</text>
<text x="984.6" y="574.4" fill="#e0e4f0" font-size="12" font-family='"Liberation Sans","Noto Sans CJK SC",sans-serif' text-anchor="start" font-weight="normal" >6705</text>
<text x="985" y="622" fill="#dcdcdc" font-size="12" font-family='"Liberation Sans","Noto Sans CJK SC",sans-serif' text-anchor="start" font-weight="normal" >分时</text>
<text x="863.8" y="15" fill="#d4d4d4" font-size="14" font-family='"Liberation Sans",sans-serif' text-anchor="start" font-weight="bold" >000569</text>
<text x="916" y="15.5" fill="#d4d4d4" font-size="16" font-family='"Liberation Sans","Noto Serif CJK SC",serif' text-anchor="start" font-weight="normal" >长城股份</text>
<text x="979.5" y="15" fill="#d4d4d4" font-size="14" font-family='"Liberation Sans",sans-serif' text-anchor="start" font-weight="bold" >(20)</text>
<text x="847" y="34.4" fill="#d4d4d4" font-size="16" font-family='"Liberation Sans","Noto Serif CJK SC",serif' text-anchor="start" font-weight="normal" >委比</text>
<text x="931.6" y="33.6" fill="#00ffff" font-size="14" font-family='"Liberation Sans",sans-serif' text-anchor="end" font-weight="bold" >-22.63%</text>
<text x="934.5" y="34.4" fill="#d4d4d4" font-size="16" font-family='"Liberation Sans","Noto Serif CJK SC",serif' text-anchor="start" font-weight="normal" >委差</text>
<text x="1019.3" y="33.6" fill="#00ffff" font-size="14" font-family='"Liberation Sans",sans-serif' text-anchor="end" font-weight="bold" >-1619</text>
<text x="847" y="53.4" fill="#d4d4d4" font-size="16" font-family='"Liberation Sans","Noto Serif CJK SC",serif' text-anchor="start" font-weight="normal" >卖⑤</text>
<text x="847" y="72.5" fill="#d4d4d4" font-size="16" font-family='"Liberation Sans","Noto Serif CJK SC",serif' text-anchor="start" font-weight="normal" >卖④</text>
<text x="847" y="91.7" fill="#d4d4d4" font-size="16" font-family='"Liberation Sans","Noto Serif CJK SC",serif' text-anchor="start" font-weight="normal" >卖③</text>
<text x="847" y="110.8" fill="#d4d4d4" font-size="16" font-family='"Liberation Sans","Noto Serif CJK SC",serif' text-anchor="start" font-weight="normal" >卖②</text>
<text x="847" y="129.8" fill="#d4d4d4" font-size="16" font-family='"Liberation Sans","Noto Serif CJK SC",serif' text-anchor="start" font-weight="normal" >卖①</text>
<text x="847" y="148.8" fill="#d4d4d4" font-size="16" font-family='"Liberation Sans","Noto Serif CJK SC",serif' text-anchor="start" font-weight="normal" >买①</text>
<text x="847" y="167.8" fill="#d4d4d4" font-size="16" font-family='"Liberation Sans","Noto Serif CJK SC",serif' text-anchor="start" font-weight="normal" >买②</text>
<text x="847" y="186.8" fill="#d4d4d4" font-size="16" font-family='"Liberation Sans","Noto Serif CJK SC",serif' text-anchor="start" font-weight="normal" >买③</text>
<text x="847" y="205.8" fill="#d4d4d4" font-size="16" font-family='"Liberation Sans","Noto Serif CJK SC",serif' text-anchor="start" font-weight="normal" >买④</text>
<text x="847" y="224.8" fill="#d4d4d4" font-size="16" font-family='"Liberation Sans","Noto Serif CJK SC",serif' text-anchor="start" font-weight="normal" >买⑤</text>
<text x="931.6" y="129" fill="#d02a0a" font-size="14" font-family='"Liberation Sans",sans-serif' text-anchor="end" font-weight="bold" >2.39</text>
<text x="1019.3" y="129" fill="#00ffff" font-size="14" font-family='"Liberation Sans",sans-serif' text-anchor="end" font-weight="bold" >4387</text>
<text x="931.6" y="148" fill="#d02a0a" font-size="14" font-family='"Liberation Sans",sans-serif' text-anchor="end" font-weight="bold" >2.38</text>
<text x="1019.3" y="148" fill="#d02a0a" font-size="14" font-family='"Liberation Sans",sans-serif' text-anchor="end" font-weight="bold" >36</text>
<text x="931.6" y="167" fill="#d02a0a" font-size="14" font-family='"Liberation Sans",sans-serif' text-anchor="end" font-weight="bold" >2.37</text>
<text x="1019.3" y="167" fill="#d02a0a" font-size="14" font-family='"Liberation Sans",sans-serif' text-anchor="end" font-weight="bold" >290</text>
<text x="931.6" y="186" fill="#d02a0a" font-size="14" font-family='"Liberation Sans",sans-serif' text-anchor="end" font-weight="bold" >2.36</text>
<text x="1019.3" y="186" fill="#d02a0a" font-size="14" font-family='"Liberation Sans",sans-serif' text-anchor="end" font-weight="bold" >521</text>
<text x="931.6" y="205" fill="#d02a0a" font-size="14" font-family='"Liberation Sans",sans-serif' text-anchor="end" font-weight="bold" >2.35</text>
<text x="1019.3" y="205" fill="#d02a0a" font-size="14" font-family='"Liberation Sans",sans-serif' text-anchor="end" font-weight="bold" >1363</text>
<text x="931.6" y="224" fill="#d02a0a" font-size="14" font-family='"Liberation Sans",sans-serif' text-anchor="end" font-weight="bold" >2.34</text>
<text x="1019.3" y="224" fill="#d02a0a" font-size="14" font-family='"Liberation Sans",sans-serif' text-anchor="end" font-weight="bold" >558</text>
<text x="847" y="243.8" fill="#d4d4d4" font-size="16" font-family='"Liberation Sans","Noto Serif CJK SC",serif' text-anchor="start" font-weight="normal" >最新</text>
<text x="931.6" y="243" fill="#d02a0a" font-size="14" font-family='"Liberation Sans",sans-serif' text-anchor="end" font-weight="bold" >2.38</text>
<text x="934.5" y="243.8" fill="#d4d4d4" font-size="16" font-family='"Liberation Sans","Noto Serif CJK SC",serif' text-anchor="start" font-weight="normal" >均价</text>
<text x="1019.3" y="243" fill="#d02a0a" font-size="14" font-family='"Liberation Sans",sans-serif' text-anchor="end" font-weight="bold" >2.29</text>
<text x="847" y="262.8" fill="#d4d4d4" font-size="16" font-family='"Liberation Sans","Noto Serif CJK SC",serif' text-anchor="start" font-weight="normal" >涨跌</text>
<text x="931.6" y="262" fill="#d02a0a" font-size="14" font-family='"Liberation Sans",sans-serif' text-anchor="end" font-weight="bold" >0.21</text>
<text x="934.5" y="262.8" fill="#d4d4d4" font-size="16" font-family='"Liberation Sans","Noto Serif CJK SC",serif' text-anchor="start" font-weight="normal" >昨收</text>
<text x="1019.3" y="262" fill="#e4e4e4" font-size="14" font-family='"Liberation Sans",sans-serif' text-anchor="end" font-weight="bold" >2.17</text>
<text x="847" y="281.8" fill="#d4d4d4" font-size="16" font-family='"Liberation Sans","Noto Serif CJK SC",serif' text-anchor="start" font-weight="normal" >幅度</text>
<text x="931.6" y="281" fill="#d02a0a" font-size="14" font-family='"Liberation Sans",sans-serif' text-anchor="end" font-weight="bold" >+9.68%</text>
<text x="934.5" y="281.8" fill="#d4d4d4" font-size="16" font-family='"Liberation Sans","Noto Serif CJK SC",serif' text-anchor="start" font-weight="normal" >今开</text>
<text x="1019.3" y="281" fill="#e4e4e4" font-size="14" font-family='"Liberation Sans",sans-serif' text-anchor="end" font-weight="bold" >2.17</text>
<text x="847" y="300.8" fill="#d4d4d4" font-size="16" font-family='"Liberation Sans","Noto Serif CJK SC",serif' text-anchor="start" font-weight="normal" >总手</text>
<text x="931.6" y="300" fill="#e4e4e4" font-size="14" font-family='"Liberation Sans",sans-serif' text-anchor="end" font-weight="bold" >87219</text>
<text x="934.5" y="300.8" fill="#d4d4d4" font-size="16" font-family='"Liberation Sans","Noto Serif CJK SC",serif' text-anchor="start" font-weight="normal" >最高</text>
<text x="1019.3" y="300" fill="#d02a0a" font-size="14" font-family='"Liberation Sans",sans-serif' text-anchor="end" font-weight="bold" >2.39</text>
<text x="847" y="319.8" fill="#d4d4d4" font-size="16" font-family='"Liberation Sans","Noto Serif CJK SC",serif' text-anchor="start" font-weight="normal" >现手</text>
<text x="931.6" y="319" fill="#d02a0a" font-size="14" font-family='"Liberation Sans",sans-serif' text-anchor="end" font-weight="bold" >74</text>
<text x="934.5" y="319.8" fill="#d4d4d4" font-size="16" font-family='"Liberation Sans","Noto Serif CJK SC",serif' text-anchor="start" font-weight="normal" >最低</text>
<text x="1019.3" y="319" fill="#00ffff" font-size="14" font-family='"Liberation Sans",sans-serif' text-anchor="end" font-weight="bold" >2.15</text>
<text x="847" y="338.8" fill="#d4d4d4" font-size="16" font-family='"Liberation Sans","Noto Serif CJK SC",serif' text-anchor="start" font-weight="normal" >金额</text>
<text x="931.6" y="338" fill="#e4e4e4" font-size="14" font-family='"Liberation Sans",sans-serif' text-anchor="end" font-weight="bold" >1999.6</text>
<text x="934.5" y="338.8" fill="#d4d4d4" font-size="16" font-family='"Liberation Sans","Noto Serif CJK SC",serif' text-anchor="start" font-weight="normal" >量比</text>
<text x="1019.3" y="338" fill="#e4e4e4" font-size="14" font-family='"Liberation Sans",sans-serif' text-anchor="end" font-weight="bold" >4.44</text>
<text x="847" y="357.8" fill="#d4d4d4" font-size="16" font-family='"Liberation Sans","Noto Serif CJK SC",serif' text-anchor="start" font-weight="normal" >外盘</text>
<text x="931.6" y="357" fill="#d02a0a" font-size="14" font-family='"Liberation Sans",sans-serif' text-anchor="end" font-weight="bold" >59105</text>
<text x="934.5" y="357.8" fill="#d4d4d4" font-size="16" font-family='"Liberation Sans","Noto Serif CJK SC",serif' text-anchor="start" font-weight="normal" >内盘</text>
<text x="1019.3" y="357" fill="#00ffff" font-size="14" font-family='"Liberation Sans",sans-serif' text-anchor="end" font-weight="bold" >28114</text>
<text x="845.5" y="716.8" fill="#d4d4d4" font-size="15" font-family='"Liberation Sans","Noto Serif CJK SC",serif' text-anchor="start" font-weight="normal" >细</text>
<text x="864.7" y="716.8" fill="#d4d4d4" font-size="15" font-family='"Liberation Sans","Noto Serif CJK SC",serif' text-anchor="start" font-weight="normal" >价</text>
<path d="M845.5 702.5V716L848 721M862 703V716L864.5 721M864.5 703L866 716M883 703V716L885.5 721" stroke="#d02a0a" fill="none" stroke-width="1"/>
<g shape-rendering="crispEdges">
<rect x="0" y="721" width="886" height="2" fill="#fff"/>
<rect x="0" y="742" width="886" height="1" fill="#c8c8c8"/>
<rect x="0" y="724" width="68" height="16.5" fill="#fff"/>
<rect x="807" y="724" width="1" height="16" fill="#a0a0a0"/>
</g>
<g shape-rendering="crispEdges"><rect x="6.5" y="727.5" width="9" height="6" fill="#fff" stroke="#000"/><rect x="4.5" y="729.5" width="9" height="6" fill="#fff" stroke="#000"/><rect x="2.5" y="731.5" width="9" height="7" fill="#f0e060" stroke="#000"/><rect x="3" y="732" width="8" height="2" fill="#2040c0"/></g>
<text x="17.6" y="736.5" fill="#000" font-size="12.5" font-family='"Liberation Sans","Noto Sans CJK SC",sans-serif' text-anchor="start" font-weight="normal" textLength="47.7" lengthAdjust="spacingAndGlyphs" stroke="#000" stroke-width="0.3">长城股份</text>
<text x="72" y="736.5" fill="#dcdcdc" font-size="12" font-family='"Liberation Sans","Noto Sans CJK SC",sans-serif' text-anchor="start" font-weight="normal" >沪</text>
<text x="86" y="736.5" fill="#d02a0a" font-size="12" font-family='"Liberation Sans","Noto Sans CJK SC",sans-serif' text-anchor="start" font-weight="normal" textLength="41" lengthAdjust="spacing">1344.50</text>
<text x="134" y="736.5" fill="#d02a0a" font-size="12" font-family='"Liberation Sans","Noto Sans CJK SC",sans-serif' text-anchor="start" font-weight="normal" textLength="29" lengthAdjust="spacing">+4.33</text>
<text x="165" y="736.5" fill="#fff" font-size="12" font-family='"Liberation Sans","Noto Sans CJK SC",sans-serif' text-anchor="start" font-weight="normal" textLength="66" lengthAdjust="spacing">1,394,083万</text>
<text x="238" y="736.5" fill="#fff" font-size="12" font-family='"Liberation Sans","Noto Sans CJK SC",sans-serif' text-anchor="start" font-weight="normal" textLength="71" lengthAdjust="spacing">27,729,930手</text>
<text x="439" y="736.5" fill="#dcdcdc" font-size="12" font-family='"Liberation Sans","Noto Sans CJK SC",sans-serif' text-anchor="start" font-weight="normal" >深</text>
<text x="452.3" y="736.5" fill="#d02a0a" font-size="12" font-family='"Liberation Sans","Noto Sans CJK SC",sans-serif' text-anchor="start" font-weight="normal" textLength="41" lengthAdjust="spacing">3700.43</text>
<text x="499.5" y="736.5" fill="#d02a0a" font-size="12" font-family='"Liberation Sans","Noto Sans CJK SC",sans-serif' text-anchor="start" font-weight="normal" textLength="35" lengthAdjust="spacing">+32.16</text>
<text x="539" y="736.5" fill="#fff" font-size="12" font-family='"Liberation Sans","Noto Sans CJK SC",sans-serif' text-anchor="start" font-weight="normal" textLength="54" lengthAdjust="spacing">928,477万</text>
<text x="598" y="736.5" fill="#fff" font-size="12" font-family='"Liberation Sans","Noto Sans CJK SC",sans-serif' text-anchor="start" font-weight="normal" textLength="71" lengthAdjust="spacing">20,610,896手</text>
<g shape-rendering="crispEdges">
<rect x="310" y="726" width="92" height="13" fill="#fff"/><rect x="311" y="727" width="41" height="11" fill="url(#dithr)"/><rect x="354" y="727" width="47" height="11" fill="#00ffff"/>
<rect x="671" y="726" width="121" height="13" fill="#fff"/><rect x="672" y="727" width="55" height="11" fill="url(#dithr)"/><rect x="729" y="727" width="62" height="11" fill="#00ffff"/>
</g>
<g stroke="#d02a0a" fill="none" stroke-width="1"><path d="M817 727V734M814.5 726.5A3.5 3.5 0 0 0 814.5 731.5M819.5 726.5A3.5 3.5 0 0 1 819.5 731.5"/><path d="M817 733L813.5 740.5H820.5Z" fill="#fff"/><path d="M814.5 737.5H819.5" /></g>
<rect x="885" y="702" width="135" height="41" fill="#cdcdcd"/>
<rect x="887" y="704" width="23" height="21.5" fill="#d02808"/>
<path d="M887 725.5V721L893.7 714L897 718.8L904 710.5L906 712.6L910 708.5V725.5Z" fill="#5a20b0"/>
<path d="M887.5 720.6L893.7 713.8L897 718.6L904 710.3L906 712.4L910 708.3" stroke="#f4f0e0" stroke-width="1.7" fill="none"/>
<text x="913" y="720.8" fill="#d02010" font-size="18" font-family='"Liberation Sans",sans-serif' text-anchor="start" font-weight="bold" font-style="italic" textLength="30" lengthAdjust="spacingAndGlyphs">767</text>
<text x="944.5" y="720.3" fill="#d02010" font-size="15" font-family='"Liberation Sans","Noto Sans CJK SC",sans-serif' text-anchor="start" font-weight="bold" textLength="72.5" lengthAdjust="spacingAndGlyphs">股票学习网</text>
<line x1="887" y1="726.8" x2="1020" y2="726.8" stroke="#e0a050" stroke-width="1" stroke-dasharray="4 2"/>
<text x="887.5" y="739" fill="#404040" font-size="13" font-family='"Liberation Sans","Noto Sans CJK SC",sans-serif' text-anchor="start" font-weight="normal" textLength="129.5" lengthAdjust="spacing">www.net767.com</text>
</svg>
</body></html>
